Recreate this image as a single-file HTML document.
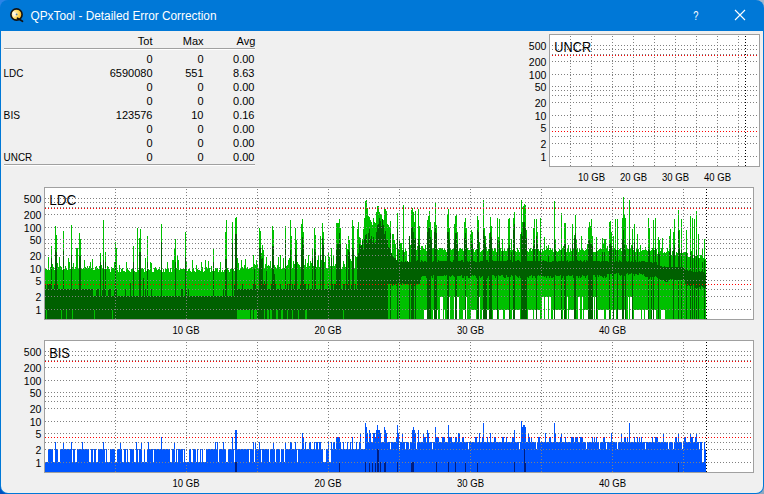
<!DOCTYPE html>
<html lang="en"><head><meta charset="utf-8"><title>QPxTool - Detailed Error Correction</title>
<style>html,body{margin:0;padding:0;background:#0078d7;}body{width:764px;height:494px;overflow:hidden;font-family:"Liberation Sans",Arial,sans-serif;}svg{display:block;}text{font-family:"Liberation Sans",Arial,sans-serif;}</style>
</head><body>
<svg width="764" height="494" viewBox="0 0 764 494">
<rect x="0" y="0" width="12" height="12" fill="#2a84e8"/>
<rect x="752" y="0" width="12" height="12" fill="#a0b8d0"/>
<rect x="0" y="482" width="12" height="12" fill="#0050c0"/>
<rect x="752" y="482" width="12" height="12" fill="#90a8c0"/>
<rect x="0" y="0" width="764" height="494" rx="8" ry="8" fill="#0078d7"/>
<path d="M1 31H763V486a7 7 0 0 1 -7 7H8a7 7 0 0 1 -7 -7z" fill="#f0f0f0"/>
<defs><radialGradient id="cd" cx="0.28" cy="0.42" r="0.85"><stop offset="0" stop-color="#fffbe8"/><stop offset="0.5" stop-color="#ffd95a"/><stop offset="1" stop-color="#f39a00"/></radialGradient></defs>
<g><circle cx="16.5" cy="14.5" r="5.6" fill="url(#cd)" stroke="#111" stroke-width="1.6"/><path d="M13 11.5 L17 14.5 L13.5 17.5" fill="#fff" fill-opacity="0.55"/><circle cx="16.6" cy="14.4" r="0.9" fill="#4a7aa8"/><path d="M17.5 18.2 L22.5 21.3" stroke="#111" stroke-width="1.7" stroke-linecap="round"/></g>
<text x="30.5" y="19.7" font-size="12" text-anchor="start" fill="#fff" textLength="186" lengthAdjust="spacingAndGlyphs">QPxTool - Detailed Error Correction</text>
<text x="693.2" y="19.8" font-size="12.5" text-anchor="start" fill="#fff" textLength="5.2" lengthAdjust="spacingAndGlyphs">?</text>
<path d="M735 10L745 20M745 10L735 20" stroke="#fff" stroke-width="1.1" fill="none"/>
<g shape-rendering="crispEdges"><rect x="4" y="48" width="251" height="1" fill="#a0a0a0"/><rect x="4" y="49" width="251" height="1" fill="#fff"/><rect x="4" y="164" width="251" height="1" fill="#a0a0a0"/><rect x="4" y="165" width="251" height="1" fill="#fff"/></g>
<g font-size="11">
<text x="152.5" y="45" font-size="11" text-anchor="end" fill="#000">Tot</text>
<text x="203.5" y="45" font-size="11" text-anchor="end" fill="#000">Max</text>
<text x="255.3" y="45" font-size="11" text-anchor="end" fill="#000">Avg</text>
<text x="152.5" y="63" font-size="11" text-anchor="end" fill="#000">0</text>
<text x="203.5" y="63" font-size="11" text-anchor="end" fill="#000">0</text>
<text x="254.5" y="63" font-size="11" text-anchor="end" fill="#000">0.00</text>
<text x="3.6" y="77" font-size="11" text-anchor="start" fill="#000" textLength="19.8" lengthAdjust="spacingAndGlyphs">LDC</text>
<text x="152.5" y="77" font-size="11" text-anchor="end" fill="#000">6590080</text>
<text x="203.5" y="77" font-size="11" text-anchor="end" fill="#000">551</text>
<text x="254.5" y="77" font-size="11" text-anchor="end" fill="#000">8.63</text>
<text x="152.5" y="91" font-size="11" text-anchor="end" fill="#000">0</text>
<text x="203.5" y="91" font-size="11" text-anchor="end" fill="#000">0</text>
<text x="254.5" y="91" font-size="11" text-anchor="end" fill="#000">0.00</text>
<text x="152.5" y="105" font-size="11" text-anchor="end" fill="#000">0</text>
<text x="203.5" y="105" font-size="11" text-anchor="end" fill="#000">0</text>
<text x="254.5" y="105" font-size="11" text-anchor="end" fill="#000">0.00</text>
<text x="3.6" y="119" font-size="11" text-anchor="start" fill="#000" textLength="16.4" lengthAdjust="spacingAndGlyphs">BIS</text>
<text x="152.5" y="119" font-size="11" text-anchor="end" fill="#000">123576</text>
<text x="203.5" y="119" font-size="11" text-anchor="end" fill="#000">10</text>
<text x="254.5" y="119" font-size="11" text-anchor="end" fill="#000">0.16</text>
<text x="152.5" y="133" font-size="11" text-anchor="end" fill="#000">0</text>
<text x="203.5" y="133" font-size="11" text-anchor="end" fill="#000">0</text>
<text x="254.5" y="133" font-size="11" text-anchor="end" fill="#000">0.00</text>
<text x="152.5" y="147" font-size="11" text-anchor="end" fill="#000">0</text>
<text x="203.5" y="147" font-size="11" text-anchor="end" fill="#000">0</text>
<text x="254.5" y="147" font-size="11" text-anchor="end" fill="#000">0.00</text>
<text x="3.6" y="161" font-size="11" text-anchor="start" fill="#000" textLength="28.6" lengthAdjust="spacingAndGlyphs">UNCR</text>
<text x="152.5" y="161" font-size="11" text-anchor="end" fill="#000">0</text>
<text x="203.5" y="161" font-size="11" text-anchor="end" fill="#000">0</text>
<text x="254.5" y="161" font-size="11" text-anchor="end" fill="#000">0.00</text>
</g>
<g shape-rendering="crispEdges">
<rect x="549" y="34" width="211" height="133" fill="#a0a0a0"/>
<rect x="550" y="35" width="209" height="131" fill="#fff"/>

<path d="M552 45h1v1h-1zM555 45h1v1h-1zM558 45h1v1h-1zM561 45h1v1h-1zM564 45h1v1h-1zM567 45h1v1h-1zM570 45h1v1h-1zM573 45h1v1h-1zM576 45h1v1h-1zM579 45h1v1h-1zM582 45h1v1h-1zM585 45h1v1h-1zM588 45h1v1h-1zM591 45h1v1h-1zM594 45h1v1h-1zM597 45h1v1h-1zM600 45h1v1h-1zM603 45h1v1h-1zM606 45h1v1h-1zM609 45h1v1h-1zM612 45h1v1h-1zM615 45h1v1h-1zM618 45h1v1h-1zM621 45h1v1h-1zM624 45h1v1h-1zM627 45h1v1h-1zM630 45h1v1h-1zM633 45h1v1h-1zM636 45h1v1h-1zM639 45h1v1h-1zM642 45h1v1h-1zM645 45h1v1h-1zM648 45h1v1h-1zM651 45h1v1h-1zM654 45h1v1h-1zM657 45h1v1h-1zM660 45h1v1h-1zM663 45h1v1h-1zM666 45h1v1h-1zM669 45h1v1h-1zM672 45h1v1h-1zM675 45h1v1h-1zM678 45h1v1h-1zM681 45h1v1h-1zM684 45h1v1h-1zM687 45h1v1h-1zM690 45h1v1h-1zM693 45h1v1h-1zM696 45h1v1h-1zM699 45h1v1h-1zM702 45h1v1h-1zM705 45h1v1h-1zM708 45h1v1h-1zM711 45h1v1h-1zM714 45h1v1h-1zM717 45h1v1h-1zM720 45h1v1h-1zM723 45h1v1h-1zM726 45h1v1h-1zM729 45h1v1h-1zM732 45h1v1h-1zM735 45h1v1h-1zM738 45h1v1h-1zM741 45h1v1h-1zM744 45h1v1h-1zM747 45h1v1h-1zM750 45h1v1h-1zM753 45h1v1h-1zM756 45h1v1h-1zM552 49h1v1h-1zM555 49h1v1h-1zM558 49h1v1h-1zM561 49h1v1h-1zM564 49h1v1h-1zM567 49h1v1h-1zM570 49h1v1h-1zM573 49h1v1h-1zM576 49h1v1h-1zM579 49h1v1h-1zM582 49h1v1h-1zM585 49h1v1h-1zM588 49h1v1h-1zM591 49h1v1h-1zM594 49h1v1h-1zM597 49h1v1h-1zM600 49h1v1h-1zM603 49h1v1h-1zM606 49h1v1h-1zM609 49h1v1h-1zM612 49h1v1h-1zM615 49h1v1h-1zM618 49h1v1h-1zM621 49h1v1h-1zM624 49h1v1h-1zM627 49h1v1h-1zM630 49h1v1h-1zM633 49h1v1h-1zM636 49h1v1h-1zM639 49h1v1h-1zM642 49h1v1h-1zM645 49h1v1h-1zM648 49h1v1h-1zM651 49h1v1h-1zM654 49h1v1h-1zM657 49h1v1h-1zM660 49h1v1h-1zM663 49h1v1h-1zM666 49h1v1h-1zM669 49h1v1h-1zM672 49h1v1h-1zM675 49h1v1h-1zM678 49h1v1h-1zM681 49h1v1h-1zM684 49h1v1h-1zM687 49h1v1h-1zM690 49h1v1h-1zM693 49h1v1h-1zM696 49h1v1h-1zM699 49h1v1h-1zM702 49h1v1h-1zM705 49h1v1h-1zM708 49h1v1h-1zM711 49h1v1h-1zM714 49h1v1h-1zM717 49h1v1h-1zM720 49h1v1h-1zM723 49h1v1h-1zM726 49h1v1h-1zM729 49h1v1h-1zM732 49h1v1h-1zM735 49h1v1h-1zM738 49h1v1h-1zM741 49h1v1h-1zM744 49h1v1h-1zM747 49h1v1h-1zM750 49h1v1h-1zM753 49h1v1h-1zM756 49h1v1h-1zM552 54h1v1h-1zM555 54h1v1h-1zM558 54h1v1h-1zM561 54h1v1h-1zM564 54h1v1h-1zM567 54h1v1h-1zM570 54h1v1h-1zM573 54h1v1h-1zM576 54h1v1h-1zM579 54h1v1h-1zM582 54h1v1h-1zM585 54h1v1h-1zM588 54h1v1h-1zM591 54h1v1h-1zM594 54h1v1h-1zM597 54h1v1h-1zM600 54h1v1h-1zM603 54h1v1h-1zM606 54h1v1h-1zM609 54h1v1h-1zM612 54h1v1h-1zM615 54h1v1h-1zM618 54h1v1h-1zM621 54h1v1h-1zM624 54h1v1h-1zM627 54h1v1h-1zM630 54h1v1h-1zM633 54h1v1h-1zM636 54h1v1h-1zM639 54h1v1h-1zM642 54h1v1h-1zM645 54h1v1h-1zM648 54h1v1h-1zM651 54h1v1h-1zM654 54h1v1h-1zM657 54h1v1h-1zM660 54h1v1h-1zM663 54h1v1h-1zM666 54h1v1h-1zM669 54h1v1h-1zM672 54h1v1h-1zM675 54h1v1h-1zM678 54h1v1h-1zM681 54h1v1h-1zM684 54h1v1h-1zM687 54h1v1h-1zM690 54h1v1h-1zM693 54h1v1h-1zM696 54h1v1h-1zM699 54h1v1h-1zM702 54h1v1h-1zM705 54h1v1h-1zM708 54h1v1h-1zM711 54h1v1h-1zM714 54h1v1h-1zM717 54h1v1h-1zM720 54h1v1h-1zM723 54h1v1h-1zM726 54h1v1h-1zM729 54h1v1h-1zM732 54h1v1h-1zM735 54h1v1h-1zM738 54h1v1h-1zM741 54h1v1h-1zM744 54h1v1h-1zM747 54h1v1h-1zM750 54h1v1h-1zM753 54h1v1h-1zM756 54h1v1h-1zM552 61h1v1h-1zM555 61h1v1h-1zM558 61h1v1h-1zM561 61h1v1h-1zM564 61h1v1h-1zM567 61h1v1h-1zM570 61h1v1h-1zM573 61h1v1h-1zM576 61h1v1h-1zM579 61h1v1h-1zM582 61h1v1h-1zM585 61h1v1h-1zM588 61h1v1h-1zM591 61h1v1h-1zM594 61h1v1h-1zM597 61h1v1h-1zM600 61h1v1h-1zM603 61h1v1h-1zM606 61h1v1h-1zM609 61h1v1h-1zM612 61h1v1h-1zM615 61h1v1h-1zM618 61h1v1h-1zM621 61h1v1h-1zM624 61h1v1h-1zM627 61h1v1h-1zM630 61h1v1h-1zM633 61h1v1h-1zM636 61h1v1h-1zM639 61h1v1h-1zM642 61h1v1h-1zM645 61h1v1h-1zM648 61h1v1h-1zM651 61h1v1h-1zM654 61h1v1h-1zM657 61h1v1h-1zM660 61h1v1h-1zM663 61h1v1h-1zM666 61h1v1h-1zM669 61h1v1h-1zM672 61h1v1h-1zM675 61h1v1h-1zM678 61h1v1h-1zM681 61h1v1h-1zM684 61h1v1h-1zM687 61h1v1h-1zM690 61h1v1h-1zM693 61h1v1h-1zM696 61h1v1h-1zM699 61h1v1h-1zM702 61h1v1h-1zM705 61h1v1h-1zM708 61h1v1h-1zM711 61h1v1h-1zM714 61h1v1h-1zM717 61h1v1h-1zM720 61h1v1h-1zM723 61h1v1h-1zM726 61h1v1h-1zM729 61h1v1h-1zM732 61h1v1h-1zM735 61h1v1h-1zM738 61h1v1h-1zM741 61h1v1h-1zM744 61h1v1h-1zM747 61h1v1h-1zM750 61h1v1h-1zM753 61h1v1h-1zM756 61h1v1h-1zM552 74h1v1h-1zM555 74h1v1h-1zM558 74h1v1h-1zM561 74h1v1h-1zM564 74h1v1h-1zM567 74h1v1h-1zM570 74h1v1h-1zM573 74h1v1h-1zM576 74h1v1h-1zM579 74h1v1h-1zM582 74h1v1h-1zM585 74h1v1h-1zM588 74h1v1h-1zM591 74h1v1h-1zM594 74h1v1h-1zM597 74h1v1h-1zM600 74h1v1h-1zM603 74h1v1h-1zM606 74h1v1h-1zM609 74h1v1h-1zM612 74h1v1h-1zM615 74h1v1h-1zM618 74h1v1h-1zM621 74h1v1h-1zM624 74h1v1h-1zM627 74h1v1h-1zM630 74h1v1h-1zM633 74h1v1h-1zM636 74h1v1h-1zM639 74h1v1h-1zM642 74h1v1h-1zM645 74h1v1h-1zM648 74h1v1h-1zM651 74h1v1h-1zM654 74h1v1h-1zM657 74h1v1h-1zM660 74h1v1h-1zM663 74h1v1h-1zM666 74h1v1h-1zM669 74h1v1h-1zM672 74h1v1h-1zM675 74h1v1h-1zM678 74h1v1h-1zM681 74h1v1h-1zM684 74h1v1h-1zM687 74h1v1h-1zM690 74h1v1h-1zM693 74h1v1h-1zM696 74h1v1h-1zM699 74h1v1h-1zM702 74h1v1h-1zM705 74h1v1h-1zM708 74h1v1h-1zM711 74h1v1h-1zM714 74h1v1h-1zM717 74h1v1h-1zM720 74h1v1h-1zM723 74h1v1h-1zM726 74h1v1h-1zM729 74h1v1h-1zM732 74h1v1h-1zM735 74h1v1h-1zM738 74h1v1h-1zM741 74h1v1h-1zM744 74h1v1h-1zM747 74h1v1h-1zM750 74h1v1h-1zM753 74h1v1h-1zM756 74h1v1h-1zM552 86h1v1h-1zM555 86h1v1h-1zM558 86h1v1h-1zM561 86h1v1h-1zM564 86h1v1h-1zM567 86h1v1h-1zM570 86h1v1h-1zM573 86h1v1h-1zM576 86h1v1h-1zM579 86h1v1h-1zM582 86h1v1h-1zM585 86h1v1h-1zM588 86h1v1h-1zM591 86h1v1h-1zM594 86h1v1h-1zM597 86h1v1h-1zM600 86h1v1h-1zM603 86h1v1h-1zM606 86h1v1h-1zM609 86h1v1h-1zM612 86h1v1h-1zM615 86h1v1h-1zM618 86h1v1h-1zM621 86h1v1h-1zM624 86h1v1h-1zM627 86h1v1h-1zM630 86h1v1h-1zM633 86h1v1h-1zM636 86h1v1h-1zM639 86h1v1h-1zM642 86h1v1h-1zM645 86h1v1h-1zM648 86h1v1h-1zM651 86h1v1h-1zM654 86h1v1h-1zM657 86h1v1h-1zM660 86h1v1h-1zM663 86h1v1h-1zM666 86h1v1h-1zM669 86h1v1h-1zM672 86h1v1h-1zM675 86h1v1h-1zM678 86h1v1h-1zM681 86h1v1h-1zM684 86h1v1h-1zM687 86h1v1h-1zM690 86h1v1h-1zM693 86h1v1h-1zM696 86h1v1h-1zM699 86h1v1h-1zM702 86h1v1h-1zM705 86h1v1h-1zM708 86h1v1h-1zM711 86h1v1h-1zM714 86h1v1h-1zM717 86h1v1h-1zM720 86h1v1h-1zM723 86h1v1h-1zM726 86h1v1h-1zM729 86h1v1h-1zM732 86h1v1h-1zM735 86h1v1h-1zM738 86h1v1h-1zM741 86h1v1h-1zM744 86h1v1h-1zM747 86h1v1h-1zM750 86h1v1h-1zM753 86h1v1h-1zM756 86h1v1h-1zM552 90h1v1h-1zM555 90h1v1h-1zM558 90h1v1h-1zM561 90h1v1h-1zM564 90h1v1h-1zM567 90h1v1h-1zM570 90h1v1h-1zM573 90h1v1h-1zM576 90h1v1h-1zM579 90h1v1h-1zM582 90h1v1h-1zM585 90h1v1h-1zM588 90h1v1h-1zM591 90h1v1h-1zM594 90h1v1h-1zM597 90h1v1h-1zM600 90h1v1h-1zM603 90h1v1h-1zM606 90h1v1h-1zM609 90h1v1h-1zM612 90h1v1h-1zM615 90h1v1h-1zM618 90h1v1h-1zM621 90h1v1h-1zM624 90h1v1h-1zM627 90h1v1h-1zM630 90h1v1h-1zM633 90h1v1h-1zM636 90h1v1h-1zM639 90h1v1h-1zM642 90h1v1h-1zM645 90h1v1h-1zM648 90h1v1h-1zM651 90h1v1h-1zM654 90h1v1h-1zM657 90h1v1h-1zM660 90h1v1h-1zM663 90h1v1h-1zM666 90h1v1h-1zM669 90h1v1h-1zM672 90h1v1h-1zM675 90h1v1h-1zM678 90h1v1h-1zM681 90h1v1h-1zM684 90h1v1h-1zM687 90h1v1h-1zM690 90h1v1h-1zM693 90h1v1h-1zM696 90h1v1h-1zM699 90h1v1h-1zM702 90h1v1h-1zM705 90h1v1h-1zM708 90h1v1h-1zM711 90h1v1h-1zM714 90h1v1h-1zM717 90h1v1h-1zM720 90h1v1h-1zM723 90h1v1h-1zM726 90h1v1h-1zM729 90h1v1h-1zM732 90h1v1h-1zM735 90h1v1h-1zM738 90h1v1h-1zM741 90h1v1h-1zM744 90h1v1h-1zM747 90h1v1h-1zM750 90h1v1h-1zM753 90h1v1h-1zM756 90h1v1h-1zM552 95h1v1h-1zM555 95h1v1h-1zM558 95h1v1h-1zM561 95h1v1h-1zM564 95h1v1h-1zM567 95h1v1h-1zM570 95h1v1h-1zM573 95h1v1h-1zM576 95h1v1h-1zM579 95h1v1h-1zM582 95h1v1h-1zM585 95h1v1h-1zM588 95h1v1h-1zM591 95h1v1h-1zM594 95h1v1h-1zM597 95h1v1h-1zM600 95h1v1h-1zM603 95h1v1h-1zM606 95h1v1h-1zM609 95h1v1h-1zM612 95h1v1h-1zM615 95h1v1h-1zM618 95h1v1h-1zM621 95h1v1h-1zM624 95h1v1h-1zM627 95h1v1h-1zM630 95h1v1h-1zM633 95h1v1h-1zM636 95h1v1h-1zM639 95h1v1h-1zM642 95h1v1h-1zM645 95h1v1h-1zM648 95h1v1h-1zM651 95h1v1h-1zM654 95h1v1h-1zM657 95h1v1h-1zM660 95h1v1h-1zM663 95h1v1h-1zM666 95h1v1h-1zM669 95h1v1h-1zM672 95h1v1h-1zM675 95h1v1h-1zM678 95h1v1h-1zM681 95h1v1h-1zM684 95h1v1h-1zM687 95h1v1h-1zM690 95h1v1h-1zM693 95h1v1h-1zM696 95h1v1h-1zM699 95h1v1h-1zM702 95h1v1h-1zM705 95h1v1h-1zM708 95h1v1h-1zM711 95h1v1h-1zM714 95h1v1h-1zM717 95h1v1h-1zM720 95h1v1h-1zM723 95h1v1h-1zM726 95h1v1h-1zM729 95h1v1h-1zM732 95h1v1h-1zM735 95h1v1h-1zM738 95h1v1h-1zM741 95h1v1h-1zM744 95h1v1h-1zM747 95h1v1h-1zM750 95h1v1h-1zM753 95h1v1h-1zM756 95h1v1h-1zM552 102h1v1h-1zM555 102h1v1h-1zM558 102h1v1h-1zM561 102h1v1h-1zM564 102h1v1h-1zM567 102h1v1h-1zM570 102h1v1h-1zM573 102h1v1h-1zM576 102h1v1h-1zM579 102h1v1h-1zM582 102h1v1h-1zM585 102h1v1h-1zM588 102h1v1h-1zM591 102h1v1h-1zM594 102h1v1h-1zM597 102h1v1h-1zM600 102h1v1h-1zM603 102h1v1h-1zM606 102h1v1h-1zM609 102h1v1h-1zM612 102h1v1h-1zM615 102h1v1h-1zM618 102h1v1h-1zM621 102h1v1h-1zM624 102h1v1h-1zM627 102h1v1h-1zM630 102h1v1h-1zM633 102h1v1h-1zM636 102h1v1h-1zM639 102h1v1h-1zM642 102h1v1h-1zM645 102h1v1h-1zM648 102h1v1h-1zM651 102h1v1h-1zM654 102h1v1h-1zM657 102h1v1h-1zM660 102h1v1h-1zM663 102h1v1h-1zM666 102h1v1h-1zM669 102h1v1h-1zM672 102h1v1h-1zM675 102h1v1h-1zM678 102h1v1h-1zM681 102h1v1h-1zM684 102h1v1h-1zM687 102h1v1h-1zM690 102h1v1h-1zM693 102h1v1h-1zM696 102h1v1h-1zM699 102h1v1h-1zM702 102h1v1h-1zM705 102h1v1h-1zM708 102h1v1h-1zM711 102h1v1h-1zM714 102h1v1h-1zM717 102h1v1h-1zM720 102h1v1h-1zM723 102h1v1h-1zM726 102h1v1h-1zM729 102h1v1h-1zM732 102h1v1h-1zM735 102h1v1h-1zM738 102h1v1h-1zM741 102h1v1h-1zM744 102h1v1h-1zM747 102h1v1h-1zM750 102h1v1h-1zM753 102h1v1h-1zM756 102h1v1h-1zM552 115h1v1h-1zM555 115h1v1h-1zM558 115h1v1h-1zM561 115h1v1h-1zM564 115h1v1h-1zM567 115h1v1h-1zM570 115h1v1h-1zM573 115h1v1h-1zM576 115h1v1h-1zM579 115h1v1h-1zM582 115h1v1h-1zM585 115h1v1h-1zM588 115h1v1h-1zM591 115h1v1h-1zM594 115h1v1h-1zM597 115h1v1h-1zM600 115h1v1h-1zM603 115h1v1h-1zM606 115h1v1h-1zM609 115h1v1h-1zM612 115h1v1h-1zM615 115h1v1h-1zM618 115h1v1h-1zM621 115h1v1h-1zM624 115h1v1h-1zM627 115h1v1h-1zM630 115h1v1h-1zM633 115h1v1h-1zM636 115h1v1h-1zM639 115h1v1h-1zM642 115h1v1h-1zM645 115h1v1h-1zM648 115h1v1h-1zM651 115h1v1h-1zM654 115h1v1h-1zM657 115h1v1h-1zM660 115h1v1h-1zM663 115h1v1h-1zM666 115h1v1h-1zM669 115h1v1h-1zM672 115h1v1h-1zM675 115h1v1h-1zM678 115h1v1h-1zM681 115h1v1h-1zM684 115h1v1h-1zM687 115h1v1h-1zM690 115h1v1h-1zM693 115h1v1h-1zM696 115h1v1h-1zM699 115h1v1h-1zM702 115h1v1h-1zM705 115h1v1h-1zM708 115h1v1h-1zM711 115h1v1h-1zM714 115h1v1h-1zM717 115h1v1h-1zM720 115h1v1h-1zM723 115h1v1h-1zM726 115h1v1h-1zM729 115h1v1h-1zM732 115h1v1h-1zM735 115h1v1h-1zM738 115h1v1h-1zM741 115h1v1h-1zM744 115h1v1h-1zM747 115h1v1h-1zM750 115h1v1h-1zM753 115h1v1h-1zM756 115h1v1h-1zM552 127h1v1h-1zM555 127h1v1h-1zM558 127h1v1h-1zM561 127h1v1h-1zM564 127h1v1h-1zM567 127h1v1h-1zM570 127h1v1h-1zM573 127h1v1h-1zM576 127h1v1h-1zM579 127h1v1h-1zM582 127h1v1h-1zM585 127h1v1h-1zM588 127h1v1h-1zM591 127h1v1h-1zM594 127h1v1h-1zM597 127h1v1h-1zM600 127h1v1h-1zM603 127h1v1h-1zM606 127h1v1h-1zM609 127h1v1h-1zM612 127h1v1h-1zM615 127h1v1h-1zM618 127h1v1h-1zM621 127h1v1h-1zM624 127h1v1h-1zM627 127h1v1h-1zM630 127h1v1h-1zM633 127h1v1h-1zM636 127h1v1h-1zM639 127h1v1h-1zM642 127h1v1h-1zM645 127h1v1h-1zM648 127h1v1h-1zM651 127h1v1h-1zM654 127h1v1h-1zM657 127h1v1h-1zM660 127h1v1h-1zM663 127h1v1h-1zM666 127h1v1h-1zM669 127h1v1h-1zM672 127h1v1h-1zM675 127h1v1h-1zM678 127h1v1h-1zM681 127h1v1h-1zM684 127h1v1h-1zM687 127h1v1h-1zM690 127h1v1h-1zM693 127h1v1h-1zM696 127h1v1h-1zM699 127h1v1h-1zM702 127h1v1h-1zM705 127h1v1h-1zM708 127h1v1h-1zM711 127h1v1h-1zM714 127h1v1h-1zM717 127h1v1h-1zM720 127h1v1h-1zM723 127h1v1h-1zM726 127h1v1h-1zM729 127h1v1h-1zM732 127h1v1h-1zM735 127h1v1h-1zM738 127h1v1h-1zM741 127h1v1h-1zM744 127h1v1h-1zM747 127h1v1h-1zM750 127h1v1h-1zM753 127h1v1h-1zM756 127h1v1h-1zM552 136h1v1h-1zM555 136h1v1h-1zM558 136h1v1h-1zM561 136h1v1h-1zM564 136h1v1h-1zM567 136h1v1h-1zM570 136h1v1h-1zM573 136h1v1h-1zM576 136h1v1h-1zM579 136h1v1h-1zM582 136h1v1h-1zM585 136h1v1h-1zM588 136h1v1h-1zM591 136h1v1h-1zM594 136h1v1h-1zM597 136h1v1h-1zM600 136h1v1h-1zM603 136h1v1h-1zM606 136h1v1h-1zM609 136h1v1h-1zM612 136h1v1h-1zM615 136h1v1h-1zM618 136h1v1h-1zM621 136h1v1h-1zM624 136h1v1h-1zM627 136h1v1h-1zM630 136h1v1h-1zM633 136h1v1h-1zM636 136h1v1h-1zM639 136h1v1h-1zM642 136h1v1h-1zM645 136h1v1h-1zM648 136h1v1h-1zM651 136h1v1h-1zM654 136h1v1h-1zM657 136h1v1h-1zM660 136h1v1h-1zM663 136h1v1h-1zM666 136h1v1h-1zM669 136h1v1h-1zM672 136h1v1h-1zM675 136h1v1h-1zM678 136h1v1h-1zM681 136h1v1h-1zM684 136h1v1h-1zM687 136h1v1h-1zM690 136h1v1h-1zM693 136h1v1h-1zM696 136h1v1h-1zM699 136h1v1h-1zM702 136h1v1h-1zM705 136h1v1h-1zM708 136h1v1h-1zM711 136h1v1h-1zM714 136h1v1h-1zM717 136h1v1h-1zM720 136h1v1h-1zM723 136h1v1h-1zM726 136h1v1h-1zM729 136h1v1h-1zM732 136h1v1h-1zM735 136h1v1h-1zM738 136h1v1h-1zM741 136h1v1h-1zM744 136h1v1h-1zM747 136h1v1h-1zM750 136h1v1h-1zM753 136h1v1h-1zM756 136h1v1h-1zM552 143h1v1h-1zM555 143h1v1h-1zM558 143h1v1h-1zM561 143h1v1h-1zM564 143h1v1h-1zM567 143h1v1h-1zM570 143h1v1h-1zM573 143h1v1h-1zM576 143h1v1h-1zM579 143h1v1h-1zM582 143h1v1h-1zM585 143h1v1h-1zM588 143h1v1h-1zM591 143h1v1h-1zM594 143h1v1h-1zM597 143h1v1h-1zM600 143h1v1h-1zM603 143h1v1h-1zM606 143h1v1h-1zM609 143h1v1h-1zM612 143h1v1h-1zM615 143h1v1h-1zM618 143h1v1h-1zM621 143h1v1h-1zM624 143h1v1h-1zM627 143h1v1h-1zM630 143h1v1h-1zM633 143h1v1h-1zM636 143h1v1h-1zM639 143h1v1h-1zM642 143h1v1h-1zM645 143h1v1h-1zM648 143h1v1h-1zM651 143h1v1h-1zM654 143h1v1h-1zM657 143h1v1h-1zM660 143h1v1h-1zM663 143h1v1h-1zM666 143h1v1h-1zM669 143h1v1h-1zM672 143h1v1h-1zM675 143h1v1h-1zM678 143h1v1h-1zM681 143h1v1h-1zM684 143h1v1h-1zM687 143h1v1h-1zM690 143h1v1h-1zM693 143h1v1h-1zM696 143h1v1h-1zM699 143h1v1h-1zM702 143h1v1h-1zM705 143h1v1h-1zM708 143h1v1h-1zM711 143h1v1h-1zM714 143h1v1h-1zM717 143h1v1h-1zM720 143h1v1h-1zM723 143h1v1h-1zM726 143h1v1h-1zM729 143h1v1h-1zM732 143h1v1h-1zM735 143h1v1h-1zM738 143h1v1h-1zM741 143h1v1h-1zM744 143h1v1h-1zM747 143h1v1h-1zM750 143h1v1h-1zM753 143h1v1h-1zM756 143h1v1h-1zM552 156h1v1h-1zM555 156h1v1h-1zM558 156h1v1h-1zM561 156h1v1h-1zM564 156h1v1h-1zM567 156h1v1h-1zM570 156h1v1h-1zM573 156h1v1h-1zM576 156h1v1h-1zM579 156h1v1h-1zM582 156h1v1h-1zM585 156h1v1h-1zM588 156h1v1h-1zM591 156h1v1h-1zM594 156h1v1h-1zM597 156h1v1h-1zM600 156h1v1h-1zM603 156h1v1h-1zM606 156h1v1h-1zM609 156h1v1h-1zM612 156h1v1h-1zM615 156h1v1h-1zM618 156h1v1h-1zM621 156h1v1h-1zM624 156h1v1h-1zM627 156h1v1h-1zM630 156h1v1h-1zM633 156h1v1h-1zM636 156h1v1h-1zM639 156h1v1h-1zM642 156h1v1h-1zM645 156h1v1h-1zM648 156h1v1h-1zM651 156h1v1h-1zM654 156h1v1h-1zM657 156h1v1h-1zM660 156h1v1h-1zM663 156h1v1h-1zM666 156h1v1h-1zM669 156h1v1h-1zM672 156h1v1h-1zM675 156h1v1h-1zM678 156h1v1h-1zM681 156h1v1h-1zM684 156h1v1h-1zM687 156h1v1h-1zM690 156h1v1h-1zM693 156h1v1h-1zM696 156h1v1h-1zM699 156h1v1h-1zM702 156h1v1h-1zM705 156h1v1h-1zM708 156h1v1h-1zM711 156h1v1h-1zM714 156h1v1h-1zM717 156h1v1h-1zM720 156h1v1h-1zM723 156h1v1h-1zM726 156h1v1h-1zM729 156h1v1h-1zM732 156h1v1h-1zM735 156h1v1h-1zM738 156h1v1h-1zM741 156h1v1h-1zM744 156h1v1h-1zM747 156h1v1h-1zM750 156h1v1h-1zM753 156h1v1h-1zM756 156h1v1h-1zM570 36h1v1h-1zM570 39h1v1h-1zM570 42h1v1h-1zM570 45h1v1h-1zM570 48h1v1h-1zM570 51h1v1h-1zM570 54h1v1h-1zM570 57h1v1h-1zM570 60h1v1h-1zM570 63h1v1h-1zM570 66h1v1h-1zM570 69h1v1h-1zM570 72h1v1h-1zM570 75h1v1h-1zM570 78h1v1h-1zM570 81h1v1h-1zM570 84h1v1h-1zM570 87h1v1h-1zM570 90h1v1h-1zM570 93h1v1h-1zM570 96h1v1h-1zM570 99h1v1h-1zM570 102h1v1h-1zM570 105h1v1h-1zM570 108h1v1h-1zM570 111h1v1h-1zM570 114h1v1h-1zM570 117h1v1h-1zM570 120h1v1h-1zM570 123h1v1h-1zM570 126h1v1h-1zM570 129h1v1h-1zM570 132h1v1h-1zM570 135h1v1h-1zM570 138h1v1h-1zM570 141h1v1h-1zM570 144h1v1h-1zM570 147h1v1h-1zM570 150h1v1h-1zM570 153h1v1h-1zM570 156h1v1h-1zM570 159h1v1h-1zM570 162h1v1h-1zM570 165h1v1h-1zM591 36h1v1h-1zM591 39h1v1h-1zM591 42h1v1h-1zM591 45h1v1h-1zM591 48h1v1h-1zM591 51h1v1h-1zM591 54h1v1h-1zM591 57h1v1h-1zM591 60h1v1h-1zM591 63h1v1h-1zM591 66h1v1h-1zM591 69h1v1h-1zM591 72h1v1h-1zM591 75h1v1h-1zM591 78h1v1h-1zM591 81h1v1h-1zM591 84h1v1h-1zM591 87h1v1h-1zM591 90h1v1h-1zM591 93h1v1h-1zM591 96h1v1h-1zM591 99h1v1h-1zM591 102h1v1h-1zM591 105h1v1h-1zM591 108h1v1h-1zM591 111h1v1h-1zM591 114h1v1h-1zM591 117h1v1h-1zM591 120h1v1h-1zM591 123h1v1h-1zM591 126h1v1h-1zM591 129h1v1h-1zM591 132h1v1h-1zM591 135h1v1h-1zM591 138h1v1h-1zM591 141h1v1h-1zM591 144h1v1h-1zM591 147h1v1h-1zM591 150h1v1h-1zM591 153h1v1h-1zM591 156h1v1h-1zM591 159h1v1h-1zM591 162h1v1h-1zM591 165h1v1h-1zM612 36h1v1h-1zM612 39h1v1h-1zM612 42h1v1h-1zM612 45h1v1h-1zM612 48h1v1h-1zM612 51h1v1h-1zM612 54h1v1h-1zM612 57h1v1h-1zM612 60h1v1h-1zM612 63h1v1h-1zM612 66h1v1h-1zM612 69h1v1h-1zM612 72h1v1h-1zM612 75h1v1h-1zM612 78h1v1h-1zM612 81h1v1h-1zM612 84h1v1h-1zM612 87h1v1h-1zM612 90h1v1h-1zM612 93h1v1h-1zM612 96h1v1h-1zM612 99h1v1h-1zM612 102h1v1h-1zM612 105h1v1h-1zM612 108h1v1h-1zM612 111h1v1h-1zM612 114h1v1h-1zM612 117h1v1h-1zM612 120h1v1h-1zM612 123h1v1h-1zM612 126h1v1h-1zM612 129h1v1h-1zM612 132h1v1h-1zM612 135h1v1h-1zM612 138h1v1h-1zM612 141h1v1h-1zM612 144h1v1h-1zM612 147h1v1h-1zM612 150h1v1h-1zM612 153h1v1h-1zM612 156h1v1h-1zM612 159h1v1h-1zM612 162h1v1h-1zM612 165h1v1h-1zM633 36h1v1h-1zM633 39h1v1h-1zM633 42h1v1h-1zM633 45h1v1h-1zM633 48h1v1h-1zM633 51h1v1h-1zM633 54h1v1h-1zM633 57h1v1h-1zM633 60h1v1h-1zM633 63h1v1h-1zM633 66h1v1h-1zM633 69h1v1h-1zM633 72h1v1h-1zM633 75h1v1h-1zM633 78h1v1h-1zM633 81h1v1h-1zM633 84h1v1h-1zM633 87h1v1h-1zM633 90h1v1h-1zM633 93h1v1h-1zM633 96h1v1h-1zM633 99h1v1h-1zM633 102h1v1h-1zM633 105h1v1h-1zM633 108h1v1h-1zM633 111h1v1h-1zM633 114h1v1h-1zM633 117h1v1h-1zM633 120h1v1h-1zM633 123h1v1h-1zM633 126h1v1h-1zM633 129h1v1h-1zM633 132h1v1h-1zM633 135h1v1h-1zM633 138h1v1h-1zM633 141h1v1h-1zM633 144h1v1h-1zM633 147h1v1h-1zM633 150h1v1h-1zM633 153h1v1h-1zM633 156h1v1h-1zM633 159h1v1h-1zM633 162h1v1h-1zM633 165h1v1h-1zM654 36h1v1h-1zM654 39h1v1h-1zM654 42h1v1h-1zM654 45h1v1h-1zM654 48h1v1h-1zM654 51h1v1h-1zM654 54h1v1h-1zM654 57h1v1h-1zM654 60h1v1h-1zM654 63h1v1h-1zM654 66h1v1h-1zM654 69h1v1h-1zM654 72h1v1h-1zM654 75h1v1h-1zM654 78h1v1h-1zM654 81h1v1h-1zM654 84h1v1h-1zM654 87h1v1h-1zM654 90h1v1h-1zM654 93h1v1h-1zM654 96h1v1h-1zM654 99h1v1h-1zM654 102h1v1h-1zM654 105h1v1h-1zM654 108h1v1h-1zM654 111h1v1h-1zM654 114h1v1h-1zM654 117h1v1h-1zM654 120h1v1h-1zM654 123h1v1h-1zM654 126h1v1h-1zM654 129h1v1h-1zM654 132h1v1h-1zM654 135h1v1h-1zM654 138h1v1h-1zM654 141h1v1h-1zM654 144h1v1h-1zM654 147h1v1h-1zM654 150h1v1h-1zM654 153h1v1h-1zM654 156h1v1h-1zM654 159h1v1h-1zM654 162h1v1h-1zM654 165h1v1h-1zM675 36h1v1h-1zM675 39h1v1h-1zM675 42h1v1h-1zM675 45h1v1h-1zM675 48h1v1h-1zM675 51h1v1h-1zM675 54h1v1h-1zM675 57h1v1h-1zM675 60h1v1h-1zM675 63h1v1h-1zM675 66h1v1h-1zM675 69h1v1h-1zM675 72h1v1h-1zM675 75h1v1h-1zM675 78h1v1h-1zM675 81h1v1h-1zM675 84h1v1h-1zM675 87h1v1h-1zM675 90h1v1h-1zM675 93h1v1h-1zM675 96h1v1h-1zM675 99h1v1h-1zM675 102h1v1h-1zM675 105h1v1h-1zM675 108h1v1h-1zM675 111h1v1h-1zM675 114h1v1h-1zM675 117h1v1h-1zM675 120h1v1h-1zM675 123h1v1h-1zM675 126h1v1h-1zM675 129h1v1h-1zM675 132h1v1h-1zM675 135h1v1h-1zM675 138h1v1h-1zM675 141h1v1h-1zM675 144h1v1h-1zM675 147h1v1h-1zM675 150h1v1h-1zM675 153h1v1h-1zM675 156h1v1h-1zM675 159h1v1h-1zM675 162h1v1h-1zM675 165h1v1h-1zM696 36h1v1h-1zM696 39h1v1h-1zM696 42h1v1h-1zM696 45h1v1h-1zM696 48h1v1h-1zM696 51h1v1h-1zM696 54h1v1h-1zM696 57h1v1h-1zM696 60h1v1h-1zM696 63h1v1h-1zM696 66h1v1h-1zM696 69h1v1h-1zM696 72h1v1h-1zM696 75h1v1h-1zM696 78h1v1h-1zM696 81h1v1h-1zM696 84h1v1h-1zM696 87h1v1h-1zM696 90h1v1h-1zM696 93h1v1h-1zM696 96h1v1h-1zM696 99h1v1h-1zM696 102h1v1h-1zM696 105h1v1h-1zM696 108h1v1h-1zM696 111h1v1h-1zM696 114h1v1h-1zM696 117h1v1h-1zM696 120h1v1h-1zM696 123h1v1h-1zM696 126h1v1h-1zM696 129h1v1h-1zM696 132h1v1h-1zM696 135h1v1h-1zM696 138h1v1h-1zM696 141h1v1h-1zM696 144h1v1h-1zM696 147h1v1h-1zM696 150h1v1h-1zM696 153h1v1h-1zM696 156h1v1h-1zM696 159h1v1h-1zM696 162h1v1h-1zM696 165h1v1h-1zM717 36h1v1h-1zM717 39h1v1h-1zM717 42h1v1h-1zM717 45h1v1h-1zM717 48h1v1h-1zM717 51h1v1h-1zM717 54h1v1h-1zM717 57h1v1h-1zM717 60h1v1h-1zM717 63h1v1h-1zM717 66h1v1h-1zM717 69h1v1h-1zM717 72h1v1h-1zM717 75h1v1h-1zM717 78h1v1h-1zM717 81h1v1h-1zM717 84h1v1h-1zM717 87h1v1h-1zM717 90h1v1h-1zM717 93h1v1h-1zM717 96h1v1h-1zM717 99h1v1h-1zM717 102h1v1h-1zM717 105h1v1h-1zM717 108h1v1h-1zM717 111h1v1h-1zM717 114h1v1h-1zM717 117h1v1h-1zM717 120h1v1h-1zM717 123h1v1h-1zM717 126h1v1h-1zM717 129h1v1h-1zM717 132h1v1h-1zM717 135h1v1h-1zM717 138h1v1h-1zM717 141h1v1h-1zM717 144h1v1h-1zM717 147h1v1h-1zM717 150h1v1h-1zM717 153h1v1h-1zM717 156h1v1h-1zM717 159h1v1h-1zM717 162h1v1h-1zM717 165h1v1h-1zM738 36h1v1h-1zM738 39h1v1h-1zM738 42h1v1h-1zM738 45h1v1h-1zM738 48h1v1h-1zM738 51h1v1h-1zM738 54h1v1h-1zM738 57h1v1h-1zM738 60h1v1h-1zM738 63h1v1h-1zM738 66h1v1h-1zM738 69h1v1h-1zM738 72h1v1h-1zM738 75h1v1h-1zM738 78h1v1h-1zM738 81h1v1h-1zM738 84h1v1h-1zM738 87h1v1h-1zM738 90h1v1h-1zM738 93h1v1h-1zM738 96h1v1h-1zM738 99h1v1h-1zM738 102h1v1h-1zM738 105h1v1h-1zM738 108h1v1h-1zM738 111h1v1h-1zM738 114h1v1h-1zM738 117h1v1h-1zM738 120h1v1h-1zM738 123h1v1h-1zM738 126h1v1h-1zM738 129h1v1h-1zM738 132h1v1h-1zM738 135h1v1h-1zM738 138h1v1h-1zM738 141h1v1h-1zM738 144h1v1h-1zM738 147h1v1h-1zM738 150h1v1h-1zM738 153h1v1h-1zM738 156h1v1h-1zM738 159h1v1h-1zM738 162h1v1h-1zM738 165h1v1h-1z" fill="#808080"/>
<path d="M552 55h1v1h-1zM555 55h1v1h-1zM558 55h1v1h-1zM561 55h1v1h-1zM564 55h1v1h-1zM567 55h1v1h-1zM570 55h1v1h-1zM573 55h1v1h-1zM576 55h1v1h-1zM579 55h1v1h-1zM582 55h1v1h-1zM585 55h1v1h-1zM588 55h1v1h-1zM591 55h1v1h-1zM594 55h1v1h-1zM597 55h1v1h-1zM600 55h1v1h-1zM603 55h1v1h-1zM606 55h1v1h-1zM609 55h1v1h-1zM612 55h1v1h-1zM615 55h1v1h-1zM618 55h1v1h-1zM621 55h1v1h-1zM624 55h1v1h-1zM627 55h1v1h-1zM630 55h1v1h-1zM633 55h1v1h-1zM636 55h1v1h-1zM639 55h1v1h-1zM642 55h1v1h-1zM645 55h1v1h-1zM648 55h1v1h-1zM651 55h1v1h-1zM654 55h1v1h-1zM657 55h1v1h-1zM660 55h1v1h-1zM663 55h1v1h-1zM666 55h1v1h-1zM669 55h1v1h-1zM672 55h1v1h-1zM675 55h1v1h-1zM678 55h1v1h-1zM681 55h1v1h-1zM684 55h1v1h-1zM687 55h1v1h-1zM690 55h1v1h-1zM693 55h1v1h-1zM696 55h1v1h-1zM699 55h1v1h-1zM702 55h1v1h-1zM705 55h1v1h-1zM708 55h1v1h-1zM711 55h1v1h-1zM714 55h1v1h-1zM717 55h1v1h-1zM720 55h1v1h-1zM723 55h1v1h-1zM726 55h1v1h-1zM729 55h1v1h-1zM732 55h1v1h-1zM735 55h1v1h-1zM738 55h1v1h-1zM741 55h1v1h-1zM744 55h1v1h-1zM747 55h1v1h-1zM750 55h1v1h-1zM753 55h1v1h-1zM756 55h1v1h-1zM552 131h1v1h-1zM555 131h1v1h-1zM558 131h1v1h-1zM561 131h1v1h-1zM564 131h1v1h-1zM567 131h1v1h-1zM570 131h1v1h-1zM573 131h1v1h-1zM576 131h1v1h-1zM579 131h1v1h-1zM582 131h1v1h-1zM585 131h1v1h-1zM588 131h1v1h-1zM591 131h1v1h-1zM594 131h1v1h-1zM597 131h1v1h-1zM600 131h1v1h-1zM603 131h1v1h-1zM606 131h1v1h-1zM609 131h1v1h-1zM612 131h1v1h-1zM615 131h1v1h-1zM618 131h1v1h-1zM621 131h1v1h-1zM624 131h1v1h-1zM627 131h1v1h-1zM630 131h1v1h-1zM633 131h1v1h-1zM636 131h1v1h-1zM639 131h1v1h-1zM642 131h1v1h-1zM645 131h1v1h-1zM648 131h1v1h-1zM651 131h1v1h-1zM654 131h1v1h-1zM657 131h1v1h-1zM660 131h1v1h-1zM663 131h1v1h-1zM666 131h1v1h-1zM669 131h1v1h-1zM672 131h1v1h-1zM675 131h1v1h-1zM678 131h1v1h-1zM681 131h1v1h-1zM684 131h1v1h-1zM687 131h1v1h-1zM690 131h1v1h-1zM693 131h1v1h-1zM696 131h1v1h-1zM699 131h1v1h-1zM702 131h1v1h-1zM705 131h1v1h-1zM708 131h1v1h-1zM711 131h1v1h-1zM714 131h1v1h-1zM717 131h1v1h-1zM720 131h1v1h-1zM723 131h1v1h-1zM726 131h1v1h-1zM729 131h1v1h-1zM732 131h1v1h-1zM735 131h1v1h-1zM738 131h1v1h-1zM741 131h1v1h-1zM744 131h1v1h-1zM747 131h1v1h-1zM750 131h1v1h-1zM753 131h1v1h-1zM756 131h1v1h-1z" fill="#ff0000"/>
<path d="M745 36h1v1h-1zM745 39h1v1h-1zM745 42h1v1h-1zM745 45h1v1h-1zM745 48h1v1h-1zM745 51h1v1h-1zM745 54h1v1h-1zM745 57h1v1h-1zM745 60h1v1h-1zM745 63h1v1h-1zM745 66h1v1h-1zM745 69h1v1h-1zM745 72h1v1h-1zM745 75h1v1h-1zM745 78h1v1h-1zM745 81h1v1h-1zM745 84h1v1h-1zM745 87h1v1h-1zM745 90h1v1h-1zM745 93h1v1h-1zM745 96h1v1h-1zM745 99h1v1h-1zM745 102h1v1h-1zM745 105h1v1h-1zM745 108h1v1h-1zM745 111h1v1h-1zM745 114h1v1h-1zM745 117h1v1h-1zM745 120h1v1h-1zM745 123h1v1h-1zM745 126h1v1h-1zM745 129h1v1h-1zM745 132h1v1h-1zM745 135h1v1h-1zM745 138h1v1h-1zM745 141h1v1h-1zM745 144h1v1h-1zM745 147h1v1h-1zM745 150h1v1h-1zM745 153h1v1h-1zM745 156h1v1h-1zM745 159h1v1h-1zM745 162h1v1h-1zM745 165h1v1h-1z" fill="#000"/>
</g>
<text x="554.3" y="52" font-size="14" text-anchor="start" fill="#000" textLength="36.8" lengthAdjust="spacingAndGlyphs">UNCR</text>
<text x="546.4" y="50" font-size="11" text-anchor="end" fill="#000" textLength="17.55" lengthAdjust="spacingAndGlyphs">500</text>
<text x="546.4" y="66" font-size="11" text-anchor="end" fill="#000" textLength="17.55" lengthAdjust="spacingAndGlyphs">200</text>
<text x="546.4" y="79" font-size="11" text-anchor="end" fill="#000" textLength="17.55" lengthAdjust="spacingAndGlyphs">100</text>
<text x="546.4" y="91" font-size="11" text-anchor="end" fill="#000" textLength="11.7" lengthAdjust="spacingAndGlyphs">50</text>
<text x="546.4" y="107" font-size="11" text-anchor="end" fill="#000" textLength="11.7" lengthAdjust="spacingAndGlyphs">20</text>
<text x="546.4" y="120" font-size="11" text-anchor="end" fill="#000" textLength="11.7" lengthAdjust="spacingAndGlyphs">10</text>
<text x="546.4" y="132" font-size="11" text-anchor="end" fill="#000" textLength="5.85" lengthAdjust="spacingAndGlyphs">5</text>
<text x="546.4" y="148" font-size="11" text-anchor="end" fill="#000" textLength="5.85" lengthAdjust="spacingAndGlyphs">2</text>
<text x="546.4" y="161" font-size="11" text-anchor="end" fill="#000" textLength="5.85" lengthAdjust="spacingAndGlyphs">1</text>
<text x="591.5" y="181" font-size="11" text-anchor="middle" fill="#000" textLength="27" lengthAdjust="spacingAndGlyphs">10 GB</text>
<text x="633.5" y="181" font-size="11" text-anchor="middle" fill="#000" textLength="27" lengthAdjust="spacingAndGlyphs">20 GB</text>
<text x="675.5" y="181" font-size="11" text-anchor="middle" fill="#000" textLength="27" lengthAdjust="spacingAndGlyphs">30 GB</text>
<text x="717.5" y="181" font-size="11" text-anchor="middle" fill="#000" textLength="27" lengthAdjust="spacingAndGlyphs">40 GB</text>
<g shape-rendering="crispEdges">
<rect x="44" y="187" width="710" height="133" fill="#a0a0a0"/>
<rect x="45" y="188" width="708" height="131" fill="#fff"/>
<path d="M45 268h1v51h-1zM46 269h1v50h-1zM47 270h1v49h-1zM48 257h1v62h-1zM49 270h1v49h-1zM50 267h1v52h-1zM51 246h1v73h-1zM52 264h1v55h-1zM53 267h1v52h-1zM54 270h1v49h-1zM55 226h1v93h-1zM56 235h1v84h-1zM57 263h1v56h-1zM58 267h1v52h-1zM59 257h1v62h-1zM60 266h1v53h-1zM61 267h1v52h-1zM62 270h1v49h-1zM63 231h1v88h-1zM64 269h1v50h-1zM65 266h1v53h-1zM66 268h1v51h-1zM67 270h1v49h-1zM68 258h1v61h-1zM69 262h1v57h-1zM70 269h1v50h-1zM71 225h1v94h-1zM72 267h1v52h-1zM73 263h1v56h-1zM74 269h1v50h-1zM75 267h1v52h-1zM76 248h2v71h-2zM78 268h1v51h-1zM79 233h1v86h-1zM80 239h1v80h-1zM81 269h2v50h-2zM83 268h1v51h-1zM84 260h1v59h-1zM85 267h1v52h-1zM86 268h1v51h-1zM87 266h1v53h-1zM88 268h1v51h-1zM89 266h1v53h-1zM90 262h1v57h-1zM91 268h1v51h-1zM92 259h1v60h-1zM93 270h2v49h-2zM95 267h1v52h-1zM96 266h1v53h-1zM97 268h1v51h-1zM98 269h1v50h-1zM99 266h1v53h-1zM100 253h1v66h-1zM101 265h1v54h-1zM102 269h1v50h-1zM103 220h1v99h-1zM104 269h1v50h-1zM105 252h1v67h-1zM106 269h1v50h-1zM107 266h1v53h-1zM108 267h1v52h-1zM109 269h1v50h-1zM110 272h1v47h-1zM111 267h1v52h-1zM112 268h2v51h-2zM114 262h1v57h-1zM115 242h1v77h-1zM116 248h1v71h-1zM117 270h1v49h-1zM118 272h1v47h-1zM119 265h1v54h-1zM120 272h1v47h-1zM121 269h1v50h-1zM122 268h1v51h-1zM123 271h2v48h-2zM125 272h1v47h-1zM126 262h1v57h-1zM127 268h1v51h-1zM128 270h1v49h-1zM129 271h1v48h-1zM130 272h1v47h-1zM131 269h2v50h-2zM133 246h1v73h-1zM134 271h1v48h-1zM135 272h2v47h-2zM137 228h1v91h-1zM138 270h1v49h-1zM139 238h1v81h-1zM140 229h1v90h-1zM141 268h2v51h-2zM143 269h1v50h-1zM144 272h1v47h-1zM145 258h1v61h-1zM146 271h1v48h-1zM147 236h1v83h-1zM148 269h1v50h-1zM149 270h1v49h-1zM150 262h1v57h-1zM151 263h1v56h-1zM152 272h2v47h-2zM154 268h1v51h-1zM155 267h1v52h-1zM156 269h1v50h-1zM157 270h1v49h-1zM158 269h1v50h-1zM159 267h1v52h-1zM160 270h1v49h-1zM161 224h1v95h-1zM162 272h1v47h-1zM163 269h1v50h-1zM164 272h1v47h-1zM165 268h1v51h-1zM166 269h1v50h-1zM167 262h1v57h-1zM168 268h1v51h-1zM169 272h1v47h-1zM170 268h1v51h-1zM171 272h1v47h-1zM172 260h2v59h-2zM174 248h1v71h-1zM175 239h1v80h-1zM176 268h1v51h-1zM177 255h1v64h-1zM178 260h1v59h-1zM179 270h1v49h-1zM180 268h1v51h-1zM181 269h2v50h-2zM183 268h1v51h-1zM184 269h1v50h-1zM185 232h1v87h-1zM186 262h1v57h-1zM187 271h1v48h-1zM188 269h1v50h-1zM189 268h1v51h-1zM190 271h1v48h-1zM191 272h1v47h-1zM192 260h1v59h-1zM193 268h1v51h-1zM194 271h1v48h-1zM195 272h1v47h-1zM196 265h1v54h-1zM197 269h1v50h-1zM198 270h2v49h-2zM200 271h1v48h-1zM201 262h1v57h-1zM202 267h1v52h-1zM203 272h1v47h-1zM204 271h1v48h-1zM205 260h1v59h-1zM206 267h1v52h-1zM207 268h1v51h-1zM208 261h1v58h-1zM209 268h1v51h-1zM210 272h1v47h-1zM211 266h1v53h-1zM212 271h1v48h-1zM213 248h1v71h-1zM214 271h1v48h-1zM215 268h1v51h-1zM216 269h1v50h-1zM217 268h1v51h-1zM218 272h1v47h-1zM219 270h1v49h-1zM220 262h1v57h-1zM221 272h1v47h-1zM222 270h1v49h-1zM223 272h1v47h-1zM224 270h1v49h-1zM225 232h1v87h-1zM226 220h1v99h-1zM227 268h1v51h-1zM228 270h1v49h-1zM229 272h1v47h-1zM230 269h1v50h-1zM231 268h1v51h-1zM232 222h1v97h-1zM233 269h1v50h-1zM234 271h1v48h-1zM235 218h1v101h-1zM236 217h1v102h-1zM237 258h1v61h-1zM238 263h1v56h-1zM239 270h1v49h-1zM240 268h1v51h-1zM241 260h1v59h-1zM242 267h1v52h-1zM243 269h1v50h-1zM244 265h1v54h-1zM245 259h1v60h-1zM246 269h1v50h-1zM247 267h1v52h-1zM248 269h1v50h-1zM249 268h2v51h-2zM251 267h2v52h-2zM253 255h1v64h-1zM254 264h1v55h-1zM255 265h1v54h-1zM256 260h1v59h-1zM257 265h1v54h-1zM258 269h1v50h-1zM259 228h1v91h-1zM260 231h1v88h-1zM261 253h1v66h-1zM262 245h1v74h-1zM263 250h1v69h-1zM264 268h1v51h-1zM265 264h1v55h-1zM266 257h1v62h-1zM267 266h1v53h-1zM268 265h1v54h-1zM269 266h1v53h-1zM270 261h1v58h-1zM271 268h1v51h-1zM272 226h1v93h-1zM273 230h1v89h-1zM274 265h1v54h-1zM275 267h1v52h-1zM276 268h1v51h-1zM277 265h1v54h-1zM278 257h1v62h-1zM279 267h1v52h-1zM280 255h1v64h-1zM281 269h2v50h-2zM283 258h1v61h-1zM284 268h1v51h-1zM285 226h1v93h-1zM286 266h1v53h-1zM287 265h1v54h-1zM288 260h1v59h-1zM289 258h1v61h-1zM290 220h1v99h-1zM291 236h1v83h-1zM292 268h1v51h-1zM293 261h1v58h-1zM294 264h1v55h-1zM295 228h1v91h-1zM296 240h1v79h-1zM297 262h1v57h-1zM298 264h1v55h-1zM299 265h1v54h-1zM300 267h1v52h-1zM301 224h1v95h-1zM302 219h1v100h-1zM303 232h1v87h-1zM304 265h1v54h-1zM305 259h1v60h-1zM306 267h1v52h-1zM307 263h1v56h-1zM308 255h1v64h-1zM309 266h1v53h-1zM310 261h1v58h-1zM311 263h1v56h-1zM312 248h1v71h-1zM313 266h1v53h-1zM314 228h1v91h-1zM315 235h1v84h-1zM316 267h1v52h-1zM317 260h1v59h-1zM318 256h1v63h-1zM319 267h1v52h-1zM320 236h1v83h-1zM321 260h1v59h-1zM322 223h1v96h-1zM323 232h1v87h-1zM324 262h1v57h-1zM325 256h1v63h-1zM326 268h2v51h-2zM328 252h1v67h-1zM329 257h1v62h-1zM330 266h1v53h-1zM331 248h1v71h-1zM332 266h1v53h-1zM333 255h1v64h-1zM334 266h1v53h-1zM335 264h1v55h-1zM336 223h3v96h-3zM339 219h1v100h-1zM340 228h1v91h-1zM341 269h1v50h-1zM342 267h1v52h-1zM343 261h1v58h-1zM344 264h1v55h-1zM345 267h1v52h-1zM346 244h1v75h-1zM347 249h1v70h-1zM348 236h1v83h-1zM349 240h1v79h-1zM350 259h1v60h-1zM351 261h1v58h-1zM352 220h1v99h-1zM353 226h1v93h-1zM354 268h1v51h-1zM355 256h1v63h-1zM356 257h1v62h-1zM357 229h1v90h-1zM358 222h1v97h-1zM359 237h1v82h-1zM360 238h1v81h-1zM361 245h1v74h-1zM362 239h1v80h-1zM363 229h1v90h-1zM364 218h1v101h-1zM365 201h1v118h-1zM366 200h1v119h-1zM367 208h1v111h-1zM368 216h1v103h-1zM369 217h1v102h-1zM370 220h1v99h-1zM371 222h1v97h-1zM372 225h1v94h-1zM373 218h1v101h-1zM374 222h1v97h-1zM375 223h1v96h-1zM376 212h1v107h-1zM377 206h2v113h-2zM379 212h1v107h-1zM380 214h2v105h-2zM382 219h1v100h-1zM383 220h1v99h-1zM384 209h2v110h-2zM386 211h1v108h-1zM387 224h1v95h-1zM388 225h1v94h-1zM389 227h1v92h-1zM390 221h1v98h-1zM391 263h1v56h-1zM392 234h2v85h-2zM394 240h1v79h-1zM395 244h1v75h-1zM396 263h1v56h-1zM397 213h1v106h-1zM398 249h1v70h-1zM399 240h1v79h-1zM400 243h2v76h-2zM402 250h1v69h-1zM403 205h1v114h-1zM404 252h1v67h-1zM405 248h1v71h-1zM406 251h1v68h-1zM407 262h1v57h-1zM408 264h1v55h-1zM409 236h1v83h-1zM410 245h1v74h-1zM411 210h1v109h-1zM412 208h1v111h-1zM413 212h1v107h-1zM414 222h1v97h-1zM415 211h1v108h-1zM416 250h1v69h-1zM417 246h1v73h-1zM418 209h1v110h-1zM419 226h1v93h-1zM420 250h1v69h-1zM421 246h2v73h-2zM423 249h1v70h-1zM424 249h1v61h-1zM425 245h1v65h-1zM426 251h1v59h-1zM427 220h1v99h-1zM428 216h1v103h-1zM429 211h1v108h-1zM430 222h1v97h-1zM431 230h1v89h-1zM432 248h1v71h-1zM433 248h1v62h-1zM434 222h1v97h-1zM435 202h1v117h-1zM436 225h1v94h-1zM437 249h1v61h-1zM438 250h1v69h-1zM439 248h1v71h-1zM440 248h3v49h-3zM443 250h1v69h-1zM444 249h1v61h-1zM445 250h1v69h-1zM446 252h1v67h-1zM447 215h1v104h-1zM448 209h1v110h-1zM449 228h1v69h-1zM450 248h1v71h-1zM451 250h1v69h-1zM452 249h1v70h-1zM453 248h1v71h-1zM454 224h1v73h-1zM455 216h1v103h-1zM456 214h1v105h-1zM457 232h1v65h-1zM458 251h1v46h-1zM459 248h2v71h-2zM461 249h1v70h-1zM462 248h1v71h-1zM463 251h1v59h-1zM464 222h1v88h-1zM465 218h1v101h-1zM466 228h1v69h-1zM467 248h1v71h-1zM468 250h2v69h-2zM470 235h1v84h-1zM471 230h1v80h-1zM472 232h1v78h-1zM473 249h1v61h-1zM474 252h1v58h-1zM475 250h1v60h-1zM476 249h1v70h-1zM477 216h1v103h-1zM478 220h1v99h-1zM479 242h1v55h-1zM480 252h1v67h-1zM481 251h1v68h-1zM482 250h1v60h-1zM483 200h1v119h-1zM484 228h1v91h-1zM485 236h1v83h-1zM486 247h1v72h-1zM487 251h1v59h-1zM488 249h1v61h-1zM489 233h1v86h-1zM490 217h1v102h-1zM491 226h1v93h-1zM492 248h1v71h-1zM493 251h1v59h-1zM494 248h2v62h-2zM496 252h1v58h-1zM497 218h1v101h-1zM498 237h1v82h-1zM499 219h1v91h-1zM500 248h1v62h-1zM501 251h1v59h-1zM502 239h1v71h-1zM503 251h1v68h-1zM504 248h1v71h-1zM505 251h2v59h-2zM507 249h1v61h-1zM508 219h1v91h-1zM509 218h1v101h-1zM510 250h1v69h-1zM511 239h1v80h-1zM512 250h1v60h-1zM513 218h1v101h-1zM514 212h1v107h-1zM515 251h1v59h-1zM516 252h1v58h-1zM517 248h1v62h-1zM518 250h1v60h-1zM519 252h1v58h-1zM520 234h1v85h-1zM521 200h1v119h-1zM522 222h1v97h-1zM523 206h1v113h-1zM524 204h1v115h-1zM525 205h1v114h-1zM526 230h1v89h-1zM527 251h1v68h-1zM528 252h1v58h-1zM529 249h1v61h-1zM530 248h1v62h-1zM531 251h1v59h-1zM532 249h1v61h-1zM533 228h1v91h-1zM534 219h1v91h-1zM535 249h1v61h-1zM536 219h1v100h-1zM537 232h1v78h-1zM538 249h1v61h-1zM539 251h1v59h-1zM540 218h1v101h-1zM541 252h1v67h-1zM542 249h1v48h-1zM543 251h1v46h-1zM544 237h1v82h-1zM545 250h1v47h-1zM546 246h1v51h-1zM547 248h1v49h-1zM548 245h1v74h-1zM549 250h1v47h-1zM550 248h1v49h-1zM551 250h1v69h-1zM552 249h1v70h-1zM553 252h1v58h-1zM554 201h1v118h-1zM555 240h1v70h-1zM556 251h1v59h-1zM557 252h1v58h-1zM558 251h1v59h-1zM559 249h1v61h-1zM560 250h1v60h-1zM561 213h1v106h-1zM562 248h1v71h-1zM563 246h1v64h-1zM564 223h2v96h-2zM566 252h1v67h-1zM567 248h1v49h-1zM568 245h1v74h-1zM569 252h1v58h-1zM570 249h1v61h-1zM571 251h1v59h-1zM572 224h1v86h-1zM573 249h1v61h-1zM574 235h1v84h-1zM575 215h1v104h-1zM576 240h1v79h-1zM577 248h1v71h-1zM578 252h1v45h-1zM579 249h1v48h-1zM580 250h1v69h-1zM581 236h1v83h-1zM582 248h1v49h-1zM583 250h1v69h-1zM584 251h1v59h-1zM585 250h1v60h-1zM586 249h1v61h-1zM587 244h1v66h-1zM588 228h1v91h-1zM589 222h1v97h-1zM590 226h1v93h-1zM591 219h1v100h-1zM592 236h1v83h-1zM593 252h1v45h-1zM594 252h1v67h-1zM595 252h1v45h-1zM596 237h1v82h-1zM597 251h1v68h-1zM598 250h1v60h-1zM599 249h3v61h-3zM602 238h1v72h-1zM603 244h1v66h-1zM604 239h2v80h-2zM606 249h1v61h-1zM607 246h1v64h-1zM608 251h1v59h-1zM609 222h1v97h-1zM610 221h1v98h-1zM611 232h1v78h-1zM612 248h1v62h-1zM613 236h1v83h-1zM614 248h1v62h-1zM615 219h1v91h-1zM616 250h1v69h-1zM617 219h1v100h-1zM618 250h1v60h-1zM619 249h1v61h-1zM620 248h1v62h-1zM621 251h1v59h-1zM622 218h1v101h-1zM623 197h1v122h-1zM624 215h1v95h-1zM625 218h1v101h-1zM626 245h1v74h-1zM627 249h1v70h-1zM628 249h1v48h-1zM629 200h1v119h-1zM630 249h1v48h-1zM631 245h1v52h-1zM632 229h1v90h-1zM633 250h1v69h-1zM634 224h1v86h-1zM635 252h1v58h-1zM636 249h1v61h-1zM637 234h1v76h-1zM638 249h1v61h-1zM639 252h1v58h-1zM640 245h1v65h-1zM641 251h1v68h-1zM642 250h2v60h-2zM644 250h1v69h-1zM645 247h1v63h-1zM646 250h1v60h-1zM647 251h1v59h-1zM648 218h1v101h-1zM649 228h1v91h-1zM650 251h1v68h-1zM651 250h1v69h-1zM652 248h1v62h-1zM653 220h1v99h-1zM654 250h1v60h-1zM655 218h1v92h-1zM656 249h1v70h-1zM657 254h1v65h-1zM658 237h1v82h-1zM659 240h1v79h-1zM660 251h1v68h-1zM661 248h1v62h-1zM662 238h1v72h-1zM663 253h1v57h-1zM664 252h1v58h-1zM665 253h1v66h-1zM666 252h1v67h-1zM667 248h1v71h-1zM668 251h1v68h-1zM669 236h1v83h-1zM670 229h1v90h-1zM671 255h1v64h-1zM672 251h1v68h-1zM673 232h1v87h-1zM674 219h1v100h-1zM675 255h1v64h-1zM676 252h1v67h-1zM677 253h1v66h-1zM678 210h1v109h-1zM679 230h1v89h-1zM680 253h1v66h-1zM681 219h1v100h-1zM682 253h2v66h-2zM684 252h2v67h-2zM686 230h1v89h-1zM687 253h1v66h-1zM688 257h2v62h-2zM690 216h1v103h-1zM691 251h1v68h-1zM692 218h1v101h-1zM693 258h1v61h-1zM694 219h1v100h-1zM695 256h1v63h-1zM696 211h1v108h-1zM697 255h1v64h-1zM698 234h1v85h-1zM699 258h1v61h-1zM700 255h2v64h-2zM702 248h1v71h-1zM703 258h1v61h-1zM704 239h1v80h-1zM705 259h1v60h-1z" fill="#00c000"/><path d="M45 284h1v35h-1zM46 289h1v30h-1zM47 284h4v35h-4zM51 258h1v61h-1zM52 289h2v30h-2zM54 284h1v35h-1zM55 250h1v69h-1zM56 252h1v67h-1zM57 284h1v35h-1zM58 289h5v30h-5zM63 251h1v68h-1zM64 289h7v30h-7zM71 255h1v64h-1zM72 289h7v30h-7zM79 256h2v63h-2zM81 289h12v30h-12zM93 296h3v23h-3zM96 289h3v30h-3zM99 296h1v23h-1zM100 262h1v57h-1zM101 296h1v23h-1zM102 289h1v30h-1zM103 260h1v59h-1zM104 289h1v30h-1zM105 262h1v57h-1zM106 296h2v23h-2zM108 289h3v30h-3zM111 296h3v23h-3zM114 289h1v30h-1zM115 262h1v57h-1zM116 289h1v30h-1zM117 296h8v23h-8zM125 289h1v30h-1zM126 296h4v23h-4zM130 283h1v36h-1zM131 296h2v23h-2zM133 262h1v57h-1zM134 296h5v23h-5zM139 252h2v67h-2zM141 296h2v23h-2zM143 278h1v41h-1zM144 296h1v23h-1zM145 289h1v30h-1zM146 296h1v23h-1zM147 262h1v57h-1zM148 296h3v23h-3zM151 289h1v30h-1zM152 296h9v23h-9zM161 242h1v77h-1zM162 296h13v23h-13zM175 262h1v57h-1zM176 296h5v23h-5zM181 289h2v30h-2zM183 296h2v23h-2zM185 257h1v62h-1zM186 289h1v30h-1zM187 296h1v23h-1zM188 289h1v30h-1zM189 296h24v23h-24zM213 262h1v57h-1zM214 296h9v23h-9zM223 289h1v30h-1zM224 296h1v23h-1zM225 259h2v60h-2zM227 296h5v23h-5zM232 243h1v76h-1zM233 296h1v23h-1zM234 284h1v35h-1zM235 234h2v85h-2zM237 289h5v30h-5zM242 284h1v35h-1zM243 289h10v30h-10zM253 284h1v35h-1zM254 269h1v50h-1zM255 284h1v35h-1zM256 289h3v30h-3zM259 248h2v71h-2zM261 259h1v60h-1zM262 258h1v61h-1zM263 284h1v35h-1zM264 280h1v39h-1zM265 284h1v35h-1zM266 271h1v48h-1zM267 289h4v30h-4zM271 284h1v35h-1zM272 246h2v73h-2zM274 274h1v45h-1zM275 284h1v35h-1zM276 289h4v30h-4zM280 284h1v35h-1zM281 289h4v30h-4zM285 240h1v79h-1zM286 289h1v30h-1zM287 284h1v35h-1zM288 289h1v30h-1zM289 284h1v35h-1zM290 250h1v69h-1zM291 289h1v30h-1zM292 284h1v35h-1zM293 289h1v30h-1zM294 284h1v35h-1zM295 249h1v70h-1zM296 255h1v64h-1zM297 289h3v30h-3zM300 284h1v35h-1zM301 250h1v69h-1zM302 237h1v82h-1zM303 245h1v74h-1zM304 284h2v35h-2zM306 289h2v30h-2zM308 284h1v35h-1zM309 289h3v30h-3zM312 258h1v61h-1zM313 289h1v30h-1zM314 249h1v70h-1zM315 252h1v67h-1zM316 289h4v30h-4zM320 255h1v64h-1zM321 289h1v30h-1zM322 238h1v81h-1zM323 245h1v74h-1zM324 289h4v30h-4zM328 284h1v35h-1zM329 289h2v30h-2zM331 258h1v61h-1zM332 284h1v35h-1zM333 289h1v30h-1zM334 284h2v35h-2zM336 250h1v69h-1zM337 244h2v75h-2zM339 233h1v86h-1zM340 244h1v75h-1zM341 289h2v30h-2zM343 284h2v35h-2zM345 289h1v30h-1zM346 255h1v64h-1zM347 284h1v35h-1zM348 250h1v69h-1zM349 252h1v67h-1zM350 289h1v30h-1zM351 284h1v35h-1zM352 248h1v71h-1zM353 250h1v69h-1zM354 289h1v30h-1zM355 284h1v35h-1zM356 289h1v30h-1zM357 257h1v62h-1zM358 253h1v66h-1zM359 244h1v75h-1zM360 246h1v73h-1zM361 245h1v74h-1zM362 241h1v78h-1zM363 250h1v69h-1zM364 239h1v80h-1zM365 235h1v84h-1zM366 234h1v85h-1zM367 243h1v76h-1zM368 233h1v86h-1zM369 229h1v90h-1zM370 239h1v80h-1zM371 236h1v83h-1zM372 242h1v77h-1zM373 237h1v82h-1zM374 243h1v76h-1zM375 242h1v77h-1zM376 232h1v87h-1zM377 225h1v94h-1zM378 224h1v95h-1zM379 218h1v101h-1zM380 221h1v98h-1zM381 226h1v93h-1zM382 219h1v100h-1zM383 225h1v94h-1zM384 234h1v85h-1zM385 231h1v88h-1zM386 240h1v79h-1zM387 239h1v80h-1zM388 247h1v37h-1zM389 248h1v36h-1zM390 233h1v86h-1zM391 253h1v31h-1zM392 256h1v30h-1zM393 257h1v28h-1zM394 258h1v27h-1zM395 258h1v26h-1zM396 260h1v26h-1zM397 229h1v90h-1zM398 262h1v21h-1zM399 240h1v79h-1zM400 262h1v22h-1zM401 261h1v24h-1zM402 262h1v21h-1zM403 250h1v34h-1zM404 262h1v22h-1zM405 261h1v23h-1zM406 262h1v22h-1zM407 261h1v23h-1zM408 262h1v22h-1zM409 236h1v83h-1zM410 262h1v22h-1zM411 228h1v91h-1zM412 227h1v92h-1zM413 232h1v87h-1zM414 239h1v47h-1zM415 238h1v81h-1zM416 261h1v23h-1zM417 260h1v24h-1zM418 239h1v45h-1zM419 245h1v39h-1zM420 262h1v18h-1zM421 260h1v17h-1zM422 261h1v15h-1zM423 262h1v14h-1zM424 261h2v15h-2zM426 262h1v16h-1zM427 232h1v87h-1zM428 228h1v91h-1zM429 227h1v92h-1zM430 237h1v82h-1zM431 240h1v36h-1zM432 262h1v16h-1zM433 261h1v14h-1zM434 232h1v87h-1zM435 227h1v92h-1zM436 233h1v86h-1zM437 262h1v14h-1zM438 260h1v16h-1zM439 261h5v15h-5zM444 261h1v14h-1zM445 261h1v15h-1zM446 261h1v14h-1zM447 232h2v87h-2zM449 240h1v36h-1zM450 261h1v16h-1zM451 262h1v14h-1zM452 262h1v13h-1zM453 260h1v16h-1zM454 240h1v37h-1zM455 233h2v86h-2zM457 244h1v32h-1zM458 261h3v15h-3zM461 260h1v15h-1zM462 260h1v18h-1zM463 262h1v16h-1zM464 238h1v38h-1zM465 233h1v86h-1zM466 240h1v36h-1zM467 261h1v15h-1zM468 262h1v16h-1zM469 261h1v17h-1zM470 261h1v15h-1zM471 241h1v35h-1zM472 244h1v31h-1zM473 261h1v15h-1zM474 261h1v14h-1zM475 262h1v14h-1zM476 262h1v16h-1zM477 230h1v89h-1zM478 232h1v87h-1zM479 262h1v14h-1zM480 261h1v17h-1zM481 261h1v16h-1zM482 261h1v15h-1zM483 230h1v89h-1zM484 236h1v83h-1zM485 244h1v75h-1zM486 260h1v59h-1zM487 260h1v18h-1zM488 262h1v14h-1zM489 240h1v79h-1zM490 232h1v87h-1zM491 237h1v82h-1zM492 260h1v15h-1zM493 261h1v14h-1zM494 261h1v15h-1zM495 261h1v17h-1zM496 261h1v15h-1zM497 240h1v79h-1zM498 261h1v14h-1zM499 241h1v35h-1zM500 261h1v15h-1zM501 261h1v14h-1zM502 250h1v25h-1zM503 261h1v16h-1zM504 261h2v17h-2zM506 261h1v14h-1zM507 260h1v17h-1zM508 248h1v29h-1zM509 245h1v74h-1zM510 260h1v17h-1zM511 252h1v23h-1zM512 262h1v14h-1zM513 230h1v89h-1zM514 224h1v95h-1zM515 261h1v14h-1zM516 261h1v15h-1zM517 260h1v17h-1zM518 260h1v18h-1zM519 261h1v15h-1zM520 262h1v16h-1zM521 232h1v87h-1zM522 236h1v83h-1zM523 222h2v97h-2zM525 228h1v91h-1zM526 238h1v81h-1zM527 261h1v16h-1zM528 261h1v17h-1zM529 261h2v15h-2zM531 261h1v14h-1zM532 261h1v17h-1zM533 246h1v30h-1zM534 240h1v36h-1zM535 261h1v17h-1zM536 236h1v83h-1zM537 244h1v32h-1zM538 261h1v14h-1zM539 261h1v15h-1zM540 250h1v25h-1zM541 261h2v15h-2zM543 260h1v16h-1zM544 261h1v16h-1zM545 261h1v15h-1zM546 261h1v17h-1zM547 262h1v14h-1zM548 256h1v20h-1zM549 262h1v16h-1zM550 262h1v14h-1zM551 262h1v16h-1zM552 261h1v17h-1zM553 261h1v16h-1zM554 240h1v79h-1zM555 250h1v25h-1zM556 261h1v15h-1zM557 262h1v14h-1zM558 261h2v15h-2zM560 261h1v14h-1zM561 250h1v69h-1zM562 261h1v17h-1zM563 261h1v15h-1zM564 244h2v75h-2zM566 261h1v15h-1zM567 260h1v16h-1zM568 262h1v13h-1zM569 261h3v15h-3zM572 244h1v31h-1zM573 261h1v17h-1zM574 238h1v81h-1zM575 233h1v86h-1zM576 250h1v26h-1zM577 260h1v16h-1zM578 261h1v17h-1zM579 261h1v15h-1zM580 260h1v18h-1zM581 261h1v16h-1zM582 262h1v13h-1zM583 261h1v15h-1zM584 260h1v16h-1zM585 262h1v16h-1zM586 260h1v16h-1zM587 261h1v14h-1zM588 241h1v78h-1zM589 240h1v79h-1zM590 244h2v75h-2zM592 246h1v73h-1zM593 261h2v14h-2zM595 261h1v16h-1zM596 250h1v69h-1zM597 261h1v14h-1zM598 261h1v16h-1zM599 261h1v14h-1zM600 262h1v14h-1zM601 261h1v15h-1zM602 252h1v25h-1zM603 261h1v17h-1zM604 252h1v24h-1zM605 261h1v17h-1zM606 261h1v16h-1zM607 261h1v13h-1zM608 262h1v12h-1zM609 243h1v76h-1zM610 243h1v31h-1zM611 246h1v28h-1zM612 261h1v15h-1zM613 250h1v69h-1zM614 262h1v12h-1zM615 250h1v24h-1zM616 261h1v12h-1zM617 250h1v69h-1zM618 262h1v11h-1zM619 260h1v15h-1zM620 261h1v15h-1zM621 262h1v13h-1zM622 240h1v79h-1zM623 230h1v89h-1zM624 245h1v31h-1zM625 250h1v69h-1zM626 261h1v13h-1zM627 262h1v11h-1zM628 261h1v14h-1zM629 240h1v34h-1zM630 262h1v12h-1zM631 261h1v12h-1zM632 246h1v73h-1zM633 262h1v12h-1zM634 242h1v34h-1zM635 260h1v14h-1zM636 262h1v12h-1zM637 250h1v25h-1zM638 262h1v13h-1zM639 261h1v12h-1zM640 262h1v12h-1zM641 261h1v13h-1zM642 261h1v14h-1zM643 261h1v13h-1zM644 261h1v15h-1zM645 262h3v15h-3zM648 247h1v72h-1zM649 250h1v29h-1zM650 262h1v15h-1zM651 262h1v57h-1zM652 263h1v14h-1zM653 250h1v69h-1zM654 262h1v15h-1zM655 248h1v28h-1zM656 262h1v15h-1zM657 265h1v13h-1zM658 252h1v67h-1zM659 254h1v25h-1zM660 266h2v14h-2zM662 267h2v13h-2zM664 266h1v15h-1zM665 267h3v15h-3zM668 267h1v13h-1zM669 252h1v29h-1zM670 248h1v31h-1zM671 267h1v13h-1zM672 267h1v12h-1zM673 250h1v69h-1zM674 245h1v35h-1zM675 267h3v13h-3zM678 231h1v88h-1zM679 248h1v32h-1zM680 267h1v13h-1zM681 250h1v69h-1zM682 267h1v13h-1zM683 268h1v11h-1zM684 269h1v12h-1zM685 270h1v14h-1zM686 252h1v67h-1zM687 270h1v16h-1zM688 271h1v14h-1zM689 270h1v16h-1zM690 252h1v67h-1zM691 271h1v15h-1zM692 255h1v64h-1zM693 272h1v13h-1zM694 255h1v64h-1zM695 272h1v16h-1zM696 250h1v69h-1zM697 272h1v16h-1zM698 258h1v61h-1zM699 271h1v16h-1zM700 272h1v17h-1zM701 271h1v15h-1zM702 262h1v25h-1zM703 272h1v16h-1zM704 260h1v59h-1zM705 274h1v14h-1z" fill="#006000"/><path d="M46 310h1v9h-1zM61 310h1v9h-1zM66 310h1v9h-1zM72 310h1v9h-1zM94 310h1v9h-1zM112 310h1v9h-1zM237 310h13v9h-13zM251 310h2v9h-2zM254 310h3v9h-3zM264 310h1v9h-1zM267 310h2v9h-2zM270 310h2v9h-2zM276 310h2v9h-2zM281 310h2v9h-2zM287 310h1v9h-1zM292 310h1v9h-1zM298 310h1v9h-1zM305 310h2v9h-2zM343 310h1v9h-1z" fill="#00c000"/>
<path d="M45 198h1v1h-1zM48 198h1v1h-1zM51 198h1v1h-1zM54 198h1v1h-1zM57 198h1v1h-1zM60 198h1v1h-1zM63 198h1v1h-1zM66 198h1v1h-1zM69 198h1v1h-1zM72 198h1v1h-1zM75 198h1v1h-1zM78 198h1v1h-1zM81 198h1v1h-1zM84 198h1v1h-1zM87 198h1v1h-1zM90 198h1v1h-1zM93 198h1v1h-1zM96 198h1v1h-1zM99 198h1v1h-1zM102 198h1v1h-1zM105 198h1v1h-1zM108 198h1v1h-1zM111 198h1v1h-1zM114 198h1v1h-1zM117 198h1v1h-1zM120 198h1v1h-1zM123 198h1v1h-1zM126 198h1v1h-1zM129 198h1v1h-1zM132 198h1v1h-1zM135 198h1v1h-1zM138 198h1v1h-1zM141 198h1v1h-1zM144 198h1v1h-1zM147 198h1v1h-1zM150 198h1v1h-1zM153 198h1v1h-1zM156 198h1v1h-1zM159 198h1v1h-1zM162 198h1v1h-1zM165 198h1v1h-1zM168 198h1v1h-1zM171 198h1v1h-1zM174 198h1v1h-1zM177 198h1v1h-1zM180 198h1v1h-1zM183 198h1v1h-1zM186 198h1v1h-1zM189 198h1v1h-1zM192 198h1v1h-1zM195 198h1v1h-1zM198 198h1v1h-1zM201 198h1v1h-1zM204 198h1v1h-1zM207 198h1v1h-1zM210 198h1v1h-1zM213 198h1v1h-1zM216 198h1v1h-1zM219 198h1v1h-1zM222 198h1v1h-1zM225 198h1v1h-1zM228 198h1v1h-1zM231 198h1v1h-1zM234 198h1v1h-1zM237 198h1v1h-1zM240 198h1v1h-1zM243 198h1v1h-1zM246 198h1v1h-1zM249 198h1v1h-1zM252 198h1v1h-1zM255 198h1v1h-1zM258 198h1v1h-1zM261 198h1v1h-1zM264 198h1v1h-1zM267 198h1v1h-1zM270 198h1v1h-1zM273 198h1v1h-1zM276 198h1v1h-1zM279 198h1v1h-1zM282 198h1v1h-1zM285 198h1v1h-1zM288 198h1v1h-1zM291 198h1v1h-1zM294 198h1v1h-1zM297 198h1v1h-1zM300 198h1v1h-1zM303 198h1v1h-1zM306 198h1v1h-1zM309 198h1v1h-1zM312 198h1v1h-1zM315 198h1v1h-1zM318 198h1v1h-1zM321 198h1v1h-1zM324 198h1v1h-1zM327 198h1v1h-1zM330 198h1v1h-1zM333 198h1v1h-1zM336 198h1v1h-1zM339 198h1v1h-1zM342 198h1v1h-1zM345 198h1v1h-1zM348 198h1v1h-1zM351 198h1v1h-1zM354 198h1v1h-1zM357 198h1v1h-1zM360 198h1v1h-1zM363 198h1v1h-1zM366 198h1v1h-1zM369 198h1v1h-1zM372 198h1v1h-1zM375 198h1v1h-1zM378 198h1v1h-1zM381 198h1v1h-1zM384 198h1v1h-1zM387 198h1v1h-1zM390 198h1v1h-1zM393 198h1v1h-1zM396 198h1v1h-1zM399 198h1v1h-1zM402 198h1v1h-1zM405 198h1v1h-1zM408 198h1v1h-1zM411 198h1v1h-1zM414 198h1v1h-1zM417 198h1v1h-1zM420 198h1v1h-1zM423 198h1v1h-1zM426 198h1v1h-1zM429 198h1v1h-1zM432 198h1v1h-1zM435 198h1v1h-1zM438 198h1v1h-1zM441 198h1v1h-1zM444 198h1v1h-1zM447 198h1v1h-1zM450 198h1v1h-1zM453 198h1v1h-1zM456 198h1v1h-1zM459 198h1v1h-1zM462 198h1v1h-1zM465 198h1v1h-1zM468 198h1v1h-1zM471 198h1v1h-1zM474 198h1v1h-1zM477 198h1v1h-1zM480 198h1v1h-1zM483 198h1v1h-1zM486 198h1v1h-1zM489 198h1v1h-1zM492 198h1v1h-1zM495 198h1v1h-1zM498 198h1v1h-1zM501 198h1v1h-1zM504 198h1v1h-1zM507 198h1v1h-1zM510 198h1v1h-1zM513 198h1v1h-1zM516 198h1v1h-1zM519 198h1v1h-1zM522 198h1v1h-1zM525 198h1v1h-1zM528 198h1v1h-1zM531 198h1v1h-1zM534 198h1v1h-1zM537 198h1v1h-1zM540 198h1v1h-1zM543 198h1v1h-1zM546 198h1v1h-1zM549 198h1v1h-1zM552 198h1v1h-1zM555 198h1v1h-1zM558 198h1v1h-1zM561 198h1v1h-1zM564 198h1v1h-1zM567 198h1v1h-1zM570 198h1v1h-1zM573 198h1v1h-1zM576 198h1v1h-1zM579 198h1v1h-1zM582 198h1v1h-1zM585 198h1v1h-1zM588 198h1v1h-1zM591 198h1v1h-1zM594 198h1v1h-1zM597 198h1v1h-1zM600 198h1v1h-1zM603 198h1v1h-1zM606 198h1v1h-1zM609 198h1v1h-1zM612 198h1v1h-1zM615 198h1v1h-1zM618 198h1v1h-1zM621 198h1v1h-1zM624 198h1v1h-1zM627 198h1v1h-1zM630 198h1v1h-1zM633 198h1v1h-1zM636 198h1v1h-1zM639 198h1v1h-1zM642 198h1v1h-1zM645 198h1v1h-1zM648 198h1v1h-1zM651 198h1v1h-1zM654 198h1v1h-1zM657 198h1v1h-1zM660 198h1v1h-1zM663 198h1v1h-1zM666 198h1v1h-1zM669 198h1v1h-1zM672 198h1v1h-1zM675 198h1v1h-1zM678 198h1v1h-1zM681 198h1v1h-1zM684 198h1v1h-1zM687 198h1v1h-1zM690 198h1v1h-1zM693 198h1v1h-1zM696 198h1v1h-1zM699 198h1v1h-1zM702 198h1v1h-1zM705 198h1v1h-1zM708 198h1v1h-1zM711 198h1v1h-1zM714 198h1v1h-1zM717 198h1v1h-1zM720 198h1v1h-1zM723 198h1v1h-1zM726 198h1v1h-1zM729 198h1v1h-1zM732 198h1v1h-1zM735 198h1v1h-1zM738 198h1v1h-1zM741 198h1v1h-1zM744 198h1v1h-1zM747 198h1v1h-1zM750 198h1v1h-1zM45 202h1v1h-1zM48 202h1v1h-1zM51 202h1v1h-1zM54 202h1v1h-1zM57 202h1v1h-1zM60 202h1v1h-1zM63 202h1v1h-1zM66 202h1v1h-1zM69 202h1v1h-1zM72 202h1v1h-1zM75 202h1v1h-1zM78 202h1v1h-1zM81 202h1v1h-1zM84 202h1v1h-1zM87 202h1v1h-1zM90 202h1v1h-1zM93 202h1v1h-1zM96 202h1v1h-1zM99 202h1v1h-1zM102 202h1v1h-1zM105 202h1v1h-1zM108 202h1v1h-1zM111 202h1v1h-1zM114 202h1v1h-1zM117 202h1v1h-1zM120 202h1v1h-1zM123 202h1v1h-1zM126 202h1v1h-1zM129 202h1v1h-1zM132 202h1v1h-1zM135 202h1v1h-1zM138 202h1v1h-1zM141 202h1v1h-1zM144 202h1v1h-1zM147 202h1v1h-1zM150 202h1v1h-1zM153 202h1v1h-1zM156 202h1v1h-1zM159 202h1v1h-1zM162 202h1v1h-1zM165 202h1v1h-1zM168 202h1v1h-1zM171 202h1v1h-1zM174 202h1v1h-1zM177 202h1v1h-1zM180 202h1v1h-1zM183 202h1v1h-1zM186 202h1v1h-1zM189 202h1v1h-1zM192 202h1v1h-1zM195 202h1v1h-1zM198 202h1v1h-1zM201 202h1v1h-1zM204 202h1v1h-1zM207 202h1v1h-1zM210 202h1v1h-1zM213 202h1v1h-1zM216 202h1v1h-1zM219 202h1v1h-1zM222 202h1v1h-1zM225 202h1v1h-1zM228 202h1v1h-1zM231 202h1v1h-1zM234 202h1v1h-1zM237 202h1v1h-1zM240 202h1v1h-1zM243 202h1v1h-1zM246 202h1v1h-1zM249 202h1v1h-1zM252 202h1v1h-1zM255 202h1v1h-1zM258 202h1v1h-1zM261 202h1v1h-1zM264 202h1v1h-1zM267 202h1v1h-1zM270 202h1v1h-1zM273 202h1v1h-1zM276 202h1v1h-1zM279 202h1v1h-1zM282 202h1v1h-1zM285 202h1v1h-1zM288 202h1v1h-1zM291 202h1v1h-1zM294 202h1v1h-1zM297 202h1v1h-1zM300 202h1v1h-1zM303 202h1v1h-1zM306 202h1v1h-1zM309 202h1v1h-1zM312 202h1v1h-1zM315 202h1v1h-1zM318 202h1v1h-1zM321 202h1v1h-1zM324 202h1v1h-1zM327 202h1v1h-1zM330 202h1v1h-1zM333 202h1v1h-1zM336 202h1v1h-1zM339 202h1v1h-1zM342 202h1v1h-1zM345 202h1v1h-1zM348 202h1v1h-1zM351 202h1v1h-1zM354 202h1v1h-1zM357 202h1v1h-1zM360 202h1v1h-1zM363 202h1v1h-1zM366 202h1v1h-1zM369 202h1v1h-1zM372 202h1v1h-1zM375 202h1v1h-1zM378 202h1v1h-1zM381 202h1v1h-1zM384 202h1v1h-1zM387 202h1v1h-1zM390 202h1v1h-1zM393 202h1v1h-1zM396 202h1v1h-1zM399 202h1v1h-1zM402 202h1v1h-1zM405 202h1v1h-1zM408 202h1v1h-1zM411 202h1v1h-1zM414 202h1v1h-1zM417 202h1v1h-1zM420 202h1v1h-1zM423 202h1v1h-1zM426 202h1v1h-1zM429 202h1v1h-1zM432 202h1v1h-1zM435 202h1v1h-1zM438 202h1v1h-1zM441 202h1v1h-1zM444 202h1v1h-1zM447 202h1v1h-1zM450 202h1v1h-1zM453 202h1v1h-1zM456 202h1v1h-1zM459 202h1v1h-1zM462 202h1v1h-1zM465 202h1v1h-1zM468 202h1v1h-1zM471 202h1v1h-1zM474 202h1v1h-1zM477 202h1v1h-1zM480 202h1v1h-1zM483 202h1v1h-1zM486 202h1v1h-1zM489 202h1v1h-1zM492 202h1v1h-1zM495 202h1v1h-1zM498 202h1v1h-1zM501 202h1v1h-1zM504 202h1v1h-1zM507 202h1v1h-1zM510 202h1v1h-1zM513 202h1v1h-1zM516 202h1v1h-1zM519 202h1v1h-1zM522 202h1v1h-1zM525 202h1v1h-1zM528 202h1v1h-1zM531 202h1v1h-1zM534 202h1v1h-1zM537 202h1v1h-1zM540 202h1v1h-1zM543 202h1v1h-1zM546 202h1v1h-1zM549 202h1v1h-1zM552 202h1v1h-1zM555 202h1v1h-1zM558 202h1v1h-1zM561 202h1v1h-1zM564 202h1v1h-1zM567 202h1v1h-1zM570 202h1v1h-1zM573 202h1v1h-1zM576 202h1v1h-1zM579 202h1v1h-1zM582 202h1v1h-1zM585 202h1v1h-1zM588 202h1v1h-1zM591 202h1v1h-1zM594 202h1v1h-1zM597 202h1v1h-1zM600 202h1v1h-1zM603 202h1v1h-1zM606 202h1v1h-1zM609 202h1v1h-1zM612 202h1v1h-1zM615 202h1v1h-1zM618 202h1v1h-1zM621 202h1v1h-1zM624 202h1v1h-1zM627 202h1v1h-1zM630 202h1v1h-1zM633 202h1v1h-1zM636 202h1v1h-1zM639 202h1v1h-1zM642 202h1v1h-1zM645 202h1v1h-1zM648 202h1v1h-1zM651 202h1v1h-1zM654 202h1v1h-1zM657 202h1v1h-1zM660 202h1v1h-1zM663 202h1v1h-1zM666 202h1v1h-1zM669 202h1v1h-1zM672 202h1v1h-1zM675 202h1v1h-1zM678 202h1v1h-1zM681 202h1v1h-1zM684 202h1v1h-1zM687 202h1v1h-1zM690 202h1v1h-1zM693 202h1v1h-1zM696 202h1v1h-1zM699 202h1v1h-1zM702 202h1v1h-1zM705 202h1v1h-1zM708 202h1v1h-1zM711 202h1v1h-1zM714 202h1v1h-1zM717 202h1v1h-1zM720 202h1v1h-1zM723 202h1v1h-1zM726 202h1v1h-1zM729 202h1v1h-1zM732 202h1v1h-1zM735 202h1v1h-1zM738 202h1v1h-1zM741 202h1v1h-1zM744 202h1v1h-1zM747 202h1v1h-1zM750 202h1v1h-1zM45 207h1v1h-1zM48 207h1v1h-1zM51 207h1v1h-1zM54 207h1v1h-1zM57 207h1v1h-1zM60 207h1v1h-1zM63 207h1v1h-1zM66 207h1v1h-1zM69 207h1v1h-1zM72 207h1v1h-1zM75 207h1v1h-1zM78 207h1v1h-1zM81 207h1v1h-1zM84 207h1v1h-1zM87 207h1v1h-1zM90 207h1v1h-1zM93 207h1v1h-1zM96 207h1v1h-1zM99 207h1v1h-1zM102 207h1v1h-1zM105 207h1v1h-1zM108 207h1v1h-1zM111 207h1v1h-1zM114 207h1v1h-1zM117 207h1v1h-1zM120 207h1v1h-1zM123 207h1v1h-1zM126 207h1v1h-1zM129 207h1v1h-1zM132 207h1v1h-1zM135 207h1v1h-1zM138 207h1v1h-1zM141 207h1v1h-1zM144 207h1v1h-1zM147 207h1v1h-1zM150 207h1v1h-1zM153 207h1v1h-1zM156 207h1v1h-1zM159 207h1v1h-1zM162 207h1v1h-1zM165 207h1v1h-1zM168 207h1v1h-1zM171 207h1v1h-1zM174 207h1v1h-1zM177 207h1v1h-1zM180 207h1v1h-1zM183 207h1v1h-1zM186 207h1v1h-1zM189 207h1v1h-1zM192 207h1v1h-1zM195 207h1v1h-1zM198 207h1v1h-1zM201 207h1v1h-1zM204 207h1v1h-1zM207 207h1v1h-1zM210 207h1v1h-1zM213 207h1v1h-1zM216 207h1v1h-1zM219 207h1v1h-1zM222 207h1v1h-1zM225 207h1v1h-1zM228 207h1v1h-1zM231 207h1v1h-1zM234 207h1v1h-1zM237 207h1v1h-1zM240 207h1v1h-1zM243 207h1v1h-1zM246 207h1v1h-1zM249 207h1v1h-1zM252 207h1v1h-1zM255 207h1v1h-1zM258 207h1v1h-1zM261 207h1v1h-1zM264 207h1v1h-1zM267 207h1v1h-1zM270 207h1v1h-1zM273 207h1v1h-1zM276 207h1v1h-1zM279 207h1v1h-1zM282 207h1v1h-1zM285 207h1v1h-1zM288 207h1v1h-1zM291 207h1v1h-1zM294 207h1v1h-1zM297 207h1v1h-1zM300 207h1v1h-1zM303 207h1v1h-1zM306 207h1v1h-1zM309 207h1v1h-1zM312 207h1v1h-1zM315 207h1v1h-1zM318 207h1v1h-1zM321 207h1v1h-1zM324 207h1v1h-1zM327 207h1v1h-1zM330 207h1v1h-1zM333 207h1v1h-1zM336 207h1v1h-1zM339 207h1v1h-1zM342 207h1v1h-1zM345 207h1v1h-1zM348 207h1v1h-1zM351 207h1v1h-1zM354 207h1v1h-1zM357 207h1v1h-1zM360 207h1v1h-1zM363 207h1v1h-1zM366 207h1v1h-1zM369 207h1v1h-1zM372 207h1v1h-1zM375 207h1v1h-1zM378 207h1v1h-1zM381 207h1v1h-1zM384 207h1v1h-1zM387 207h1v1h-1zM390 207h1v1h-1zM393 207h1v1h-1zM396 207h1v1h-1zM399 207h1v1h-1zM402 207h1v1h-1zM405 207h1v1h-1zM408 207h1v1h-1zM411 207h1v1h-1zM414 207h1v1h-1zM417 207h1v1h-1zM420 207h1v1h-1zM423 207h1v1h-1zM426 207h1v1h-1zM429 207h1v1h-1zM432 207h1v1h-1zM435 207h1v1h-1zM438 207h1v1h-1zM441 207h1v1h-1zM444 207h1v1h-1zM447 207h1v1h-1zM450 207h1v1h-1zM453 207h1v1h-1zM456 207h1v1h-1zM459 207h1v1h-1zM462 207h1v1h-1zM465 207h1v1h-1zM468 207h1v1h-1zM471 207h1v1h-1zM474 207h1v1h-1zM477 207h1v1h-1zM480 207h1v1h-1zM483 207h1v1h-1zM486 207h1v1h-1zM489 207h1v1h-1zM492 207h1v1h-1zM495 207h1v1h-1zM498 207h1v1h-1zM501 207h1v1h-1zM504 207h1v1h-1zM507 207h1v1h-1zM510 207h1v1h-1zM513 207h1v1h-1zM516 207h1v1h-1zM519 207h1v1h-1zM522 207h1v1h-1zM525 207h1v1h-1zM528 207h1v1h-1zM531 207h1v1h-1zM534 207h1v1h-1zM537 207h1v1h-1zM540 207h1v1h-1zM543 207h1v1h-1zM546 207h1v1h-1zM549 207h1v1h-1zM552 207h1v1h-1zM555 207h1v1h-1zM558 207h1v1h-1zM561 207h1v1h-1zM564 207h1v1h-1zM567 207h1v1h-1zM570 207h1v1h-1zM573 207h1v1h-1zM576 207h1v1h-1zM579 207h1v1h-1zM582 207h1v1h-1zM585 207h1v1h-1zM588 207h1v1h-1zM591 207h1v1h-1zM594 207h1v1h-1zM597 207h1v1h-1zM600 207h1v1h-1zM603 207h1v1h-1zM606 207h1v1h-1zM609 207h1v1h-1zM612 207h1v1h-1zM615 207h1v1h-1zM618 207h1v1h-1zM621 207h1v1h-1zM624 207h1v1h-1zM627 207h1v1h-1zM630 207h1v1h-1zM633 207h1v1h-1zM636 207h1v1h-1zM639 207h1v1h-1zM642 207h1v1h-1zM645 207h1v1h-1zM648 207h1v1h-1zM651 207h1v1h-1zM654 207h1v1h-1zM657 207h1v1h-1zM660 207h1v1h-1zM663 207h1v1h-1zM666 207h1v1h-1zM669 207h1v1h-1zM672 207h1v1h-1zM675 207h1v1h-1zM678 207h1v1h-1zM681 207h1v1h-1zM684 207h1v1h-1zM687 207h1v1h-1zM690 207h1v1h-1zM693 207h1v1h-1zM696 207h1v1h-1zM699 207h1v1h-1zM702 207h1v1h-1zM705 207h1v1h-1zM708 207h1v1h-1zM711 207h1v1h-1zM714 207h1v1h-1zM717 207h1v1h-1zM720 207h1v1h-1zM723 207h1v1h-1zM726 207h1v1h-1zM729 207h1v1h-1zM732 207h1v1h-1zM735 207h1v1h-1zM738 207h1v1h-1zM741 207h1v1h-1zM744 207h1v1h-1zM747 207h1v1h-1zM750 207h1v1h-1zM45 214h1v1h-1zM48 214h1v1h-1zM51 214h1v1h-1zM54 214h1v1h-1zM57 214h1v1h-1zM60 214h1v1h-1zM63 214h1v1h-1zM66 214h1v1h-1zM69 214h1v1h-1zM72 214h1v1h-1zM75 214h1v1h-1zM78 214h1v1h-1zM81 214h1v1h-1zM84 214h1v1h-1zM87 214h1v1h-1zM90 214h1v1h-1zM93 214h1v1h-1zM96 214h1v1h-1zM99 214h1v1h-1zM102 214h1v1h-1zM105 214h1v1h-1zM108 214h1v1h-1zM111 214h1v1h-1zM114 214h1v1h-1zM117 214h1v1h-1zM120 214h1v1h-1zM123 214h1v1h-1zM126 214h1v1h-1zM129 214h1v1h-1zM132 214h1v1h-1zM135 214h1v1h-1zM138 214h1v1h-1zM141 214h1v1h-1zM144 214h1v1h-1zM147 214h1v1h-1zM150 214h1v1h-1zM153 214h1v1h-1zM156 214h1v1h-1zM159 214h1v1h-1zM162 214h1v1h-1zM165 214h1v1h-1zM168 214h1v1h-1zM171 214h1v1h-1zM174 214h1v1h-1zM177 214h1v1h-1zM180 214h1v1h-1zM183 214h1v1h-1zM186 214h1v1h-1zM189 214h1v1h-1zM192 214h1v1h-1zM195 214h1v1h-1zM198 214h1v1h-1zM201 214h1v1h-1zM204 214h1v1h-1zM207 214h1v1h-1zM210 214h1v1h-1zM213 214h1v1h-1zM216 214h1v1h-1zM219 214h1v1h-1zM222 214h1v1h-1zM225 214h1v1h-1zM228 214h1v1h-1zM231 214h1v1h-1zM234 214h1v1h-1zM237 214h1v1h-1zM240 214h1v1h-1zM243 214h1v1h-1zM246 214h1v1h-1zM249 214h1v1h-1zM252 214h1v1h-1zM255 214h1v1h-1zM258 214h1v1h-1zM261 214h1v1h-1zM264 214h1v1h-1zM267 214h1v1h-1zM270 214h1v1h-1zM273 214h1v1h-1zM276 214h1v1h-1zM279 214h1v1h-1zM282 214h1v1h-1zM285 214h1v1h-1zM288 214h1v1h-1zM291 214h1v1h-1zM294 214h1v1h-1zM297 214h1v1h-1zM300 214h1v1h-1zM303 214h1v1h-1zM306 214h1v1h-1zM309 214h1v1h-1zM312 214h1v1h-1zM315 214h1v1h-1zM318 214h1v1h-1zM321 214h1v1h-1zM324 214h1v1h-1zM327 214h1v1h-1zM330 214h1v1h-1zM333 214h1v1h-1zM336 214h1v1h-1zM339 214h1v1h-1zM342 214h1v1h-1zM345 214h1v1h-1zM348 214h1v1h-1zM351 214h1v1h-1zM354 214h1v1h-1zM357 214h1v1h-1zM360 214h1v1h-1zM363 214h1v1h-1zM366 214h1v1h-1zM369 214h1v1h-1zM372 214h1v1h-1zM375 214h1v1h-1zM378 214h1v1h-1zM381 214h1v1h-1zM384 214h1v1h-1zM387 214h1v1h-1zM390 214h1v1h-1zM393 214h1v1h-1zM396 214h1v1h-1zM399 214h1v1h-1zM402 214h1v1h-1zM405 214h1v1h-1zM408 214h1v1h-1zM411 214h1v1h-1zM414 214h1v1h-1zM417 214h1v1h-1zM420 214h1v1h-1zM423 214h1v1h-1zM426 214h1v1h-1zM429 214h1v1h-1zM432 214h1v1h-1zM435 214h1v1h-1zM438 214h1v1h-1zM441 214h1v1h-1zM444 214h1v1h-1zM447 214h1v1h-1zM450 214h1v1h-1zM453 214h1v1h-1zM456 214h1v1h-1zM459 214h1v1h-1zM462 214h1v1h-1zM465 214h1v1h-1zM468 214h1v1h-1zM471 214h1v1h-1zM474 214h1v1h-1zM477 214h1v1h-1zM480 214h1v1h-1zM483 214h1v1h-1zM486 214h1v1h-1zM489 214h1v1h-1zM492 214h1v1h-1zM495 214h1v1h-1zM498 214h1v1h-1zM501 214h1v1h-1zM504 214h1v1h-1zM507 214h1v1h-1zM510 214h1v1h-1zM513 214h1v1h-1zM516 214h1v1h-1zM519 214h1v1h-1zM522 214h1v1h-1zM525 214h1v1h-1zM528 214h1v1h-1zM531 214h1v1h-1zM534 214h1v1h-1zM537 214h1v1h-1zM540 214h1v1h-1zM543 214h1v1h-1zM546 214h1v1h-1zM549 214h1v1h-1zM552 214h1v1h-1zM555 214h1v1h-1zM558 214h1v1h-1zM561 214h1v1h-1zM564 214h1v1h-1zM567 214h1v1h-1zM570 214h1v1h-1zM573 214h1v1h-1zM576 214h1v1h-1zM579 214h1v1h-1zM582 214h1v1h-1zM585 214h1v1h-1zM588 214h1v1h-1zM591 214h1v1h-1zM594 214h1v1h-1zM597 214h1v1h-1zM600 214h1v1h-1zM603 214h1v1h-1zM606 214h1v1h-1zM609 214h1v1h-1zM612 214h1v1h-1zM615 214h1v1h-1zM618 214h1v1h-1zM621 214h1v1h-1zM624 214h1v1h-1zM627 214h1v1h-1zM630 214h1v1h-1zM633 214h1v1h-1zM636 214h1v1h-1zM639 214h1v1h-1zM642 214h1v1h-1zM645 214h1v1h-1zM648 214h1v1h-1zM651 214h1v1h-1zM654 214h1v1h-1zM657 214h1v1h-1zM660 214h1v1h-1zM663 214h1v1h-1zM666 214h1v1h-1zM669 214h1v1h-1zM672 214h1v1h-1zM675 214h1v1h-1zM678 214h1v1h-1zM681 214h1v1h-1zM684 214h1v1h-1zM687 214h1v1h-1zM690 214h1v1h-1zM693 214h1v1h-1zM696 214h1v1h-1zM699 214h1v1h-1zM702 214h1v1h-1zM705 214h1v1h-1zM708 214h1v1h-1zM711 214h1v1h-1zM714 214h1v1h-1zM717 214h1v1h-1zM720 214h1v1h-1zM723 214h1v1h-1zM726 214h1v1h-1zM729 214h1v1h-1zM732 214h1v1h-1zM735 214h1v1h-1zM738 214h1v1h-1zM741 214h1v1h-1zM744 214h1v1h-1zM747 214h1v1h-1zM750 214h1v1h-1zM45 227h1v1h-1zM48 227h1v1h-1zM51 227h1v1h-1zM54 227h1v1h-1zM57 227h1v1h-1zM60 227h1v1h-1zM63 227h1v1h-1zM66 227h1v1h-1zM69 227h1v1h-1zM72 227h1v1h-1zM75 227h1v1h-1zM78 227h1v1h-1zM81 227h1v1h-1zM84 227h1v1h-1zM87 227h1v1h-1zM90 227h1v1h-1zM93 227h1v1h-1zM96 227h1v1h-1zM99 227h1v1h-1zM102 227h1v1h-1zM105 227h1v1h-1zM108 227h1v1h-1zM111 227h1v1h-1zM114 227h1v1h-1zM117 227h1v1h-1zM120 227h1v1h-1zM123 227h1v1h-1zM126 227h1v1h-1zM129 227h1v1h-1zM132 227h1v1h-1zM135 227h1v1h-1zM138 227h1v1h-1zM141 227h1v1h-1zM144 227h1v1h-1zM147 227h1v1h-1zM150 227h1v1h-1zM153 227h1v1h-1zM156 227h1v1h-1zM159 227h1v1h-1zM162 227h1v1h-1zM165 227h1v1h-1zM168 227h1v1h-1zM171 227h1v1h-1zM174 227h1v1h-1zM177 227h1v1h-1zM180 227h1v1h-1zM183 227h1v1h-1zM186 227h1v1h-1zM189 227h1v1h-1zM192 227h1v1h-1zM195 227h1v1h-1zM198 227h1v1h-1zM201 227h1v1h-1zM204 227h1v1h-1zM207 227h1v1h-1zM210 227h1v1h-1zM213 227h1v1h-1zM216 227h1v1h-1zM219 227h1v1h-1zM222 227h1v1h-1zM225 227h1v1h-1zM228 227h1v1h-1zM231 227h1v1h-1zM234 227h1v1h-1zM237 227h1v1h-1zM240 227h1v1h-1zM243 227h1v1h-1zM246 227h1v1h-1zM249 227h1v1h-1zM252 227h1v1h-1zM255 227h1v1h-1zM258 227h1v1h-1zM261 227h1v1h-1zM264 227h1v1h-1zM267 227h1v1h-1zM270 227h1v1h-1zM273 227h1v1h-1zM276 227h1v1h-1zM279 227h1v1h-1zM282 227h1v1h-1zM285 227h1v1h-1zM288 227h1v1h-1zM291 227h1v1h-1zM294 227h1v1h-1zM297 227h1v1h-1zM300 227h1v1h-1zM303 227h1v1h-1zM306 227h1v1h-1zM309 227h1v1h-1zM312 227h1v1h-1zM315 227h1v1h-1zM318 227h1v1h-1zM321 227h1v1h-1zM324 227h1v1h-1zM327 227h1v1h-1zM330 227h1v1h-1zM333 227h1v1h-1zM336 227h1v1h-1zM339 227h1v1h-1zM342 227h1v1h-1zM345 227h1v1h-1zM348 227h1v1h-1zM351 227h1v1h-1zM354 227h1v1h-1zM357 227h1v1h-1zM360 227h1v1h-1zM363 227h1v1h-1zM366 227h1v1h-1zM369 227h1v1h-1zM372 227h1v1h-1zM375 227h1v1h-1zM378 227h1v1h-1zM381 227h1v1h-1zM384 227h1v1h-1zM387 227h1v1h-1zM390 227h1v1h-1zM393 227h1v1h-1zM396 227h1v1h-1zM399 227h1v1h-1zM402 227h1v1h-1zM405 227h1v1h-1zM408 227h1v1h-1zM411 227h1v1h-1zM414 227h1v1h-1zM417 227h1v1h-1zM420 227h1v1h-1zM423 227h1v1h-1zM426 227h1v1h-1zM429 227h1v1h-1zM432 227h1v1h-1zM435 227h1v1h-1zM438 227h1v1h-1zM441 227h1v1h-1zM444 227h1v1h-1zM447 227h1v1h-1zM450 227h1v1h-1zM453 227h1v1h-1zM456 227h1v1h-1zM459 227h1v1h-1zM462 227h1v1h-1zM465 227h1v1h-1zM468 227h1v1h-1zM471 227h1v1h-1zM474 227h1v1h-1zM477 227h1v1h-1zM480 227h1v1h-1zM483 227h1v1h-1zM486 227h1v1h-1zM489 227h1v1h-1zM492 227h1v1h-1zM495 227h1v1h-1zM498 227h1v1h-1zM501 227h1v1h-1zM504 227h1v1h-1zM507 227h1v1h-1zM510 227h1v1h-1zM513 227h1v1h-1zM516 227h1v1h-1zM519 227h1v1h-1zM522 227h1v1h-1zM525 227h1v1h-1zM528 227h1v1h-1zM531 227h1v1h-1zM534 227h1v1h-1zM537 227h1v1h-1zM540 227h1v1h-1zM543 227h1v1h-1zM546 227h1v1h-1zM549 227h1v1h-1zM552 227h1v1h-1zM555 227h1v1h-1zM558 227h1v1h-1zM561 227h1v1h-1zM564 227h1v1h-1zM567 227h1v1h-1zM570 227h1v1h-1zM573 227h1v1h-1zM576 227h1v1h-1zM579 227h1v1h-1zM582 227h1v1h-1zM585 227h1v1h-1zM588 227h1v1h-1zM591 227h1v1h-1zM594 227h1v1h-1zM597 227h1v1h-1zM600 227h1v1h-1zM603 227h1v1h-1zM606 227h1v1h-1zM609 227h1v1h-1zM612 227h1v1h-1zM615 227h1v1h-1zM618 227h1v1h-1zM621 227h1v1h-1zM624 227h1v1h-1zM627 227h1v1h-1zM630 227h1v1h-1zM633 227h1v1h-1zM636 227h1v1h-1zM639 227h1v1h-1zM642 227h1v1h-1zM645 227h1v1h-1zM648 227h1v1h-1zM651 227h1v1h-1zM654 227h1v1h-1zM657 227h1v1h-1zM660 227h1v1h-1zM663 227h1v1h-1zM666 227h1v1h-1zM669 227h1v1h-1zM672 227h1v1h-1zM675 227h1v1h-1zM678 227h1v1h-1zM681 227h1v1h-1zM684 227h1v1h-1zM687 227h1v1h-1zM690 227h1v1h-1zM693 227h1v1h-1zM696 227h1v1h-1zM699 227h1v1h-1zM702 227h1v1h-1zM705 227h1v1h-1zM708 227h1v1h-1zM711 227h1v1h-1zM714 227h1v1h-1zM717 227h1v1h-1zM720 227h1v1h-1zM723 227h1v1h-1zM726 227h1v1h-1zM729 227h1v1h-1zM732 227h1v1h-1zM735 227h1v1h-1zM738 227h1v1h-1zM741 227h1v1h-1zM744 227h1v1h-1zM747 227h1v1h-1zM750 227h1v1h-1zM45 239h1v1h-1zM48 239h1v1h-1zM51 239h1v1h-1zM54 239h1v1h-1zM57 239h1v1h-1zM60 239h1v1h-1zM63 239h1v1h-1zM66 239h1v1h-1zM69 239h1v1h-1zM72 239h1v1h-1zM75 239h1v1h-1zM78 239h1v1h-1zM81 239h1v1h-1zM84 239h1v1h-1zM87 239h1v1h-1zM90 239h1v1h-1zM93 239h1v1h-1zM96 239h1v1h-1zM99 239h1v1h-1zM102 239h1v1h-1zM105 239h1v1h-1zM108 239h1v1h-1zM111 239h1v1h-1zM114 239h1v1h-1zM117 239h1v1h-1zM120 239h1v1h-1zM123 239h1v1h-1zM126 239h1v1h-1zM129 239h1v1h-1zM132 239h1v1h-1zM135 239h1v1h-1zM138 239h1v1h-1zM141 239h1v1h-1zM144 239h1v1h-1zM147 239h1v1h-1zM150 239h1v1h-1zM153 239h1v1h-1zM156 239h1v1h-1zM159 239h1v1h-1zM162 239h1v1h-1zM165 239h1v1h-1zM168 239h1v1h-1zM171 239h1v1h-1zM174 239h1v1h-1zM177 239h1v1h-1zM180 239h1v1h-1zM183 239h1v1h-1zM186 239h1v1h-1zM189 239h1v1h-1zM192 239h1v1h-1zM195 239h1v1h-1zM198 239h1v1h-1zM201 239h1v1h-1zM204 239h1v1h-1zM207 239h1v1h-1zM210 239h1v1h-1zM213 239h1v1h-1zM216 239h1v1h-1zM219 239h1v1h-1zM222 239h1v1h-1zM225 239h1v1h-1zM228 239h1v1h-1zM231 239h1v1h-1zM234 239h1v1h-1zM237 239h1v1h-1zM240 239h1v1h-1zM243 239h1v1h-1zM246 239h1v1h-1zM249 239h1v1h-1zM252 239h1v1h-1zM255 239h1v1h-1zM258 239h1v1h-1zM261 239h1v1h-1zM264 239h1v1h-1zM267 239h1v1h-1zM270 239h1v1h-1zM273 239h1v1h-1zM276 239h1v1h-1zM279 239h1v1h-1zM282 239h1v1h-1zM285 239h1v1h-1zM288 239h1v1h-1zM291 239h1v1h-1zM294 239h1v1h-1zM297 239h1v1h-1zM300 239h1v1h-1zM303 239h1v1h-1zM306 239h1v1h-1zM309 239h1v1h-1zM312 239h1v1h-1zM315 239h1v1h-1zM318 239h1v1h-1zM321 239h1v1h-1zM324 239h1v1h-1zM327 239h1v1h-1zM330 239h1v1h-1zM333 239h1v1h-1zM336 239h1v1h-1zM339 239h1v1h-1zM342 239h1v1h-1zM345 239h1v1h-1zM348 239h1v1h-1zM351 239h1v1h-1zM354 239h1v1h-1zM357 239h1v1h-1zM360 239h1v1h-1zM363 239h1v1h-1zM366 239h1v1h-1zM369 239h1v1h-1zM372 239h1v1h-1zM375 239h1v1h-1zM378 239h1v1h-1zM381 239h1v1h-1zM384 239h1v1h-1zM387 239h1v1h-1zM390 239h1v1h-1zM393 239h1v1h-1zM396 239h1v1h-1zM399 239h1v1h-1zM402 239h1v1h-1zM405 239h1v1h-1zM408 239h1v1h-1zM411 239h1v1h-1zM414 239h1v1h-1zM417 239h1v1h-1zM420 239h1v1h-1zM423 239h1v1h-1zM426 239h1v1h-1zM429 239h1v1h-1zM432 239h1v1h-1zM435 239h1v1h-1zM438 239h1v1h-1zM441 239h1v1h-1zM444 239h1v1h-1zM447 239h1v1h-1zM450 239h1v1h-1zM453 239h1v1h-1zM456 239h1v1h-1zM459 239h1v1h-1zM462 239h1v1h-1zM465 239h1v1h-1zM468 239h1v1h-1zM471 239h1v1h-1zM474 239h1v1h-1zM477 239h1v1h-1zM480 239h1v1h-1zM483 239h1v1h-1zM486 239h1v1h-1zM489 239h1v1h-1zM492 239h1v1h-1zM495 239h1v1h-1zM498 239h1v1h-1zM501 239h1v1h-1zM504 239h1v1h-1zM507 239h1v1h-1zM510 239h1v1h-1zM513 239h1v1h-1zM516 239h1v1h-1zM519 239h1v1h-1zM522 239h1v1h-1zM525 239h1v1h-1zM528 239h1v1h-1zM531 239h1v1h-1zM534 239h1v1h-1zM537 239h1v1h-1zM540 239h1v1h-1zM543 239h1v1h-1zM546 239h1v1h-1zM549 239h1v1h-1zM552 239h1v1h-1zM555 239h1v1h-1zM558 239h1v1h-1zM561 239h1v1h-1zM564 239h1v1h-1zM567 239h1v1h-1zM570 239h1v1h-1zM573 239h1v1h-1zM576 239h1v1h-1zM579 239h1v1h-1zM582 239h1v1h-1zM585 239h1v1h-1zM588 239h1v1h-1zM591 239h1v1h-1zM594 239h1v1h-1zM597 239h1v1h-1zM600 239h1v1h-1zM603 239h1v1h-1zM606 239h1v1h-1zM609 239h1v1h-1zM612 239h1v1h-1zM615 239h1v1h-1zM618 239h1v1h-1zM621 239h1v1h-1zM624 239h1v1h-1zM627 239h1v1h-1zM630 239h1v1h-1zM633 239h1v1h-1zM636 239h1v1h-1zM639 239h1v1h-1zM642 239h1v1h-1zM645 239h1v1h-1zM648 239h1v1h-1zM651 239h1v1h-1zM654 239h1v1h-1zM657 239h1v1h-1zM660 239h1v1h-1zM663 239h1v1h-1zM666 239h1v1h-1zM669 239h1v1h-1zM672 239h1v1h-1zM675 239h1v1h-1zM678 239h1v1h-1zM681 239h1v1h-1zM684 239h1v1h-1zM687 239h1v1h-1zM690 239h1v1h-1zM693 239h1v1h-1zM696 239h1v1h-1zM699 239h1v1h-1zM702 239h1v1h-1zM705 239h1v1h-1zM708 239h1v1h-1zM711 239h1v1h-1zM714 239h1v1h-1zM717 239h1v1h-1zM720 239h1v1h-1zM723 239h1v1h-1zM726 239h1v1h-1zM729 239h1v1h-1zM732 239h1v1h-1zM735 239h1v1h-1zM738 239h1v1h-1zM741 239h1v1h-1zM744 239h1v1h-1zM747 239h1v1h-1zM750 239h1v1h-1zM45 243h1v1h-1zM48 243h1v1h-1zM51 243h1v1h-1zM54 243h1v1h-1zM57 243h1v1h-1zM60 243h1v1h-1zM63 243h1v1h-1zM66 243h1v1h-1zM69 243h1v1h-1zM72 243h1v1h-1zM75 243h1v1h-1zM78 243h1v1h-1zM81 243h1v1h-1zM84 243h1v1h-1zM87 243h1v1h-1zM90 243h1v1h-1zM93 243h1v1h-1zM96 243h1v1h-1zM99 243h1v1h-1zM102 243h1v1h-1zM105 243h1v1h-1zM108 243h1v1h-1zM111 243h1v1h-1zM114 243h1v1h-1zM117 243h1v1h-1zM120 243h1v1h-1zM123 243h1v1h-1zM126 243h1v1h-1zM129 243h1v1h-1zM132 243h1v1h-1zM135 243h1v1h-1zM138 243h1v1h-1zM141 243h1v1h-1zM144 243h1v1h-1zM147 243h1v1h-1zM150 243h1v1h-1zM153 243h1v1h-1zM156 243h1v1h-1zM159 243h1v1h-1zM162 243h1v1h-1zM165 243h1v1h-1zM168 243h1v1h-1zM171 243h1v1h-1zM174 243h1v1h-1zM177 243h1v1h-1zM180 243h1v1h-1zM183 243h1v1h-1zM186 243h1v1h-1zM189 243h1v1h-1zM192 243h1v1h-1zM195 243h1v1h-1zM198 243h1v1h-1zM201 243h1v1h-1zM204 243h1v1h-1zM207 243h1v1h-1zM210 243h1v1h-1zM213 243h1v1h-1zM216 243h1v1h-1zM219 243h1v1h-1zM222 243h1v1h-1zM225 243h1v1h-1zM228 243h1v1h-1zM231 243h1v1h-1zM234 243h1v1h-1zM237 243h1v1h-1zM240 243h1v1h-1zM243 243h1v1h-1zM246 243h1v1h-1zM249 243h1v1h-1zM252 243h1v1h-1zM255 243h1v1h-1zM258 243h1v1h-1zM261 243h1v1h-1zM264 243h1v1h-1zM267 243h1v1h-1zM270 243h1v1h-1zM273 243h1v1h-1zM276 243h1v1h-1zM279 243h1v1h-1zM282 243h1v1h-1zM285 243h1v1h-1zM288 243h1v1h-1zM291 243h1v1h-1zM294 243h1v1h-1zM297 243h1v1h-1zM300 243h1v1h-1zM303 243h1v1h-1zM306 243h1v1h-1zM309 243h1v1h-1zM312 243h1v1h-1zM315 243h1v1h-1zM318 243h1v1h-1zM321 243h1v1h-1zM324 243h1v1h-1zM327 243h1v1h-1zM330 243h1v1h-1zM333 243h1v1h-1zM336 243h1v1h-1zM339 243h1v1h-1zM342 243h1v1h-1zM345 243h1v1h-1zM348 243h1v1h-1zM351 243h1v1h-1zM354 243h1v1h-1zM357 243h1v1h-1zM360 243h1v1h-1zM363 243h1v1h-1zM366 243h1v1h-1zM369 243h1v1h-1zM372 243h1v1h-1zM375 243h1v1h-1zM378 243h1v1h-1zM381 243h1v1h-1zM384 243h1v1h-1zM387 243h1v1h-1zM390 243h1v1h-1zM393 243h1v1h-1zM396 243h1v1h-1zM399 243h1v1h-1zM402 243h1v1h-1zM405 243h1v1h-1zM408 243h1v1h-1zM411 243h1v1h-1zM414 243h1v1h-1zM417 243h1v1h-1zM420 243h1v1h-1zM423 243h1v1h-1zM426 243h1v1h-1zM429 243h1v1h-1zM432 243h1v1h-1zM435 243h1v1h-1zM438 243h1v1h-1zM441 243h1v1h-1zM444 243h1v1h-1zM447 243h1v1h-1zM450 243h1v1h-1zM453 243h1v1h-1zM456 243h1v1h-1zM459 243h1v1h-1zM462 243h1v1h-1zM465 243h1v1h-1zM468 243h1v1h-1zM471 243h1v1h-1zM474 243h1v1h-1zM477 243h1v1h-1zM480 243h1v1h-1zM483 243h1v1h-1zM486 243h1v1h-1zM489 243h1v1h-1zM492 243h1v1h-1zM495 243h1v1h-1zM498 243h1v1h-1zM501 243h1v1h-1zM504 243h1v1h-1zM507 243h1v1h-1zM510 243h1v1h-1zM513 243h1v1h-1zM516 243h1v1h-1zM519 243h1v1h-1zM522 243h1v1h-1zM525 243h1v1h-1zM528 243h1v1h-1zM531 243h1v1h-1zM534 243h1v1h-1zM537 243h1v1h-1zM540 243h1v1h-1zM543 243h1v1h-1zM546 243h1v1h-1zM549 243h1v1h-1zM552 243h1v1h-1zM555 243h1v1h-1zM558 243h1v1h-1zM561 243h1v1h-1zM564 243h1v1h-1zM567 243h1v1h-1zM570 243h1v1h-1zM573 243h1v1h-1zM576 243h1v1h-1zM579 243h1v1h-1zM582 243h1v1h-1zM585 243h1v1h-1zM588 243h1v1h-1zM591 243h1v1h-1zM594 243h1v1h-1zM597 243h1v1h-1zM600 243h1v1h-1zM603 243h1v1h-1zM606 243h1v1h-1zM609 243h1v1h-1zM612 243h1v1h-1zM615 243h1v1h-1zM618 243h1v1h-1zM621 243h1v1h-1zM624 243h1v1h-1zM627 243h1v1h-1zM630 243h1v1h-1zM633 243h1v1h-1zM636 243h1v1h-1zM639 243h1v1h-1zM642 243h1v1h-1zM645 243h1v1h-1zM648 243h1v1h-1zM651 243h1v1h-1zM654 243h1v1h-1zM657 243h1v1h-1zM660 243h1v1h-1zM663 243h1v1h-1zM666 243h1v1h-1zM669 243h1v1h-1zM672 243h1v1h-1zM675 243h1v1h-1zM678 243h1v1h-1zM681 243h1v1h-1zM684 243h1v1h-1zM687 243h1v1h-1zM690 243h1v1h-1zM693 243h1v1h-1zM696 243h1v1h-1zM699 243h1v1h-1zM702 243h1v1h-1zM705 243h1v1h-1zM708 243h1v1h-1zM711 243h1v1h-1zM714 243h1v1h-1zM717 243h1v1h-1zM720 243h1v1h-1zM723 243h1v1h-1zM726 243h1v1h-1zM729 243h1v1h-1zM732 243h1v1h-1zM735 243h1v1h-1zM738 243h1v1h-1zM741 243h1v1h-1zM744 243h1v1h-1zM747 243h1v1h-1zM750 243h1v1h-1zM45 248h1v1h-1zM48 248h1v1h-1zM51 248h1v1h-1zM54 248h1v1h-1zM57 248h1v1h-1zM60 248h1v1h-1zM63 248h1v1h-1zM66 248h1v1h-1zM69 248h1v1h-1zM72 248h1v1h-1zM75 248h1v1h-1zM78 248h1v1h-1zM81 248h1v1h-1zM84 248h1v1h-1zM87 248h1v1h-1zM90 248h1v1h-1zM93 248h1v1h-1zM96 248h1v1h-1zM99 248h1v1h-1zM102 248h1v1h-1zM105 248h1v1h-1zM108 248h1v1h-1zM111 248h1v1h-1zM114 248h1v1h-1zM117 248h1v1h-1zM120 248h1v1h-1zM123 248h1v1h-1zM126 248h1v1h-1zM129 248h1v1h-1zM132 248h1v1h-1zM135 248h1v1h-1zM138 248h1v1h-1zM141 248h1v1h-1zM144 248h1v1h-1zM147 248h1v1h-1zM150 248h1v1h-1zM153 248h1v1h-1zM156 248h1v1h-1zM159 248h1v1h-1zM162 248h1v1h-1zM165 248h1v1h-1zM168 248h1v1h-1zM171 248h1v1h-1zM174 248h1v1h-1zM177 248h1v1h-1zM180 248h1v1h-1zM183 248h1v1h-1zM186 248h1v1h-1zM189 248h1v1h-1zM192 248h1v1h-1zM195 248h1v1h-1zM198 248h1v1h-1zM201 248h1v1h-1zM204 248h1v1h-1zM207 248h1v1h-1zM210 248h1v1h-1zM213 248h1v1h-1zM216 248h1v1h-1zM219 248h1v1h-1zM222 248h1v1h-1zM225 248h1v1h-1zM228 248h1v1h-1zM231 248h1v1h-1zM234 248h1v1h-1zM237 248h1v1h-1zM240 248h1v1h-1zM243 248h1v1h-1zM246 248h1v1h-1zM249 248h1v1h-1zM252 248h1v1h-1zM255 248h1v1h-1zM258 248h1v1h-1zM261 248h1v1h-1zM264 248h1v1h-1zM267 248h1v1h-1zM270 248h1v1h-1zM273 248h1v1h-1zM276 248h1v1h-1zM279 248h1v1h-1zM282 248h1v1h-1zM285 248h1v1h-1zM288 248h1v1h-1zM291 248h1v1h-1zM294 248h1v1h-1zM297 248h1v1h-1zM300 248h1v1h-1zM303 248h1v1h-1zM306 248h1v1h-1zM309 248h1v1h-1zM312 248h1v1h-1zM315 248h1v1h-1zM318 248h1v1h-1zM321 248h1v1h-1zM324 248h1v1h-1zM327 248h1v1h-1zM330 248h1v1h-1zM333 248h1v1h-1zM336 248h1v1h-1zM339 248h1v1h-1zM342 248h1v1h-1zM345 248h1v1h-1zM348 248h1v1h-1zM351 248h1v1h-1zM354 248h1v1h-1zM357 248h1v1h-1zM360 248h1v1h-1zM363 248h1v1h-1zM366 248h1v1h-1zM369 248h1v1h-1zM372 248h1v1h-1zM375 248h1v1h-1zM378 248h1v1h-1zM381 248h1v1h-1zM384 248h1v1h-1zM387 248h1v1h-1zM390 248h1v1h-1zM393 248h1v1h-1zM396 248h1v1h-1zM399 248h1v1h-1zM402 248h1v1h-1zM405 248h1v1h-1zM408 248h1v1h-1zM411 248h1v1h-1zM414 248h1v1h-1zM417 248h1v1h-1zM420 248h1v1h-1zM423 248h1v1h-1zM426 248h1v1h-1zM429 248h1v1h-1zM432 248h1v1h-1zM435 248h1v1h-1zM438 248h1v1h-1zM441 248h1v1h-1zM444 248h1v1h-1zM447 248h1v1h-1zM450 248h1v1h-1zM453 248h1v1h-1zM456 248h1v1h-1zM459 248h1v1h-1zM462 248h1v1h-1zM465 248h1v1h-1zM468 248h1v1h-1zM471 248h1v1h-1zM474 248h1v1h-1zM477 248h1v1h-1zM480 248h1v1h-1zM483 248h1v1h-1zM486 248h1v1h-1zM489 248h1v1h-1zM492 248h1v1h-1zM495 248h1v1h-1zM498 248h1v1h-1zM501 248h1v1h-1zM504 248h1v1h-1zM507 248h1v1h-1zM510 248h1v1h-1zM513 248h1v1h-1zM516 248h1v1h-1zM519 248h1v1h-1zM522 248h1v1h-1zM525 248h1v1h-1zM528 248h1v1h-1zM531 248h1v1h-1zM534 248h1v1h-1zM537 248h1v1h-1zM540 248h1v1h-1zM543 248h1v1h-1zM546 248h1v1h-1zM549 248h1v1h-1zM552 248h1v1h-1zM555 248h1v1h-1zM558 248h1v1h-1zM561 248h1v1h-1zM564 248h1v1h-1zM567 248h1v1h-1zM570 248h1v1h-1zM573 248h1v1h-1zM576 248h1v1h-1zM579 248h1v1h-1zM582 248h1v1h-1zM585 248h1v1h-1zM588 248h1v1h-1zM591 248h1v1h-1zM594 248h1v1h-1zM597 248h1v1h-1zM600 248h1v1h-1zM603 248h1v1h-1zM606 248h1v1h-1zM609 248h1v1h-1zM612 248h1v1h-1zM615 248h1v1h-1zM618 248h1v1h-1zM621 248h1v1h-1zM624 248h1v1h-1zM627 248h1v1h-1zM630 248h1v1h-1zM633 248h1v1h-1zM636 248h1v1h-1zM639 248h1v1h-1zM642 248h1v1h-1zM645 248h1v1h-1zM648 248h1v1h-1zM651 248h1v1h-1zM654 248h1v1h-1zM657 248h1v1h-1zM660 248h1v1h-1zM663 248h1v1h-1zM666 248h1v1h-1zM669 248h1v1h-1zM672 248h1v1h-1zM675 248h1v1h-1zM678 248h1v1h-1zM681 248h1v1h-1zM684 248h1v1h-1zM687 248h1v1h-1zM690 248h1v1h-1zM693 248h1v1h-1zM696 248h1v1h-1zM699 248h1v1h-1zM702 248h1v1h-1zM705 248h1v1h-1zM708 248h1v1h-1zM711 248h1v1h-1zM714 248h1v1h-1zM717 248h1v1h-1zM720 248h1v1h-1zM723 248h1v1h-1zM726 248h1v1h-1zM729 248h1v1h-1zM732 248h1v1h-1zM735 248h1v1h-1zM738 248h1v1h-1zM741 248h1v1h-1zM744 248h1v1h-1zM747 248h1v1h-1zM750 248h1v1h-1zM45 255h1v1h-1zM48 255h1v1h-1zM51 255h1v1h-1zM54 255h1v1h-1zM57 255h1v1h-1zM60 255h1v1h-1zM63 255h1v1h-1zM66 255h1v1h-1zM69 255h1v1h-1zM72 255h1v1h-1zM75 255h1v1h-1zM78 255h1v1h-1zM81 255h1v1h-1zM84 255h1v1h-1zM87 255h1v1h-1zM90 255h1v1h-1zM93 255h1v1h-1zM96 255h1v1h-1zM99 255h1v1h-1zM102 255h1v1h-1zM105 255h1v1h-1zM108 255h1v1h-1zM111 255h1v1h-1zM114 255h1v1h-1zM117 255h1v1h-1zM120 255h1v1h-1zM123 255h1v1h-1zM126 255h1v1h-1zM129 255h1v1h-1zM132 255h1v1h-1zM135 255h1v1h-1zM138 255h1v1h-1zM141 255h1v1h-1zM144 255h1v1h-1zM147 255h1v1h-1zM150 255h1v1h-1zM153 255h1v1h-1zM156 255h1v1h-1zM159 255h1v1h-1zM162 255h1v1h-1zM165 255h1v1h-1zM168 255h1v1h-1zM171 255h1v1h-1zM174 255h1v1h-1zM177 255h1v1h-1zM180 255h1v1h-1zM183 255h1v1h-1zM186 255h1v1h-1zM189 255h1v1h-1zM192 255h1v1h-1zM195 255h1v1h-1zM198 255h1v1h-1zM201 255h1v1h-1zM204 255h1v1h-1zM207 255h1v1h-1zM210 255h1v1h-1zM213 255h1v1h-1zM216 255h1v1h-1zM219 255h1v1h-1zM222 255h1v1h-1zM225 255h1v1h-1zM228 255h1v1h-1zM231 255h1v1h-1zM234 255h1v1h-1zM237 255h1v1h-1zM240 255h1v1h-1zM243 255h1v1h-1zM246 255h1v1h-1zM249 255h1v1h-1zM252 255h1v1h-1zM255 255h1v1h-1zM258 255h1v1h-1zM261 255h1v1h-1zM264 255h1v1h-1zM267 255h1v1h-1zM270 255h1v1h-1zM273 255h1v1h-1zM276 255h1v1h-1zM279 255h1v1h-1zM282 255h1v1h-1zM285 255h1v1h-1zM288 255h1v1h-1zM291 255h1v1h-1zM294 255h1v1h-1zM297 255h1v1h-1zM300 255h1v1h-1zM303 255h1v1h-1zM306 255h1v1h-1zM309 255h1v1h-1zM312 255h1v1h-1zM315 255h1v1h-1zM318 255h1v1h-1zM321 255h1v1h-1zM324 255h1v1h-1zM327 255h1v1h-1zM330 255h1v1h-1zM333 255h1v1h-1zM336 255h1v1h-1zM339 255h1v1h-1zM342 255h1v1h-1zM345 255h1v1h-1zM348 255h1v1h-1zM351 255h1v1h-1zM354 255h1v1h-1zM357 255h1v1h-1zM360 255h1v1h-1zM363 255h1v1h-1zM366 255h1v1h-1zM369 255h1v1h-1zM372 255h1v1h-1zM375 255h1v1h-1zM378 255h1v1h-1zM381 255h1v1h-1zM384 255h1v1h-1zM387 255h1v1h-1zM390 255h1v1h-1zM393 255h1v1h-1zM396 255h1v1h-1zM399 255h1v1h-1zM402 255h1v1h-1zM405 255h1v1h-1zM408 255h1v1h-1zM411 255h1v1h-1zM414 255h1v1h-1zM417 255h1v1h-1zM420 255h1v1h-1zM423 255h1v1h-1zM426 255h1v1h-1zM429 255h1v1h-1zM432 255h1v1h-1zM435 255h1v1h-1zM438 255h1v1h-1zM441 255h1v1h-1zM444 255h1v1h-1zM447 255h1v1h-1zM450 255h1v1h-1zM453 255h1v1h-1zM456 255h1v1h-1zM459 255h1v1h-1zM462 255h1v1h-1zM465 255h1v1h-1zM468 255h1v1h-1zM471 255h1v1h-1zM474 255h1v1h-1zM477 255h1v1h-1zM480 255h1v1h-1zM483 255h1v1h-1zM486 255h1v1h-1zM489 255h1v1h-1zM492 255h1v1h-1zM495 255h1v1h-1zM498 255h1v1h-1zM501 255h1v1h-1zM504 255h1v1h-1zM507 255h1v1h-1zM510 255h1v1h-1zM513 255h1v1h-1zM516 255h1v1h-1zM519 255h1v1h-1zM522 255h1v1h-1zM525 255h1v1h-1zM528 255h1v1h-1zM531 255h1v1h-1zM534 255h1v1h-1zM537 255h1v1h-1zM540 255h1v1h-1zM543 255h1v1h-1zM546 255h1v1h-1zM549 255h1v1h-1zM552 255h1v1h-1zM555 255h1v1h-1zM558 255h1v1h-1zM561 255h1v1h-1zM564 255h1v1h-1zM567 255h1v1h-1zM570 255h1v1h-1zM573 255h1v1h-1zM576 255h1v1h-1zM579 255h1v1h-1zM582 255h1v1h-1zM585 255h1v1h-1zM588 255h1v1h-1zM591 255h1v1h-1zM594 255h1v1h-1zM597 255h1v1h-1zM600 255h1v1h-1zM603 255h1v1h-1zM606 255h1v1h-1zM609 255h1v1h-1zM612 255h1v1h-1zM615 255h1v1h-1zM618 255h1v1h-1zM621 255h1v1h-1zM624 255h1v1h-1zM627 255h1v1h-1zM630 255h1v1h-1zM633 255h1v1h-1zM636 255h1v1h-1zM639 255h1v1h-1zM642 255h1v1h-1zM645 255h1v1h-1zM648 255h1v1h-1zM651 255h1v1h-1zM654 255h1v1h-1zM657 255h1v1h-1zM660 255h1v1h-1zM663 255h1v1h-1zM666 255h1v1h-1zM669 255h1v1h-1zM672 255h1v1h-1zM675 255h1v1h-1zM678 255h1v1h-1zM681 255h1v1h-1zM684 255h1v1h-1zM687 255h1v1h-1zM690 255h1v1h-1zM693 255h1v1h-1zM696 255h1v1h-1zM699 255h1v1h-1zM702 255h1v1h-1zM705 255h1v1h-1zM708 255h1v1h-1zM711 255h1v1h-1zM714 255h1v1h-1zM717 255h1v1h-1zM720 255h1v1h-1zM723 255h1v1h-1zM726 255h1v1h-1zM729 255h1v1h-1zM732 255h1v1h-1zM735 255h1v1h-1zM738 255h1v1h-1zM741 255h1v1h-1zM744 255h1v1h-1zM747 255h1v1h-1zM750 255h1v1h-1zM45 268h1v1h-1zM48 268h1v1h-1zM51 268h1v1h-1zM54 268h1v1h-1zM57 268h1v1h-1zM60 268h1v1h-1zM63 268h1v1h-1zM66 268h1v1h-1zM69 268h1v1h-1zM72 268h1v1h-1zM75 268h1v1h-1zM78 268h1v1h-1zM81 268h1v1h-1zM84 268h1v1h-1zM87 268h1v1h-1zM90 268h1v1h-1zM93 268h1v1h-1zM96 268h1v1h-1zM99 268h1v1h-1zM102 268h1v1h-1zM105 268h1v1h-1zM108 268h1v1h-1zM111 268h1v1h-1zM114 268h1v1h-1zM117 268h1v1h-1zM120 268h1v1h-1zM123 268h1v1h-1zM126 268h1v1h-1zM129 268h1v1h-1zM132 268h1v1h-1zM135 268h1v1h-1zM138 268h1v1h-1zM141 268h1v1h-1zM144 268h1v1h-1zM147 268h1v1h-1zM150 268h1v1h-1zM153 268h1v1h-1zM156 268h1v1h-1zM159 268h1v1h-1zM162 268h1v1h-1zM165 268h1v1h-1zM168 268h1v1h-1zM171 268h1v1h-1zM174 268h1v1h-1zM177 268h1v1h-1zM180 268h1v1h-1zM183 268h1v1h-1zM186 268h1v1h-1zM189 268h1v1h-1zM192 268h1v1h-1zM195 268h1v1h-1zM198 268h1v1h-1zM201 268h1v1h-1zM204 268h1v1h-1zM207 268h1v1h-1zM210 268h1v1h-1zM213 268h1v1h-1zM216 268h1v1h-1zM219 268h1v1h-1zM222 268h1v1h-1zM225 268h1v1h-1zM228 268h1v1h-1zM231 268h1v1h-1zM234 268h1v1h-1zM237 268h1v1h-1zM240 268h1v1h-1zM243 268h1v1h-1zM246 268h1v1h-1zM249 268h1v1h-1zM252 268h1v1h-1zM255 268h1v1h-1zM258 268h1v1h-1zM261 268h1v1h-1zM264 268h1v1h-1zM267 268h1v1h-1zM270 268h1v1h-1zM273 268h1v1h-1zM276 268h1v1h-1zM279 268h1v1h-1zM282 268h1v1h-1zM285 268h1v1h-1zM288 268h1v1h-1zM291 268h1v1h-1zM294 268h1v1h-1zM297 268h1v1h-1zM300 268h1v1h-1zM303 268h1v1h-1zM306 268h1v1h-1zM309 268h1v1h-1zM312 268h1v1h-1zM315 268h1v1h-1zM318 268h1v1h-1zM321 268h1v1h-1zM324 268h1v1h-1zM327 268h1v1h-1zM330 268h1v1h-1zM333 268h1v1h-1zM336 268h1v1h-1zM339 268h1v1h-1zM342 268h1v1h-1zM345 268h1v1h-1zM348 268h1v1h-1zM351 268h1v1h-1zM354 268h1v1h-1zM357 268h1v1h-1zM360 268h1v1h-1zM363 268h1v1h-1zM366 268h1v1h-1zM369 268h1v1h-1zM372 268h1v1h-1zM375 268h1v1h-1zM378 268h1v1h-1zM381 268h1v1h-1zM384 268h1v1h-1zM387 268h1v1h-1zM390 268h1v1h-1zM393 268h1v1h-1zM396 268h1v1h-1zM399 268h1v1h-1zM402 268h1v1h-1zM405 268h1v1h-1zM408 268h1v1h-1zM411 268h1v1h-1zM414 268h1v1h-1zM417 268h1v1h-1zM420 268h1v1h-1zM423 268h1v1h-1zM426 268h1v1h-1zM429 268h1v1h-1zM432 268h1v1h-1zM435 268h1v1h-1zM438 268h1v1h-1zM441 268h1v1h-1zM444 268h1v1h-1zM447 268h1v1h-1zM450 268h1v1h-1zM453 268h1v1h-1zM456 268h1v1h-1zM459 268h1v1h-1zM462 268h1v1h-1zM465 268h1v1h-1zM468 268h1v1h-1zM471 268h1v1h-1zM474 268h1v1h-1zM477 268h1v1h-1zM480 268h1v1h-1zM483 268h1v1h-1zM486 268h1v1h-1zM489 268h1v1h-1zM492 268h1v1h-1zM495 268h1v1h-1zM498 268h1v1h-1zM501 268h1v1h-1zM504 268h1v1h-1zM507 268h1v1h-1zM510 268h1v1h-1zM513 268h1v1h-1zM516 268h1v1h-1zM519 268h1v1h-1zM522 268h1v1h-1zM525 268h1v1h-1zM528 268h1v1h-1zM531 268h1v1h-1zM534 268h1v1h-1zM537 268h1v1h-1zM540 268h1v1h-1zM543 268h1v1h-1zM546 268h1v1h-1zM549 268h1v1h-1zM552 268h1v1h-1zM555 268h1v1h-1zM558 268h1v1h-1zM561 268h1v1h-1zM564 268h1v1h-1zM567 268h1v1h-1zM570 268h1v1h-1zM573 268h1v1h-1zM576 268h1v1h-1zM579 268h1v1h-1zM582 268h1v1h-1zM585 268h1v1h-1zM588 268h1v1h-1zM591 268h1v1h-1zM594 268h1v1h-1zM597 268h1v1h-1zM600 268h1v1h-1zM603 268h1v1h-1zM606 268h1v1h-1zM609 268h1v1h-1zM612 268h1v1h-1zM615 268h1v1h-1zM618 268h1v1h-1zM621 268h1v1h-1zM624 268h1v1h-1zM627 268h1v1h-1zM630 268h1v1h-1zM633 268h1v1h-1zM636 268h1v1h-1zM639 268h1v1h-1zM642 268h1v1h-1zM645 268h1v1h-1zM648 268h1v1h-1zM651 268h1v1h-1zM654 268h1v1h-1zM657 268h1v1h-1zM660 268h1v1h-1zM663 268h1v1h-1zM666 268h1v1h-1zM669 268h1v1h-1zM672 268h1v1h-1zM675 268h1v1h-1zM678 268h1v1h-1zM681 268h1v1h-1zM684 268h1v1h-1zM687 268h1v1h-1zM690 268h1v1h-1zM693 268h1v1h-1zM696 268h1v1h-1zM699 268h1v1h-1zM702 268h1v1h-1zM705 268h1v1h-1zM708 268h1v1h-1zM711 268h1v1h-1zM714 268h1v1h-1zM717 268h1v1h-1zM720 268h1v1h-1zM723 268h1v1h-1zM726 268h1v1h-1zM729 268h1v1h-1zM732 268h1v1h-1zM735 268h1v1h-1zM738 268h1v1h-1zM741 268h1v1h-1zM744 268h1v1h-1zM747 268h1v1h-1zM750 268h1v1h-1zM45 280h1v1h-1zM48 280h1v1h-1zM51 280h1v1h-1zM54 280h1v1h-1zM57 280h1v1h-1zM60 280h1v1h-1zM63 280h1v1h-1zM66 280h1v1h-1zM69 280h1v1h-1zM72 280h1v1h-1zM75 280h1v1h-1zM78 280h1v1h-1zM81 280h1v1h-1zM84 280h1v1h-1zM87 280h1v1h-1zM90 280h1v1h-1zM93 280h1v1h-1zM96 280h1v1h-1zM99 280h1v1h-1zM102 280h1v1h-1zM105 280h1v1h-1zM108 280h1v1h-1zM111 280h1v1h-1zM114 280h1v1h-1zM117 280h1v1h-1zM120 280h1v1h-1zM123 280h1v1h-1zM126 280h1v1h-1zM129 280h1v1h-1zM132 280h1v1h-1zM135 280h1v1h-1zM138 280h1v1h-1zM141 280h1v1h-1zM144 280h1v1h-1zM147 280h1v1h-1zM150 280h1v1h-1zM153 280h1v1h-1zM156 280h1v1h-1zM159 280h1v1h-1zM162 280h1v1h-1zM165 280h1v1h-1zM168 280h1v1h-1zM171 280h1v1h-1zM174 280h1v1h-1zM177 280h1v1h-1zM180 280h1v1h-1zM183 280h1v1h-1zM186 280h1v1h-1zM189 280h1v1h-1zM192 280h1v1h-1zM195 280h1v1h-1zM198 280h1v1h-1zM201 280h1v1h-1zM204 280h1v1h-1zM207 280h1v1h-1zM210 280h1v1h-1zM213 280h1v1h-1zM216 280h1v1h-1zM219 280h1v1h-1zM222 280h1v1h-1zM225 280h1v1h-1zM228 280h1v1h-1zM231 280h1v1h-1zM234 280h1v1h-1zM237 280h1v1h-1zM240 280h1v1h-1zM243 280h1v1h-1zM246 280h1v1h-1zM249 280h1v1h-1zM252 280h1v1h-1zM255 280h1v1h-1zM258 280h1v1h-1zM261 280h1v1h-1zM264 280h1v1h-1zM267 280h1v1h-1zM270 280h1v1h-1zM273 280h1v1h-1zM276 280h1v1h-1zM279 280h1v1h-1zM282 280h1v1h-1zM285 280h1v1h-1zM288 280h1v1h-1zM291 280h1v1h-1zM294 280h1v1h-1zM297 280h1v1h-1zM300 280h1v1h-1zM303 280h1v1h-1zM306 280h1v1h-1zM309 280h1v1h-1zM312 280h1v1h-1zM315 280h1v1h-1zM318 280h1v1h-1zM321 280h1v1h-1zM324 280h1v1h-1zM327 280h1v1h-1zM330 280h1v1h-1zM333 280h1v1h-1zM336 280h1v1h-1zM339 280h1v1h-1zM342 280h1v1h-1zM345 280h1v1h-1zM348 280h1v1h-1zM351 280h1v1h-1zM354 280h1v1h-1zM357 280h1v1h-1zM360 280h1v1h-1zM363 280h1v1h-1zM366 280h1v1h-1zM369 280h1v1h-1zM372 280h1v1h-1zM375 280h1v1h-1zM378 280h1v1h-1zM381 280h1v1h-1zM384 280h1v1h-1zM387 280h1v1h-1zM390 280h1v1h-1zM393 280h1v1h-1zM396 280h1v1h-1zM399 280h1v1h-1zM402 280h1v1h-1zM405 280h1v1h-1zM408 280h1v1h-1zM411 280h1v1h-1zM414 280h1v1h-1zM417 280h1v1h-1zM420 280h1v1h-1zM423 280h1v1h-1zM426 280h1v1h-1zM429 280h1v1h-1zM432 280h1v1h-1zM435 280h1v1h-1zM438 280h1v1h-1zM441 280h1v1h-1zM444 280h1v1h-1zM447 280h1v1h-1zM450 280h1v1h-1zM453 280h1v1h-1zM456 280h1v1h-1zM459 280h1v1h-1zM462 280h1v1h-1zM465 280h1v1h-1zM468 280h1v1h-1zM471 280h1v1h-1zM474 280h1v1h-1zM477 280h1v1h-1zM480 280h1v1h-1zM483 280h1v1h-1zM486 280h1v1h-1zM489 280h1v1h-1zM492 280h1v1h-1zM495 280h1v1h-1zM498 280h1v1h-1zM501 280h1v1h-1zM504 280h1v1h-1zM507 280h1v1h-1zM510 280h1v1h-1zM513 280h1v1h-1zM516 280h1v1h-1zM519 280h1v1h-1zM522 280h1v1h-1zM525 280h1v1h-1zM528 280h1v1h-1zM531 280h1v1h-1zM534 280h1v1h-1zM537 280h1v1h-1zM540 280h1v1h-1zM543 280h1v1h-1zM546 280h1v1h-1zM549 280h1v1h-1zM552 280h1v1h-1zM555 280h1v1h-1zM558 280h1v1h-1zM561 280h1v1h-1zM564 280h1v1h-1zM567 280h1v1h-1zM570 280h1v1h-1zM573 280h1v1h-1zM576 280h1v1h-1zM579 280h1v1h-1zM582 280h1v1h-1zM585 280h1v1h-1zM588 280h1v1h-1zM591 280h1v1h-1zM594 280h1v1h-1zM597 280h1v1h-1zM600 280h1v1h-1zM603 280h1v1h-1zM606 280h1v1h-1zM609 280h1v1h-1zM612 280h1v1h-1zM615 280h1v1h-1zM618 280h1v1h-1zM621 280h1v1h-1zM624 280h1v1h-1zM627 280h1v1h-1zM630 280h1v1h-1zM633 280h1v1h-1zM636 280h1v1h-1zM639 280h1v1h-1zM642 280h1v1h-1zM645 280h1v1h-1zM648 280h1v1h-1zM651 280h1v1h-1zM654 280h1v1h-1zM657 280h1v1h-1zM660 280h1v1h-1zM663 280h1v1h-1zM666 280h1v1h-1zM669 280h1v1h-1zM672 280h1v1h-1zM675 280h1v1h-1zM678 280h1v1h-1zM681 280h1v1h-1zM684 280h1v1h-1zM687 280h1v1h-1zM690 280h1v1h-1zM693 280h1v1h-1zM696 280h1v1h-1zM699 280h1v1h-1zM702 280h1v1h-1zM705 280h1v1h-1zM708 280h1v1h-1zM711 280h1v1h-1zM714 280h1v1h-1zM717 280h1v1h-1zM720 280h1v1h-1zM723 280h1v1h-1zM726 280h1v1h-1zM729 280h1v1h-1zM732 280h1v1h-1zM735 280h1v1h-1zM738 280h1v1h-1zM741 280h1v1h-1zM744 280h1v1h-1zM747 280h1v1h-1zM750 280h1v1h-1zM45 289h1v1h-1zM48 289h1v1h-1zM51 289h1v1h-1zM54 289h1v1h-1zM57 289h1v1h-1zM60 289h1v1h-1zM63 289h1v1h-1zM66 289h1v1h-1zM69 289h1v1h-1zM72 289h1v1h-1zM75 289h1v1h-1zM78 289h1v1h-1zM81 289h1v1h-1zM84 289h1v1h-1zM87 289h1v1h-1zM90 289h1v1h-1zM93 289h1v1h-1zM96 289h1v1h-1zM99 289h1v1h-1zM102 289h1v1h-1zM105 289h1v1h-1zM108 289h1v1h-1zM111 289h1v1h-1zM114 289h1v1h-1zM117 289h1v1h-1zM120 289h1v1h-1zM123 289h1v1h-1zM126 289h1v1h-1zM129 289h1v1h-1zM132 289h1v1h-1zM135 289h1v1h-1zM138 289h1v1h-1zM141 289h1v1h-1zM144 289h1v1h-1zM147 289h1v1h-1zM150 289h1v1h-1zM153 289h1v1h-1zM156 289h1v1h-1zM159 289h1v1h-1zM162 289h1v1h-1zM165 289h1v1h-1zM168 289h1v1h-1zM171 289h1v1h-1zM174 289h1v1h-1zM177 289h1v1h-1zM180 289h1v1h-1zM183 289h1v1h-1zM186 289h1v1h-1zM189 289h1v1h-1zM192 289h1v1h-1zM195 289h1v1h-1zM198 289h1v1h-1zM201 289h1v1h-1zM204 289h1v1h-1zM207 289h1v1h-1zM210 289h1v1h-1zM213 289h1v1h-1zM216 289h1v1h-1zM219 289h1v1h-1zM222 289h1v1h-1zM225 289h1v1h-1zM228 289h1v1h-1zM231 289h1v1h-1zM234 289h1v1h-1zM237 289h1v1h-1zM240 289h1v1h-1zM243 289h1v1h-1zM246 289h1v1h-1zM249 289h1v1h-1zM252 289h1v1h-1zM255 289h1v1h-1zM258 289h1v1h-1zM261 289h1v1h-1zM264 289h1v1h-1zM267 289h1v1h-1zM270 289h1v1h-1zM273 289h1v1h-1zM276 289h1v1h-1zM279 289h1v1h-1zM282 289h1v1h-1zM285 289h1v1h-1zM288 289h1v1h-1zM291 289h1v1h-1zM294 289h1v1h-1zM297 289h1v1h-1zM300 289h1v1h-1zM303 289h1v1h-1zM306 289h1v1h-1zM309 289h1v1h-1zM312 289h1v1h-1zM315 289h1v1h-1zM318 289h1v1h-1zM321 289h1v1h-1zM324 289h1v1h-1zM327 289h1v1h-1zM330 289h1v1h-1zM333 289h1v1h-1zM336 289h1v1h-1zM339 289h1v1h-1zM342 289h1v1h-1zM345 289h1v1h-1zM348 289h1v1h-1zM351 289h1v1h-1zM354 289h1v1h-1zM357 289h1v1h-1zM360 289h1v1h-1zM363 289h1v1h-1zM366 289h1v1h-1zM369 289h1v1h-1zM372 289h1v1h-1zM375 289h1v1h-1zM378 289h1v1h-1zM381 289h1v1h-1zM384 289h1v1h-1zM387 289h1v1h-1zM390 289h1v1h-1zM393 289h1v1h-1zM396 289h1v1h-1zM399 289h1v1h-1zM402 289h1v1h-1zM405 289h1v1h-1zM408 289h1v1h-1zM411 289h1v1h-1zM414 289h1v1h-1zM417 289h1v1h-1zM420 289h1v1h-1zM423 289h1v1h-1zM426 289h1v1h-1zM429 289h1v1h-1zM432 289h1v1h-1zM435 289h1v1h-1zM438 289h1v1h-1zM441 289h1v1h-1zM444 289h1v1h-1zM447 289h1v1h-1zM450 289h1v1h-1zM453 289h1v1h-1zM456 289h1v1h-1zM459 289h1v1h-1zM462 289h1v1h-1zM465 289h1v1h-1zM468 289h1v1h-1zM471 289h1v1h-1zM474 289h1v1h-1zM477 289h1v1h-1zM480 289h1v1h-1zM483 289h1v1h-1zM486 289h1v1h-1zM489 289h1v1h-1zM492 289h1v1h-1zM495 289h1v1h-1zM498 289h1v1h-1zM501 289h1v1h-1zM504 289h1v1h-1zM507 289h1v1h-1zM510 289h1v1h-1zM513 289h1v1h-1zM516 289h1v1h-1zM519 289h1v1h-1zM522 289h1v1h-1zM525 289h1v1h-1zM528 289h1v1h-1zM531 289h1v1h-1zM534 289h1v1h-1zM537 289h1v1h-1zM540 289h1v1h-1zM543 289h1v1h-1zM546 289h1v1h-1zM549 289h1v1h-1zM552 289h1v1h-1zM555 289h1v1h-1zM558 289h1v1h-1zM561 289h1v1h-1zM564 289h1v1h-1zM567 289h1v1h-1zM570 289h1v1h-1zM573 289h1v1h-1zM576 289h1v1h-1zM579 289h1v1h-1zM582 289h1v1h-1zM585 289h1v1h-1zM588 289h1v1h-1zM591 289h1v1h-1zM594 289h1v1h-1zM597 289h1v1h-1zM600 289h1v1h-1zM603 289h1v1h-1zM606 289h1v1h-1zM609 289h1v1h-1zM612 289h1v1h-1zM615 289h1v1h-1zM618 289h1v1h-1zM621 289h1v1h-1zM624 289h1v1h-1zM627 289h1v1h-1zM630 289h1v1h-1zM633 289h1v1h-1zM636 289h1v1h-1zM639 289h1v1h-1zM642 289h1v1h-1zM645 289h1v1h-1zM648 289h1v1h-1zM651 289h1v1h-1zM654 289h1v1h-1zM657 289h1v1h-1zM660 289h1v1h-1zM663 289h1v1h-1zM666 289h1v1h-1zM669 289h1v1h-1zM672 289h1v1h-1zM675 289h1v1h-1zM678 289h1v1h-1zM681 289h1v1h-1zM684 289h1v1h-1zM687 289h1v1h-1zM690 289h1v1h-1zM693 289h1v1h-1zM696 289h1v1h-1zM699 289h1v1h-1zM702 289h1v1h-1zM705 289h1v1h-1zM708 289h1v1h-1zM711 289h1v1h-1zM714 289h1v1h-1zM717 289h1v1h-1zM720 289h1v1h-1zM723 289h1v1h-1zM726 289h1v1h-1zM729 289h1v1h-1zM732 289h1v1h-1zM735 289h1v1h-1zM738 289h1v1h-1zM741 289h1v1h-1zM744 289h1v1h-1zM747 289h1v1h-1zM750 289h1v1h-1zM45 296h1v1h-1zM48 296h1v1h-1zM51 296h1v1h-1zM54 296h1v1h-1zM57 296h1v1h-1zM60 296h1v1h-1zM63 296h1v1h-1zM66 296h1v1h-1zM69 296h1v1h-1zM72 296h1v1h-1zM75 296h1v1h-1zM78 296h1v1h-1zM81 296h1v1h-1zM84 296h1v1h-1zM87 296h1v1h-1zM90 296h1v1h-1zM93 296h1v1h-1zM96 296h1v1h-1zM99 296h1v1h-1zM102 296h1v1h-1zM105 296h1v1h-1zM108 296h1v1h-1zM111 296h1v1h-1zM114 296h1v1h-1zM117 296h1v1h-1zM120 296h1v1h-1zM123 296h1v1h-1zM126 296h1v1h-1zM129 296h1v1h-1zM132 296h1v1h-1zM135 296h1v1h-1zM138 296h1v1h-1zM141 296h1v1h-1zM144 296h1v1h-1zM147 296h1v1h-1zM150 296h1v1h-1zM153 296h1v1h-1zM156 296h1v1h-1zM159 296h1v1h-1zM162 296h1v1h-1zM165 296h1v1h-1zM168 296h1v1h-1zM171 296h1v1h-1zM174 296h1v1h-1zM177 296h1v1h-1zM180 296h1v1h-1zM183 296h1v1h-1zM186 296h1v1h-1zM189 296h1v1h-1zM192 296h1v1h-1zM195 296h1v1h-1zM198 296h1v1h-1zM201 296h1v1h-1zM204 296h1v1h-1zM207 296h1v1h-1zM210 296h1v1h-1zM213 296h1v1h-1zM216 296h1v1h-1zM219 296h1v1h-1zM222 296h1v1h-1zM225 296h1v1h-1zM228 296h1v1h-1zM231 296h1v1h-1zM234 296h1v1h-1zM237 296h1v1h-1zM240 296h1v1h-1zM243 296h1v1h-1zM246 296h1v1h-1zM249 296h1v1h-1zM252 296h1v1h-1zM255 296h1v1h-1zM258 296h1v1h-1zM261 296h1v1h-1zM264 296h1v1h-1zM267 296h1v1h-1zM270 296h1v1h-1zM273 296h1v1h-1zM276 296h1v1h-1zM279 296h1v1h-1zM282 296h1v1h-1zM285 296h1v1h-1zM288 296h1v1h-1zM291 296h1v1h-1zM294 296h1v1h-1zM297 296h1v1h-1zM300 296h1v1h-1zM303 296h1v1h-1zM306 296h1v1h-1zM309 296h1v1h-1zM312 296h1v1h-1zM315 296h1v1h-1zM318 296h1v1h-1zM321 296h1v1h-1zM324 296h1v1h-1zM327 296h1v1h-1zM330 296h1v1h-1zM333 296h1v1h-1zM336 296h1v1h-1zM339 296h1v1h-1zM342 296h1v1h-1zM345 296h1v1h-1zM348 296h1v1h-1zM351 296h1v1h-1zM354 296h1v1h-1zM357 296h1v1h-1zM360 296h1v1h-1zM363 296h1v1h-1zM366 296h1v1h-1zM369 296h1v1h-1zM372 296h1v1h-1zM375 296h1v1h-1zM378 296h1v1h-1zM381 296h1v1h-1zM384 296h1v1h-1zM387 296h1v1h-1zM390 296h1v1h-1zM393 296h1v1h-1zM396 296h1v1h-1zM399 296h1v1h-1zM402 296h1v1h-1zM405 296h1v1h-1zM408 296h1v1h-1zM411 296h1v1h-1zM414 296h1v1h-1zM417 296h1v1h-1zM420 296h1v1h-1zM423 296h1v1h-1zM426 296h1v1h-1zM429 296h1v1h-1zM432 296h1v1h-1zM435 296h1v1h-1zM438 296h1v1h-1zM441 296h1v1h-1zM444 296h1v1h-1zM447 296h1v1h-1zM450 296h1v1h-1zM453 296h1v1h-1zM456 296h1v1h-1zM459 296h1v1h-1zM462 296h1v1h-1zM465 296h1v1h-1zM468 296h1v1h-1zM471 296h1v1h-1zM474 296h1v1h-1zM477 296h1v1h-1zM480 296h1v1h-1zM483 296h1v1h-1zM486 296h1v1h-1zM489 296h1v1h-1zM492 296h1v1h-1zM495 296h1v1h-1zM498 296h1v1h-1zM501 296h1v1h-1zM504 296h1v1h-1zM507 296h1v1h-1zM510 296h1v1h-1zM513 296h1v1h-1zM516 296h1v1h-1zM519 296h1v1h-1zM522 296h1v1h-1zM525 296h1v1h-1zM528 296h1v1h-1zM531 296h1v1h-1zM534 296h1v1h-1zM537 296h1v1h-1zM540 296h1v1h-1zM543 296h1v1h-1zM546 296h1v1h-1zM549 296h1v1h-1zM552 296h1v1h-1zM555 296h1v1h-1zM558 296h1v1h-1zM561 296h1v1h-1zM564 296h1v1h-1zM567 296h1v1h-1zM570 296h1v1h-1zM573 296h1v1h-1zM576 296h1v1h-1zM579 296h1v1h-1zM582 296h1v1h-1zM585 296h1v1h-1zM588 296h1v1h-1zM591 296h1v1h-1zM594 296h1v1h-1zM597 296h1v1h-1zM600 296h1v1h-1zM603 296h1v1h-1zM606 296h1v1h-1zM609 296h1v1h-1zM612 296h1v1h-1zM615 296h1v1h-1zM618 296h1v1h-1zM621 296h1v1h-1zM624 296h1v1h-1zM627 296h1v1h-1zM630 296h1v1h-1zM633 296h1v1h-1zM636 296h1v1h-1zM639 296h1v1h-1zM642 296h1v1h-1zM645 296h1v1h-1zM648 296h1v1h-1zM651 296h1v1h-1zM654 296h1v1h-1zM657 296h1v1h-1zM660 296h1v1h-1zM663 296h1v1h-1zM666 296h1v1h-1zM669 296h1v1h-1zM672 296h1v1h-1zM675 296h1v1h-1zM678 296h1v1h-1zM681 296h1v1h-1zM684 296h1v1h-1zM687 296h1v1h-1zM690 296h1v1h-1zM693 296h1v1h-1zM696 296h1v1h-1zM699 296h1v1h-1zM702 296h1v1h-1zM705 296h1v1h-1zM708 296h1v1h-1zM711 296h1v1h-1zM714 296h1v1h-1zM717 296h1v1h-1zM720 296h1v1h-1zM723 296h1v1h-1zM726 296h1v1h-1zM729 296h1v1h-1zM732 296h1v1h-1zM735 296h1v1h-1zM738 296h1v1h-1zM741 296h1v1h-1zM744 296h1v1h-1zM747 296h1v1h-1zM750 296h1v1h-1zM45 309h1v1h-1zM48 309h1v1h-1zM51 309h1v1h-1zM54 309h1v1h-1zM57 309h1v1h-1zM60 309h1v1h-1zM63 309h1v1h-1zM66 309h1v1h-1zM69 309h1v1h-1zM72 309h1v1h-1zM75 309h1v1h-1zM78 309h1v1h-1zM81 309h1v1h-1zM84 309h1v1h-1zM87 309h1v1h-1zM90 309h1v1h-1zM93 309h1v1h-1zM96 309h1v1h-1zM99 309h1v1h-1zM102 309h1v1h-1zM105 309h1v1h-1zM108 309h1v1h-1zM111 309h1v1h-1zM114 309h1v1h-1zM117 309h1v1h-1zM120 309h1v1h-1zM123 309h1v1h-1zM126 309h1v1h-1zM129 309h1v1h-1zM132 309h1v1h-1zM135 309h1v1h-1zM138 309h1v1h-1zM141 309h1v1h-1zM144 309h1v1h-1zM147 309h1v1h-1zM150 309h1v1h-1zM153 309h1v1h-1zM156 309h1v1h-1zM159 309h1v1h-1zM162 309h1v1h-1zM165 309h1v1h-1zM168 309h1v1h-1zM171 309h1v1h-1zM174 309h1v1h-1zM177 309h1v1h-1zM180 309h1v1h-1zM183 309h1v1h-1zM186 309h1v1h-1zM189 309h1v1h-1zM192 309h1v1h-1zM195 309h1v1h-1zM198 309h1v1h-1zM201 309h1v1h-1zM204 309h1v1h-1zM207 309h1v1h-1zM210 309h1v1h-1zM213 309h1v1h-1zM216 309h1v1h-1zM219 309h1v1h-1zM222 309h1v1h-1zM225 309h1v1h-1zM228 309h1v1h-1zM231 309h1v1h-1zM234 309h1v1h-1zM237 309h1v1h-1zM240 309h1v1h-1zM243 309h1v1h-1zM246 309h1v1h-1zM249 309h1v1h-1zM252 309h1v1h-1zM255 309h1v1h-1zM258 309h1v1h-1zM261 309h1v1h-1zM264 309h1v1h-1zM267 309h1v1h-1zM270 309h1v1h-1zM273 309h1v1h-1zM276 309h1v1h-1zM279 309h1v1h-1zM282 309h1v1h-1zM285 309h1v1h-1zM288 309h1v1h-1zM291 309h1v1h-1zM294 309h1v1h-1zM297 309h1v1h-1zM300 309h1v1h-1zM303 309h1v1h-1zM306 309h1v1h-1zM309 309h1v1h-1zM312 309h1v1h-1zM315 309h1v1h-1zM318 309h1v1h-1zM321 309h1v1h-1zM324 309h1v1h-1zM327 309h1v1h-1zM330 309h1v1h-1zM333 309h1v1h-1zM336 309h1v1h-1zM339 309h1v1h-1zM342 309h1v1h-1zM345 309h1v1h-1zM348 309h1v1h-1zM351 309h1v1h-1zM354 309h1v1h-1zM357 309h1v1h-1zM360 309h1v1h-1zM363 309h1v1h-1zM366 309h1v1h-1zM369 309h1v1h-1zM372 309h1v1h-1zM375 309h1v1h-1zM378 309h1v1h-1zM381 309h1v1h-1zM384 309h1v1h-1zM387 309h1v1h-1zM390 309h1v1h-1zM393 309h1v1h-1zM396 309h1v1h-1zM399 309h1v1h-1zM402 309h1v1h-1zM405 309h1v1h-1zM408 309h1v1h-1zM411 309h1v1h-1zM414 309h1v1h-1zM417 309h1v1h-1zM420 309h1v1h-1zM423 309h1v1h-1zM426 309h1v1h-1zM429 309h1v1h-1zM432 309h1v1h-1zM435 309h1v1h-1zM438 309h1v1h-1zM441 309h1v1h-1zM444 309h1v1h-1zM447 309h1v1h-1zM450 309h1v1h-1zM453 309h1v1h-1zM456 309h1v1h-1zM459 309h1v1h-1zM462 309h1v1h-1zM465 309h1v1h-1zM468 309h1v1h-1zM471 309h1v1h-1zM474 309h1v1h-1zM477 309h1v1h-1zM480 309h1v1h-1zM483 309h1v1h-1zM486 309h1v1h-1zM489 309h1v1h-1zM492 309h1v1h-1zM495 309h1v1h-1zM498 309h1v1h-1zM501 309h1v1h-1zM504 309h1v1h-1zM507 309h1v1h-1zM510 309h1v1h-1zM513 309h1v1h-1zM516 309h1v1h-1zM519 309h1v1h-1zM522 309h1v1h-1zM525 309h1v1h-1zM528 309h1v1h-1zM531 309h1v1h-1zM534 309h1v1h-1zM537 309h1v1h-1zM540 309h1v1h-1zM543 309h1v1h-1zM546 309h1v1h-1zM549 309h1v1h-1zM552 309h1v1h-1zM555 309h1v1h-1zM558 309h1v1h-1zM561 309h1v1h-1zM564 309h1v1h-1zM567 309h1v1h-1zM570 309h1v1h-1zM573 309h1v1h-1zM576 309h1v1h-1zM579 309h1v1h-1zM582 309h1v1h-1zM585 309h1v1h-1zM588 309h1v1h-1zM591 309h1v1h-1zM594 309h1v1h-1zM597 309h1v1h-1zM600 309h1v1h-1zM603 309h1v1h-1zM606 309h1v1h-1zM609 309h1v1h-1zM612 309h1v1h-1zM615 309h1v1h-1zM618 309h1v1h-1zM621 309h1v1h-1zM624 309h1v1h-1zM627 309h1v1h-1zM630 309h1v1h-1zM633 309h1v1h-1zM636 309h1v1h-1zM639 309h1v1h-1zM642 309h1v1h-1zM645 309h1v1h-1zM648 309h1v1h-1zM651 309h1v1h-1zM654 309h1v1h-1zM657 309h1v1h-1zM660 309h1v1h-1zM663 309h1v1h-1zM666 309h1v1h-1zM669 309h1v1h-1zM672 309h1v1h-1zM675 309h1v1h-1zM678 309h1v1h-1zM681 309h1v1h-1zM684 309h1v1h-1zM687 309h1v1h-1zM690 309h1v1h-1zM693 309h1v1h-1zM696 309h1v1h-1zM699 309h1v1h-1zM702 309h1v1h-1zM705 309h1v1h-1zM708 309h1v1h-1zM711 309h1v1h-1zM714 309h1v1h-1zM717 309h1v1h-1zM720 309h1v1h-1zM723 309h1v1h-1zM726 309h1v1h-1zM729 309h1v1h-1zM732 309h1v1h-1zM735 309h1v1h-1zM738 309h1v1h-1zM741 309h1v1h-1zM744 309h1v1h-1zM747 309h1v1h-1zM750 309h1v1h-1zM115 189h1v1h-1zM115 192h1v1h-1zM115 195h1v1h-1zM115 198h1v1h-1zM115 201h1v1h-1zM115 204h1v1h-1zM115 207h1v1h-1zM115 210h1v1h-1zM115 213h1v1h-1zM115 216h1v1h-1zM115 219h1v1h-1zM115 222h1v1h-1zM115 225h1v1h-1zM115 228h1v1h-1zM115 231h1v1h-1zM115 234h1v1h-1zM115 237h1v1h-1zM115 240h1v1h-1zM115 243h1v1h-1zM115 246h1v1h-1zM115 249h1v1h-1zM115 252h1v1h-1zM115 255h1v1h-1zM115 258h1v1h-1zM115 261h1v1h-1zM115 264h1v1h-1zM115 267h1v1h-1zM115 270h1v1h-1zM115 273h1v1h-1zM115 276h1v1h-1zM115 279h1v1h-1zM115 282h1v1h-1zM115 285h1v1h-1zM115 288h1v1h-1zM115 291h1v1h-1zM115 294h1v1h-1zM115 297h1v1h-1zM115 300h1v1h-1zM115 303h1v1h-1zM115 306h1v1h-1zM115 309h1v1h-1zM115 312h1v1h-1zM115 315h1v1h-1zM115 318h1v1h-1zM186 189h1v1h-1zM186 192h1v1h-1zM186 195h1v1h-1zM186 198h1v1h-1zM186 201h1v1h-1zM186 204h1v1h-1zM186 207h1v1h-1zM186 210h1v1h-1zM186 213h1v1h-1zM186 216h1v1h-1zM186 219h1v1h-1zM186 222h1v1h-1zM186 225h1v1h-1zM186 228h1v1h-1zM186 231h1v1h-1zM186 234h1v1h-1zM186 237h1v1h-1zM186 240h1v1h-1zM186 243h1v1h-1zM186 246h1v1h-1zM186 249h1v1h-1zM186 252h1v1h-1zM186 255h1v1h-1zM186 258h1v1h-1zM186 261h1v1h-1zM186 264h1v1h-1zM186 267h1v1h-1zM186 270h1v1h-1zM186 273h1v1h-1zM186 276h1v1h-1zM186 279h1v1h-1zM186 282h1v1h-1zM186 285h1v1h-1zM186 288h1v1h-1zM186 291h1v1h-1zM186 294h1v1h-1zM186 297h1v1h-1zM186 300h1v1h-1zM186 303h1v1h-1zM186 306h1v1h-1zM186 309h1v1h-1zM186 312h1v1h-1zM186 315h1v1h-1zM186 318h1v1h-1zM257 189h1v1h-1zM257 192h1v1h-1zM257 195h1v1h-1zM257 198h1v1h-1zM257 201h1v1h-1zM257 204h1v1h-1zM257 207h1v1h-1zM257 210h1v1h-1zM257 213h1v1h-1zM257 216h1v1h-1zM257 219h1v1h-1zM257 222h1v1h-1zM257 225h1v1h-1zM257 228h1v1h-1zM257 231h1v1h-1zM257 234h1v1h-1zM257 237h1v1h-1zM257 240h1v1h-1zM257 243h1v1h-1zM257 246h1v1h-1zM257 249h1v1h-1zM257 252h1v1h-1zM257 255h1v1h-1zM257 258h1v1h-1zM257 261h1v1h-1zM257 264h1v1h-1zM257 267h1v1h-1zM257 270h1v1h-1zM257 273h1v1h-1zM257 276h1v1h-1zM257 279h1v1h-1zM257 282h1v1h-1zM257 285h1v1h-1zM257 288h1v1h-1zM257 291h1v1h-1zM257 294h1v1h-1zM257 297h1v1h-1zM257 300h1v1h-1zM257 303h1v1h-1zM257 306h1v1h-1zM257 309h1v1h-1zM257 312h1v1h-1zM257 315h1v1h-1zM257 318h1v1h-1zM328 189h1v1h-1zM328 192h1v1h-1zM328 195h1v1h-1zM328 198h1v1h-1zM328 201h1v1h-1zM328 204h1v1h-1zM328 207h1v1h-1zM328 210h1v1h-1zM328 213h1v1h-1zM328 216h1v1h-1zM328 219h1v1h-1zM328 222h1v1h-1zM328 225h1v1h-1zM328 228h1v1h-1zM328 231h1v1h-1zM328 234h1v1h-1zM328 237h1v1h-1zM328 240h1v1h-1zM328 243h1v1h-1zM328 246h1v1h-1zM328 249h1v1h-1zM328 252h1v1h-1zM328 255h1v1h-1zM328 258h1v1h-1zM328 261h1v1h-1zM328 264h1v1h-1zM328 267h1v1h-1zM328 270h1v1h-1zM328 273h1v1h-1zM328 276h1v1h-1zM328 279h1v1h-1zM328 282h1v1h-1zM328 285h1v1h-1zM328 288h1v1h-1zM328 291h1v1h-1zM328 294h1v1h-1zM328 297h1v1h-1zM328 300h1v1h-1zM328 303h1v1h-1zM328 306h1v1h-1zM328 309h1v1h-1zM328 312h1v1h-1zM328 315h1v1h-1zM328 318h1v1h-1zM399 189h1v1h-1zM399 192h1v1h-1zM399 195h1v1h-1zM399 198h1v1h-1zM399 201h1v1h-1zM399 204h1v1h-1zM399 207h1v1h-1zM399 210h1v1h-1zM399 213h1v1h-1zM399 216h1v1h-1zM399 219h1v1h-1zM399 222h1v1h-1zM399 225h1v1h-1zM399 228h1v1h-1zM399 231h1v1h-1zM399 234h1v1h-1zM399 237h1v1h-1zM399 240h1v1h-1zM399 243h1v1h-1zM399 246h1v1h-1zM399 249h1v1h-1zM399 252h1v1h-1zM399 255h1v1h-1zM399 258h1v1h-1zM399 261h1v1h-1zM399 264h1v1h-1zM399 267h1v1h-1zM399 270h1v1h-1zM399 273h1v1h-1zM399 276h1v1h-1zM399 279h1v1h-1zM399 282h1v1h-1zM399 285h1v1h-1zM399 288h1v1h-1zM399 291h1v1h-1zM399 294h1v1h-1zM399 297h1v1h-1zM399 300h1v1h-1zM399 303h1v1h-1zM399 306h1v1h-1zM399 309h1v1h-1zM399 312h1v1h-1zM399 315h1v1h-1zM399 318h1v1h-1zM470 189h1v1h-1zM470 192h1v1h-1zM470 195h1v1h-1zM470 198h1v1h-1zM470 201h1v1h-1zM470 204h1v1h-1zM470 207h1v1h-1zM470 210h1v1h-1zM470 213h1v1h-1zM470 216h1v1h-1zM470 219h1v1h-1zM470 222h1v1h-1zM470 225h1v1h-1zM470 228h1v1h-1zM470 231h1v1h-1zM470 234h1v1h-1zM470 237h1v1h-1zM470 240h1v1h-1zM470 243h1v1h-1zM470 246h1v1h-1zM470 249h1v1h-1zM470 252h1v1h-1zM470 255h1v1h-1zM470 258h1v1h-1zM470 261h1v1h-1zM470 264h1v1h-1zM470 267h1v1h-1zM470 270h1v1h-1zM470 273h1v1h-1zM470 276h1v1h-1zM470 279h1v1h-1zM470 282h1v1h-1zM470 285h1v1h-1zM470 288h1v1h-1zM470 291h1v1h-1zM470 294h1v1h-1zM470 297h1v1h-1zM470 300h1v1h-1zM470 303h1v1h-1zM470 306h1v1h-1zM470 309h1v1h-1zM470 312h1v1h-1zM470 315h1v1h-1zM470 318h1v1h-1zM541 189h1v1h-1zM541 192h1v1h-1zM541 195h1v1h-1zM541 198h1v1h-1zM541 201h1v1h-1zM541 204h1v1h-1zM541 207h1v1h-1zM541 210h1v1h-1zM541 213h1v1h-1zM541 216h1v1h-1zM541 219h1v1h-1zM541 222h1v1h-1zM541 225h1v1h-1zM541 228h1v1h-1zM541 231h1v1h-1zM541 234h1v1h-1zM541 237h1v1h-1zM541 240h1v1h-1zM541 243h1v1h-1zM541 246h1v1h-1zM541 249h1v1h-1zM541 252h1v1h-1zM541 255h1v1h-1zM541 258h1v1h-1zM541 261h1v1h-1zM541 264h1v1h-1zM541 267h1v1h-1zM541 270h1v1h-1zM541 273h1v1h-1zM541 276h1v1h-1zM541 279h1v1h-1zM541 282h1v1h-1zM541 285h1v1h-1zM541 288h1v1h-1zM541 291h1v1h-1zM541 294h1v1h-1zM541 297h1v1h-1zM541 300h1v1h-1zM541 303h1v1h-1zM541 306h1v1h-1zM541 309h1v1h-1zM541 312h1v1h-1zM541 315h1v1h-1zM541 318h1v1h-1zM612 189h1v1h-1zM612 192h1v1h-1zM612 195h1v1h-1zM612 198h1v1h-1zM612 201h1v1h-1zM612 204h1v1h-1zM612 207h1v1h-1zM612 210h1v1h-1zM612 213h1v1h-1zM612 216h1v1h-1zM612 219h1v1h-1zM612 222h1v1h-1zM612 225h1v1h-1zM612 228h1v1h-1zM612 231h1v1h-1zM612 234h1v1h-1zM612 237h1v1h-1zM612 240h1v1h-1zM612 243h1v1h-1zM612 246h1v1h-1zM612 249h1v1h-1zM612 252h1v1h-1zM612 255h1v1h-1zM612 258h1v1h-1zM612 261h1v1h-1zM612 264h1v1h-1zM612 267h1v1h-1zM612 270h1v1h-1zM612 273h1v1h-1zM612 276h1v1h-1zM612 279h1v1h-1zM612 282h1v1h-1zM612 285h1v1h-1zM612 288h1v1h-1zM612 291h1v1h-1zM612 294h1v1h-1zM612 297h1v1h-1zM612 300h1v1h-1zM612 303h1v1h-1zM612 306h1v1h-1zM612 309h1v1h-1zM612 312h1v1h-1zM612 315h1v1h-1zM612 318h1v1h-1zM683 189h1v1h-1zM683 192h1v1h-1zM683 195h1v1h-1zM683 198h1v1h-1zM683 201h1v1h-1zM683 204h1v1h-1zM683 207h1v1h-1zM683 210h1v1h-1zM683 213h1v1h-1zM683 216h1v1h-1zM683 219h1v1h-1zM683 222h1v1h-1zM683 225h1v1h-1zM683 228h1v1h-1zM683 231h1v1h-1zM683 234h1v1h-1zM683 237h1v1h-1zM683 240h1v1h-1zM683 243h1v1h-1zM683 246h1v1h-1zM683 249h1v1h-1zM683 252h1v1h-1zM683 255h1v1h-1zM683 258h1v1h-1zM683 261h1v1h-1zM683 264h1v1h-1zM683 267h1v1h-1zM683 270h1v1h-1zM683 273h1v1h-1zM683 276h1v1h-1zM683 279h1v1h-1zM683 282h1v1h-1zM683 285h1v1h-1zM683 288h1v1h-1zM683 291h1v1h-1zM683 294h1v1h-1zM683 297h1v1h-1zM683 300h1v1h-1zM683 303h1v1h-1zM683 306h1v1h-1zM683 309h1v1h-1zM683 312h1v1h-1zM683 315h1v1h-1zM683 318h1v1h-1z" fill="#808080"/>
<path d="M45 208h1v1h-1zM48 208h1v1h-1zM51 208h1v1h-1zM54 208h1v1h-1zM57 208h1v1h-1zM60 208h1v1h-1zM63 208h1v1h-1zM66 208h1v1h-1zM69 208h1v1h-1zM72 208h1v1h-1zM75 208h1v1h-1zM78 208h1v1h-1zM81 208h1v1h-1zM84 208h1v1h-1zM87 208h1v1h-1zM90 208h1v1h-1zM93 208h1v1h-1zM96 208h1v1h-1zM99 208h1v1h-1zM102 208h1v1h-1zM105 208h1v1h-1zM108 208h1v1h-1zM111 208h1v1h-1zM114 208h1v1h-1zM117 208h1v1h-1zM120 208h1v1h-1zM123 208h1v1h-1zM126 208h1v1h-1zM129 208h1v1h-1zM132 208h1v1h-1zM135 208h1v1h-1zM138 208h1v1h-1zM141 208h1v1h-1zM144 208h1v1h-1zM147 208h1v1h-1zM150 208h1v1h-1zM153 208h1v1h-1zM156 208h1v1h-1zM159 208h1v1h-1zM162 208h1v1h-1zM165 208h1v1h-1zM168 208h1v1h-1zM171 208h1v1h-1zM174 208h1v1h-1zM177 208h1v1h-1zM180 208h1v1h-1zM183 208h1v1h-1zM186 208h1v1h-1zM189 208h1v1h-1zM192 208h1v1h-1zM195 208h1v1h-1zM198 208h1v1h-1zM201 208h1v1h-1zM204 208h1v1h-1zM207 208h1v1h-1zM210 208h1v1h-1zM213 208h1v1h-1zM216 208h1v1h-1zM219 208h1v1h-1zM222 208h1v1h-1zM225 208h1v1h-1zM228 208h1v1h-1zM231 208h1v1h-1zM234 208h1v1h-1zM237 208h1v1h-1zM240 208h1v1h-1zM243 208h1v1h-1zM246 208h1v1h-1zM249 208h1v1h-1zM252 208h1v1h-1zM255 208h1v1h-1zM258 208h1v1h-1zM261 208h1v1h-1zM264 208h1v1h-1zM267 208h1v1h-1zM270 208h1v1h-1zM273 208h1v1h-1zM276 208h1v1h-1zM279 208h1v1h-1zM282 208h1v1h-1zM285 208h1v1h-1zM288 208h1v1h-1zM291 208h1v1h-1zM294 208h1v1h-1zM297 208h1v1h-1zM300 208h1v1h-1zM303 208h1v1h-1zM306 208h1v1h-1zM309 208h1v1h-1zM312 208h1v1h-1zM315 208h1v1h-1zM318 208h1v1h-1zM321 208h1v1h-1zM324 208h1v1h-1zM327 208h1v1h-1zM330 208h1v1h-1zM333 208h1v1h-1zM336 208h1v1h-1zM339 208h1v1h-1zM342 208h1v1h-1zM345 208h1v1h-1zM348 208h1v1h-1zM351 208h1v1h-1zM354 208h1v1h-1zM357 208h1v1h-1zM360 208h1v1h-1zM363 208h1v1h-1zM366 208h1v1h-1zM369 208h1v1h-1zM372 208h1v1h-1zM375 208h1v1h-1zM378 208h1v1h-1zM381 208h1v1h-1zM384 208h1v1h-1zM387 208h1v1h-1zM390 208h1v1h-1zM393 208h1v1h-1zM396 208h1v1h-1zM399 208h1v1h-1zM402 208h1v1h-1zM405 208h1v1h-1zM408 208h1v1h-1zM411 208h1v1h-1zM414 208h1v1h-1zM417 208h1v1h-1zM420 208h1v1h-1zM423 208h1v1h-1zM426 208h1v1h-1zM429 208h1v1h-1zM432 208h1v1h-1zM435 208h1v1h-1zM438 208h1v1h-1zM441 208h1v1h-1zM444 208h1v1h-1zM447 208h1v1h-1zM450 208h1v1h-1zM453 208h1v1h-1zM456 208h1v1h-1zM459 208h1v1h-1zM462 208h1v1h-1zM465 208h1v1h-1zM468 208h1v1h-1zM471 208h1v1h-1zM474 208h1v1h-1zM477 208h1v1h-1zM480 208h1v1h-1zM483 208h1v1h-1zM486 208h1v1h-1zM489 208h1v1h-1zM492 208h1v1h-1zM495 208h1v1h-1zM498 208h1v1h-1zM501 208h1v1h-1zM504 208h1v1h-1zM507 208h1v1h-1zM510 208h1v1h-1zM513 208h1v1h-1zM516 208h1v1h-1zM519 208h1v1h-1zM522 208h1v1h-1zM525 208h1v1h-1zM528 208h1v1h-1zM531 208h1v1h-1zM534 208h1v1h-1zM537 208h1v1h-1zM540 208h1v1h-1zM543 208h1v1h-1zM546 208h1v1h-1zM549 208h1v1h-1zM552 208h1v1h-1zM555 208h1v1h-1zM558 208h1v1h-1zM561 208h1v1h-1zM564 208h1v1h-1zM567 208h1v1h-1zM570 208h1v1h-1zM573 208h1v1h-1zM576 208h1v1h-1zM579 208h1v1h-1zM582 208h1v1h-1zM585 208h1v1h-1zM588 208h1v1h-1zM591 208h1v1h-1zM594 208h1v1h-1zM597 208h1v1h-1zM600 208h1v1h-1zM603 208h1v1h-1zM606 208h1v1h-1zM609 208h1v1h-1zM612 208h1v1h-1zM615 208h1v1h-1zM618 208h1v1h-1zM621 208h1v1h-1zM624 208h1v1h-1zM627 208h1v1h-1zM630 208h1v1h-1zM633 208h1v1h-1zM636 208h1v1h-1zM639 208h1v1h-1zM642 208h1v1h-1zM645 208h1v1h-1zM648 208h1v1h-1zM651 208h1v1h-1zM654 208h1v1h-1zM657 208h1v1h-1zM660 208h1v1h-1zM663 208h1v1h-1zM666 208h1v1h-1zM669 208h1v1h-1zM672 208h1v1h-1zM675 208h1v1h-1zM678 208h1v1h-1zM681 208h1v1h-1zM684 208h1v1h-1zM687 208h1v1h-1zM690 208h1v1h-1zM693 208h1v1h-1zM696 208h1v1h-1zM699 208h1v1h-1zM702 208h1v1h-1zM705 208h1v1h-1zM708 208h1v1h-1zM711 208h1v1h-1zM714 208h1v1h-1zM717 208h1v1h-1zM720 208h1v1h-1zM723 208h1v1h-1zM726 208h1v1h-1zM729 208h1v1h-1zM732 208h1v1h-1zM735 208h1v1h-1zM738 208h1v1h-1zM741 208h1v1h-1zM744 208h1v1h-1zM747 208h1v1h-1zM750 208h1v1h-1zM45 284h1v1h-1zM48 284h1v1h-1zM51 284h1v1h-1zM54 284h1v1h-1zM57 284h1v1h-1zM60 284h1v1h-1zM63 284h1v1h-1zM66 284h1v1h-1zM69 284h1v1h-1zM72 284h1v1h-1zM75 284h1v1h-1zM78 284h1v1h-1zM81 284h1v1h-1zM84 284h1v1h-1zM87 284h1v1h-1zM90 284h1v1h-1zM93 284h1v1h-1zM96 284h1v1h-1zM99 284h1v1h-1zM102 284h1v1h-1zM105 284h1v1h-1zM108 284h1v1h-1zM111 284h1v1h-1zM114 284h1v1h-1zM117 284h1v1h-1zM120 284h1v1h-1zM123 284h1v1h-1zM126 284h1v1h-1zM129 284h1v1h-1zM132 284h1v1h-1zM135 284h1v1h-1zM138 284h1v1h-1zM141 284h1v1h-1zM144 284h1v1h-1zM147 284h1v1h-1zM150 284h1v1h-1zM153 284h1v1h-1zM156 284h1v1h-1zM159 284h1v1h-1zM162 284h1v1h-1zM165 284h1v1h-1zM168 284h1v1h-1zM171 284h1v1h-1zM174 284h1v1h-1zM177 284h1v1h-1zM180 284h1v1h-1zM183 284h1v1h-1zM186 284h1v1h-1zM189 284h1v1h-1zM192 284h1v1h-1zM195 284h1v1h-1zM198 284h1v1h-1zM201 284h1v1h-1zM204 284h1v1h-1zM207 284h1v1h-1zM210 284h1v1h-1zM213 284h1v1h-1zM216 284h1v1h-1zM219 284h1v1h-1zM222 284h1v1h-1zM225 284h1v1h-1zM228 284h1v1h-1zM231 284h1v1h-1zM234 284h1v1h-1zM237 284h1v1h-1zM240 284h1v1h-1zM243 284h1v1h-1zM246 284h1v1h-1zM249 284h1v1h-1zM252 284h1v1h-1zM255 284h1v1h-1zM258 284h1v1h-1zM261 284h1v1h-1zM264 284h1v1h-1zM267 284h1v1h-1zM270 284h1v1h-1zM273 284h1v1h-1zM276 284h1v1h-1zM279 284h1v1h-1zM282 284h1v1h-1zM285 284h1v1h-1zM288 284h1v1h-1zM291 284h1v1h-1zM294 284h1v1h-1zM297 284h1v1h-1zM300 284h1v1h-1zM303 284h1v1h-1zM306 284h1v1h-1zM309 284h1v1h-1zM312 284h1v1h-1zM315 284h1v1h-1zM318 284h1v1h-1zM321 284h1v1h-1zM324 284h1v1h-1zM327 284h1v1h-1zM330 284h1v1h-1zM333 284h1v1h-1zM336 284h1v1h-1zM339 284h1v1h-1zM342 284h1v1h-1zM345 284h1v1h-1zM348 284h1v1h-1zM351 284h1v1h-1zM354 284h1v1h-1zM357 284h1v1h-1zM360 284h1v1h-1zM363 284h1v1h-1zM366 284h1v1h-1zM369 284h1v1h-1zM372 284h1v1h-1zM375 284h1v1h-1zM378 284h1v1h-1zM381 284h1v1h-1zM384 284h1v1h-1zM387 284h1v1h-1zM390 284h1v1h-1zM393 284h1v1h-1zM396 284h1v1h-1zM399 284h1v1h-1zM402 284h1v1h-1zM405 284h1v1h-1zM408 284h1v1h-1zM411 284h1v1h-1zM414 284h1v1h-1zM417 284h1v1h-1zM420 284h1v1h-1zM423 284h1v1h-1zM426 284h1v1h-1zM429 284h1v1h-1zM432 284h1v1h-1zM435 284h1v1h-1zM438 284h1v1h-1zM441 284h1v1h-1zM444 284h1v1h-1zM447 284h1v1h-1zM450 284h1v1h-1zM453 284h1v1h-1zM456 284h1v1h-1zM459 284h1v1h-1zM462 284h1v1h-1zM465 284h1v1h-1zM468 284h1v1h-1zM471 284h1v1h-1zM474 284h1v1h-1zM477 284h1v1h-1zM480 284h1v1h-1zM483 284h1v1h-1zM486 284h1v1h-1zM489 284h1v1h-1zM492 284h1v1h-1zM495 284h1v1h-1zM498 284h1v1h-1zM501 284h1v1h-1zM504 284h1v1h-1zM507 284h1v1h-1zM510 284h1v1h-1zM513 284h1v1h-1zM516 284h1v1h-1zM519 284h1v1h-1zM522 284h1v1h-1zM525 284h1v1h-1zM528 284h1v1h-1zM531 284h1v1h-1zM534 284h1v1h-1zM537 284h1v1h-1zM540 284h1v1h-1zM543 284h1v1h-1zM546 284h1v1h-1zM549 284h1v1h-1zM552 284h1v1h-1zM555 284h1v1h-1zM558 284h1v1h-1zM561 284h1v1h-1zM564 284h1v1h-1zM567 284h1v1h-1zM570 284h1v1h-1zM573 284h1v1h-1zM576 284h1v1h-1zM579 284h1v1h-1zM582 284h1v1h-1zM585 284h1v1h-1zM588 284h1v1h-1zM591 284h1v1h-1zM594 284h1v1h-1zM597 284h1v1h-1zM600 284h1v1h-1zM603 284h1v1h-1zM606 284h1v1h-1zM609 284h1v1h-1zM612 284h1v1h-1zM615 284h1v1h-1zM618 284h1v1h-1zM621 284h1v1h-1zM624 284h1v1h-1zM627 284h1v1h-1zM630 284h1v1h-1zM633 284h1v1h-1zM636 284h1v1h-1zM639 284h1v1h-1zM642 284h1v1h-1zM645 284h1v1h-1zM648 284h1v1h-1zM651 284h1v1h-1zM654 284h1v1h-1zM657 284h1v1h-1zM660 284h1v1h-1zM663 284h1v1h-1zM666 284h1v1h-1zM669 284h1v1h-1zM672 284h1v1h-1zM675 284h1v1h-1zM678 284h1v1h-1zM681 284h1v1h-1zM684 284h1v1h-1zM687 284h1v1h-1zM690 284h1v1h-1zM693 284h1v1h-1zM696 284h1v1h-1zM699 284h1v1h-1zM702 284h1v1h-1zM705 284h1v1h-1zM708 284h1v1h-1zM711 284h1v1h-1zM714 284h1v1h-1zM717 284h1v1h-1zM720 284h1v1h-1zM723 284h1v1h-1zM726 284h1v1h-1zM729 284h1v1h-1zM732 284h1v1h-1zM735 284h1v1h-1zM738 284h1v1h-1zM741 284h1v1h-1zM744 284h1v1h-1zM747 284h1v1h-1zM750 284h1v1h-1z" fill="#ff0000"/>
<path d="M706 189h1v1h-1zM706 192h1v1h-1zM706 195h1v1h-1zM706 198h1v1h-1zM706 201h1v1h-1zM706 204h1v1h-1zM706 207h1v1h-1zM706 210h1v1h-1zM706 213h1v1h-1zM706 216h1v1h-1zM706 219h1v1h-1zM706 222h1v1h-1zM706 225h1v1h-1zM706 228h1v1h-1zM706 231h1v1h-1zM706 234h1v1h-1zM706 237h1v1h-1zM706 240h1v1h-1zM706 243h1v1h-1zM706 246h1v1h-1zM706 249h1v1h-1zM706 252h1v1h-1zM706 255h1v1h-1zM706 258h1v1h-1zM706 261h1v1h-1zM706 264h1v1h-1zM706 267h1v1h-1zM706 270h1v1h-1zM706 273h1v1h-1zM706 276h1v1h-1zM706 279h1v1h-1zM706 282h1v1h-1zM706 285h1v1h-1zM706 288h1v1h-1zM706 291h1v1h-1zM706 294h1v1h-1zM706 297h1v1h-1zM706 300h1v1h-1zM706 303h1v1h-1zM706 306h1v1h-1zM706 309h1v1h-1zM706 312h1v1h-1zM706 315h1v1h-1zM706 318h1v1h-1z" fill="#000"/>
</g>
<text x="49.3" y="205" font-size="14" text-anchor="start" fill="#000" textLength="27" lengthAdjust="spacingAndGlyphs">LDC</text>
<text x="41.4" y="203" font-size="11" text-anchor="end" fill="#000" textLength="17.55" lengthAdjust="spacingAndGlyphs">500</text>
<text x="41.4" y="219" font-size="11" text-anchor="end" fill="#000" textLength="17.55" lengthAdjust="spacingAndGlyphs">200</text>
<text x="41.4" y="232" font-size="11" text-anchor="end" fill="#000" textLength="17.55" lengthAdjust="spacingAndGlyphs">100</text>
<text x="41.4" y="244" font-size="11" text-anchor="end" fill="#000" textLength="11.7" lengthAdjust="spacingAndGlyphs">50</text>
<text x="41.4" y="260" font-size="11" text-anchor="end" fill="#000" textLength="11.7" lengthAdjust="spacingAndGlyphs">20</text>
<text x="41.4" y="273" font-size="11" text-anchor="end" fill="#000" textLength="11.7" lengthAdjust="spacingAndGlyphs">10</text>
<text x="41.4" y="285" font-size="11" text-anchor="end" fill="#000" textLength="5.85" lengthAdjust="spacingAndGlyphs">5</text>
<text x="41.4" y="301" font-size="11" text-anchor="end" fill="#000" textLength="5.85" lengthAdjust="spacingAndGlyphs">2</text>
<text x="41.4" y="314" font-size="11" text-anchor="end" fill="#000" textLength="5.85" lengthAdjust="spacingAndGlyphs">1</text>
<text x="186" y="334" font-size="11" text-anchor="middle" fill="#000" textLength="27" lengthAdjust="spacingAndGlyphs">10 GB</text>
<text x="328" y="334" font-size="11" text-anchor="middle" fill="#000" textLength="27" lengthAdjust="spacingAndGlyphs">20 GB</text>
<text x="470.5" y="334" font-size="11" text-anchor="middle" fill="#000" textLength="27" lengthAdjust="spacingAndGlyphs">30 GB</text>
<text x="612.5" y="334" font-size="11" text-anchor="middle" fill="#000" textLength="27" lengthAdjust="spacingAndGlyphs">40 GB</text>
<g shape-rendering="crispEdges">
<rect x="44" y="340" width="710" height="133" fill="#a0a0a0"/>
<rect x="45" y="341" width="708" height="131" fill="#fff"/>
<path d="M45 462h3v10h-3zM48 449h5v23h-5zM53 462h2v10h-2zM55 442h1v30h-1zM56 449h2v23h-2zM58 462h2v10h-2zM60 449h3v23h-3zM63 442h1v30h-1zM64 449h7v23h-7zM71 442h1v30h-1zM72 462h1v10h-1zM73 449h2v23h-2zM75 462h2v10h-2zM77 449h5v23h-5zM82 442h1v30h-1zM83 449h6v23h-6zM89 462h2v10h-2zM91 449h2v23h-2zM93 462h1v10h-1zM94 449h2v23h-2zM96 462h2v10h-2zM98 449h5v23h-5zM103 442h1v30h-1zM104 449h1v23h-1zM105 462h1v10h-1zM106 449h1v23h-1zM107 462h3v10h-3zM110 449h5v23h-5zM115 462h2v10h-2zM117 449h3v23h-3zM120 442h1v30h-1zM121 449h1v23h-1zM122 462h2v10h-2zM124 449h2v23h-2zM126 462h1v10h-1zM127 449h1v23h-1zM128 462h2v10h-2zM130 449h4v23h-4zM134 462h2v10h-2zM136 442h1v30h-1zM137 449h1v23h-1zM138 462h1v10h-1zM139 449h2v23h-2zM141 442h1v30h-1zM142 462h2v10h-2zM144 449h1v23h-1zM145 462h2v10h-2zM147 449h1v23h-1zM148 442h1v30h-1zM149 449h4v23h-4zM153 462h1v10h-1zM154 449h7v23h-7zM161 437h1v35h-1zM162 449h8v23h-8zM170 462h2v10h-2zM172 449h2v23h-2zM174 442h1v30h-1zM175 462h1v10h-1zM176 449h1v23h-1zM177 462h1v10h-1zM178 449h5v23h-5zM183 462h1v10h-1zM184 449h1v23h-1zM185 462h4v10h-4zM189 449h2v23h-2zM191 462h2v10h-2zM193 449h3v23h-3zM196 462h1v10h-1zM197 449h1v23h-1zM198 462h2v10h-2zM200 449h1v23h-1zM201 462h1v10h-1zM202 449h1v23h-1zM203 462h3v10h-3zM206 449h9v23h-9zM215 442h1v30h-1zM216 449h1v23h-1zM217 442h1v30h-1zM218 462h1v10h-1zM219 449h4v23h-4zM223 442h1v30h-1zM224 449h2v23h-2zM226 462h2v10h-2zM228 449h4v23h-4zM232 437h1v35h-1zM233 449h1v23h-1zM234 462h1v10h-1zM235 430h2v42h-2zM237 449h12v23h-12zM249 462h1v10h-1zM250 449h3v23h-3zM253 442h1v30h-1zM254 462h1v10h-1zM255 442h1v30h-1zM256 449h3v23h-3zM259 442h1v30h-1zM260 449h1v23h-1zM261 462h1v10h-1zM262 449h7v23h-7zM269 462h1v10h-1zM270 449h3v23h-3zM273 442h1v30h-1zM274 449h1v23h-1zM275 462h1v10h-1zM276 449h4v23h-4zM280 462h1v10h-1zM281 449h3v23h-3zM284 462h1v10h-1zM285 442h1v30h-1zM286 449h4v23h-4zM290 442h2v30h-2zM292 449h3v23h-3zM295 442h1v30h-1zM296 449h1v23h-1zM297 462h1v10h-1zM298 449h4v23h-4zM302 433h1v39h-1zM303 437h1v35h-1zM304 449h1v23h-1zM305 442h1v30h-1zM306 449h3v23h-3zM309 442h2v30h-2zM311 449h3v23h-3zM314 442h1v30h-1zM315 449h1v23h-1zM316 442h2v30h-2zM318 449h1v23h-1zM319 442h2v30h-2zM321 449h2v23h-2zM323 462h3v10h-3zM326 449h2v23h-2zM328 442h1v30h-1zM329 462h2v10h-2zM331 442h1v30h-1zM332 449h1v23h-1zM333 442h2v30h-2zM335 449h1v23h-1zM336 437h4v35h-4zM340 442h1v30h-1zM341 449h2v23h-2zM343 442h1v30h-1zM344 449h3v23h-3zM347 442h1v30h-1zM348 449h2v23h-2zM350 442h1v30h-1zM351 449h1v23h-1zM352 437h1v35h-1zM353 449h3v23h-3zM356 442h1v30h-1zM357 449h2v23h-2zM359 442h1v30h-1zM360 433h1v39h-1zM361 449h4v23h-4zM365 423h1v49h-1zM366 427h1v45h-1zM367 433h1v39h-1zM368 442h1v30h-1zM369 430h1v42h-1zM370 433h1v39h-1zM371 442h2v30h-2zM373 433h2v39h-2zM375 437h1v35h-1zM376 430h1v42h-1zM377 425h1v47h-1zM378 430h2v42h-2zM380 433h1v39h-1zM381 442h3v30h-3zM384 427h1v45h-1zM385 430h1v42h-1zM386 433h1v39h-1zM387 442h3v30h-3zM390 449h1v23h-1zM391 442h5v30h-5zM396 437h1v35h-1zM397 425h1v47h-1zM398 433h1v39h-1zM399 449h1v23h-1zM400 442h2v30h-2zM402 433h1v39h-1zM403 442h2v30h-2zM405 449h1v23h-1zM406 442h3v30h-3zM409 449h1v23h-1zM410 442h2v30h-2zM412 430h1v42h-1zM413 427h1v45h-1zM414 430h1v42h-1zM415 433h1v39h-1zM416 449h1v23h-1zM417 442h1v30h-1zM418 430h1v42h-1zM419 442h4v30h-4zM423 433h1v39h-1zM424 437h2v35h-2zM426 442h1v30h-1zM427 430h1v42h-1zM428 433h1v39h-1zM429 442h3v30h-3zM432 449h1v23h-1zM433 442h2v30h-2zM435 427h1v45h-1zM436 437h3v35h-3zM439 442h3v30h-3zM442 437h3v35h-3zM445 442h3v30h-3zM448 425h1v47h-1zM449 437h3v35h-3zM452 442h3v30h-3zM455 437h2v35h-2zM457 442h1v30h-1zM458 433h2v39h-2zM460 442h2v30h-2zM462 437h2v35h-2zM464 442h4v30h-4zM468 449h1v23h-1zM469 442h6v30h-6zM475 437h2v35h-2zM477 442h2v30h-2zM479 433h1v39h-1zM480 442h2v30h-2zM482 437h1v35h-1zM483 423h1v49h-1zM484 442h3v30h-3zM487 437h1v35h-1zM488 442h2v30h-2zM490 433h1v39h-1zM491 442h3v30h-3zM494 437h2v35h-2zM496 442h6v30h-6zM502 437h2v35h-2zM504 442h2v30h-2zM506 437h1v35h-1zM507 442h5v30h-5zM512 437h2v35h-2zM514 430h1v42h-1zM515 442h4v30h-4zM519 449h1v23h-1zM520 442h1v30h-1zM521 421h1v51h-1zM522 427h1v45h-1zM523 425h2v47h-2zM525 427h1v45h-1zM526 442h2v30h-2zM528 433h1v39h-1zM529 437h1v35h-1zM530 442h1v30h-1zM531 437h1v35h-1zM532 442h4v30h-4zM536 449h1v23h-1zM537 442h1v30h-1zM538 437h2v35h-2zM540 442h5v30h-5zM545 433h1v39h-1zM546 442h3v30h-3zM549 437h2v35h-2zM551 442h3v30h-3zM554 423h1v49h-1zM555 433h1v39h-1zM556 442h4v30h-4zM560 437h1v35h-1zM561 433h1v39h-1zM562 442h3v30h-3zM565 437h1v35h-1zM566 442h5v30h-5zM571 437h3v35h-3zM574 442h1v30h-1zM575 437h3v35h-3zM578 442h2v30h-2zM580 437h3v35h-3zM583 442h3v30h-3zM586 449h1v23h-1zM587 442h5v30h-5zM592 437h1v35h-1zM593 442h1v30h-1zM594 437h1v35h-1zM595 442h1v30h-1zM596 437h1v35h-1zM597 442h2v30h-2zM599 449h1v23h-1zM600 442h3v30h-3zM603 437h2v35h-2zM605 442h1v30h-1zM606 449h1v23h-1zM607 442h4v30h-4zM611 433h1v39h-1zM612 442h5v30h-5zM617 449h1v23h-1zM618 442h3v30h-3zM621 433h1v39h-1zM622 442h2v30h-2zM624 437h2v35h-2zM626 442h1v30h-1zM627 437h1v35h-1zM628 442h1v30h-1zM629 423h1v49h-1zM630 442h4v30h-4zM634 437h1v35h-1zM635 442h2v30h-2zM637 437h1v35h-1zM638 442h1v30h-1zM639 437h1v35h-1zM640 442h1v30h-1zM641 437h1v35h-1zM642 442h3v30h-3zM645 449h1v23h-1zM646 442h6v30h-6zM652 437h1v35h-1zM653 442h2v30h-2zM655 437h3v35h-3zM658 442h5v30h-5zM663 433h1v39h-1zM664 442h4v30h-4zM668 449h1v23h-1zM669 442h4v30h-4zM673 449h1v23h-1zM674 442h1v30h-1zM675 437h2v35h-2zM677 442h1v30h-1zM678 433h1v39h-1zM679 442h3v30h-3zM682 449h1v23h-1zM683 442h1v30h-1zM684 437h2v35h-2zM686 442h4v30h-4zM690 433h1v39h-1zM691 437h2v35h-2zM693 442h2v30h-2zM695 437h1v35h-1zM696 433h1v39h-1zM697 442h2v30h-2zM699 449h1v23h-1zM700 442h2v30h-2zM702 462h2v10h-2zM704 442h1v30h-1zM705 449h1v23h-1z" fill="#0055ff"/><path d="M235 462h2v10h-2zM339 462h1v10h-1zM365 462h1v10h-1zM369 462h1v10h-1zM372 462h1v10h-1zM375 462h1v10h-1zM377 449h2v23h-2zM380 462h1v10h-1zM384 462h2v10h-2zM397 462h1v10h-1zM411 462h3v10h-3zM436 462h1v10h-1zM448 462h1v10h-1zM455 462h1v10h-1zM465 462h1v10h-1zM477 462h1v10h-1zM514 462h1v10h-1zM524 449h1v23h-1zM525 462h1v10h-1zM678 462h1v10h-1z" fill="#001e82"/>
<path d="M45 351h1v1h-1zM48 351h1v1h-1zM51 351h1v1h-1zM54 351h1v1h-1zM57 351h1v1h-1zM60 351h1v1h-1zM63 351h1v1h-1zM66 351h1v1h-1zM69 351h1v1h-1zM72 351h1v1h-1zM75 351h1v1h-1zM78 351h1v1h-1zM81 351h1v1h-1zM84 351h1v1h-1zM87 351h1v1h-1zM90 351h1v1h-1zM93 351h1v1h-1zM96 351h1v1h-1zM99 351h1v1h-1zM102 351h1v1h-1zM105 351h1v1h-1zM108 351h1v1h-1zM111 351h1v1h-1zM114 351h1v1h-1zM117 351h1v1h-1zM120 351h1v1h-1zM123 351h1v1h-1zM126 351h1v1h-1zM129 351h1v1h-1zM132 351h1v1h-1zM135 351h1v1h-1zM138 351h1v1h-1zM141 351h1v1h-1zM144 351h1v1h-1zM147 351h1v1h-1zM150 351h1v1h-1zM153 351h1v1h-1zM156 351h1v1h-1zM159 351h1v1h-1zM162 351h1v1h-1zM165 351h1v1h-1zM168 351h1v1h-1zM171 351h1v1h-1zM174 351h1v1h-1zM177 351h1v1h-1zM180 351h1v1h-1zM183 351h1v1h-1zM186 351h1v1h-1zM189 351h1v1h-1zM192 351h1v1h-1zM195 351h1v1h-1zM198 351h1v1h-1zM201 351h1v1h-1zM204 351h1v1h-1zM207 351h1v1h-1zM210 351h1v1h-1zM213 351h1v1h-1zM216 351h1v1h-1zM219 351h1v1h-1zM222 351h1v1h-1zM225 351h1v1h-1zM228 351h1v1h-1zM231 351h1v1h-1zM234 351h1v1h-1zM237 351h1v1h-1zM240 351h1v1h-1zM243 351h1v1h-1zM246 351h1v1h-1zM249 351h1v1h-1zM252 351h1v1h-1zM255 351h1v1h-1zM258 351h1v1h-1zM261 351h1v1h-1zM264 351h1v1h-1zM267 351h1v1h-1zM270 351h1v1h-1zM273 351h1v1h-1zM276 351h1v1h-1zM279 351h1v1h-1zM282 351h1v1h-1zM285 351h1v1h-1zM288 351h1v1h-1zM291 351h1v1h-1zM294 351h1v1h-1zM297 351h1v1h-1zM300 351h1v1h-1zM303 351h1v1h-1zM306 351h1v1h-1zM309 351h1v1h-1zM312 351h1v1h-1zM315 351h1v1h-1zM318 351h1v1h-1zM321 351h1v1h-1zM324 351h1v1h-1zM327 351h1v1h-1zM330 351h1v1h-1zM333 351h1v1h-1zM336 351h1v1h-1zM339 351h1v1h-1zM342 351h1v1h-1zM345 351h1v1h-1zM348 351h1v1h-1zM351 351h1v1h-1zM354 351h1v1h-1zM357 351h1v1h-1zM360 351h1v1h-1zM363 351h1v1h-1zM366 351h1v1h-1zM369 351h1v1h-1zM372 351h1v1h-1zM375 351h1v1h-1zM378 351h1v1h-1zM381 351h1v1h-1zM384 351h1v1h-1zM387 351h1v1h-1zM390 351h1v1h-1zM393 351h1v1h-1zM396 351h1v1h-1zM399 351h1v1h-1zM402 351h1v1h-1zM405 351h1v1h-1zM408 351h1v1h-1zM411 351h1v1h-1zM414 351h1v1h-1zM417 351h1v1h-1zM420 351h1v1h-1zM423 351h1v1h-1zM426 351h1v1h-1zM429 351h1v1h-1zM432 351h1v1h-1zM435 351h1v1h-1zM438 351h1v1h-1zM441 351h1v1h-1zM444 351h1v1h-1zM447 351h1v1h-1zM450 351h1v1h-1zM453 351h1v1h-1zM456 351h1v1h-1zM459 351h1v1h-1zM462 351h1v1h-1zM465 351h1v1h-1zM468 351h1v1h-1zM471 351h1v1h-1zM474 351h1v1h-1zM477 351h1v1h-1zM480 351h1v1h-1zM483 351h1v1h-1zM486 351h1v1h-1zM489 351h1v1h-1zM492 351h1v1h-1zM495 351h1v1h-1zM498 351h1v1h-1zM501 351h1v1h-1zM504 351h1v1h-1zM507 351h1v1h-1zM510 351h1v1h-1zM513 351h1v1h-1zM516 351h1v1h-1zM519 351h1v1h-1zM522 351h1v1h-1zM525 351h1v1h-1zM528 351h1v1h-1zM531 351h1v1h-1zM534 351h1v1h-1zM537 351h1v1h-1zM540 351h1v1h-1zM543 351h1v1h-1zM546 351h1v1h-1zM549 351h1v1h-1zM552 351h1v1h-1zM555 351h1v1h-1zM558 351h1v1h-1zM561 351h1v1h-1zM564 351h1v1h-1zM567 351h1v1h-1zM570 351h1v1h-1zM573 351h1v1h-1zM576 351h1v1h-1zM579 351h1v1h-1zM582 351h1v1h-1zM585 351h1v1h-1zM588 351h1v1h-1zM591 351h1v1h-1zM594 351h1v1h-1zM597 351h1v1h-1zM600 351h1v1h-1zM603 351h1v1h-1zM606 351h1v1h-1zM609 351h1v1h-1zM612 351h1v1h-1zM615 351h1v1h-1zM618 351h1v1h-1zM621 351h1v1h-1zM624 351h1v1h-1zM627 351h1v1h-1zM630 351h1v1h-1zM633 351h1v1h-1zM636 351h1v1h-1zM639 351h1v1h-1zM642 351h1v1h-1zM645 351h1v1h-1zM648 351h1v1h-1zM651 351h1v1h-1zM654 351h1v1h-1zM657 351h1v1h-1zM660 351h1v1h-1zM663 351h1v1h-1zM666 351h1v1h-1zM669 351h1v1h-1zM672 351h1v1h-1zM675 351h1v1h-1zM678 351h1v1h-1zM681 351h1v1h-1zM684 351h1v1h-1zM687 351h1v1h-1zM690 351h1v1h-1zM693 351h1v1h-1zM696 351h1v1h-1zM699 351h1v1h-1zM702 351h1v1h-1zM705 351h1v1h-1zM708 351h1v1h-1zM711 351h1v1h-1zM714 351h1v1h-1zM717 351h1v1h-1zM720 351h1v1h-1zM723 351h1v1h-1zM726 351h1v1h-1zM729 351h1v1h-1zM732 351h1v1h-1zM735 351h1v1h-1zM738 351h1v1h-1zM741 351h1v1h-1zM744 351h1v1h-1zM747 351h1v1h-1zM750 351h1v1h-1zM45 355h1v1h-1zM48 355h1v1h-1zM51 355h1v1h-1zM54 355h1v1h-1zM57 355h1v1h-1zM60 355h1v1h-1zM63 355h1v1h-1zM66 355h1v1h-1zM69 355h1v1h-1zM72 355h1v1h-1zM75 355h1v1h-1zM78 355h1v1h-1zM81 355h1v1h-1zM84 355h1v1h-1zM87 355h1v1h-1zM90 355h1v1h-1zM93 355h1v1h-1zM96 355h1v1h-1zM99 355h1v1h-1zM102 355h1v1h-1zM105 355h1v1h-1zM108 355h1v1h-1zM111 355h1v1h-1zM114 355h1v1h-1zM117 355h1v1h-1zM120 355h1v1h-1zM123 355h1v1h-1zM126 355h1v1h-1zM129 355h1v1h-1zM132 355h1v1h-1zM135 355h1v1h-1zM138 355h1v1h-1zM141 355h1v1h-1zM144 355h1v1h-1zM147 355h1v1h-1zM150 355h1v1h-1zM153 355h1v1h-1zM156 355h1v1h-1zM159 355h1v1h-1zM162 355h1v1h-1zM165 355h1v1h-1zM168 355h1v1h-1zM171 355h1v1h-1zM174 355h1v1h-1zM177 355h1v1h-1zM180 355h1v1h-1zM183 355h1v1h-1zM186 355h1v1h-1zM189 355h1v1h-1zM192 355h1v1h-1zM195 355h1v1h-1zM198 355h1v1h-1zM201 355h1v1h-1zM204 355h1v1h-1zM207 355h1v1h-1zM210 355h1v1h-1zM213 355h1v1h-1zM216 355h1v1h-1zM219 355h1v1h-1zM222 355h1v1h-1zM225 355h1v1h-1zM228 355h1v1h-1zM231 355h1v1h-1zM234 355h1v1h-1zM237 355h1v1h-1zM240 355h1v1h-1zM243 355h1v1h-1zM246 355h1v1h-1zM249 355h1v1h-1zM252 355h1v1h-1zM255 355h1v1h-1zM258 355h1v1h-1zM261 355h1v1h-1zM264 355h1v1h-1zM267 355h1v1h-1zM270 355h1v1h-1zM273 355h1v1h-1zM276 355h1v1h-1zM279 355h1v1h-1zM282 355h1v1h-1zM285 355h1v1h-1zM288 355h1v1h-1zM291 355h1v1h-1zM294 355h1v1h-1zM297 355h1v1h-1zM300 355h1v1h-1zM303 355h1v1h-1zM306 355h1v1h-1zM309 355h1v1h-1zM312 355h1v1h-1zM315 355h1v1h-1zM318 355h1v1h-1zM321 355h1v1h-1zM324 355h1v1h-1zM327 355h1v1h-1zM330 355h1v1h-1zM333 355h1v1h-1zM336 355h1v1h-1zM339 355h1v1h-1zM342 355h1v1h-1zM345 355h1v1h-1zM348 355h1v1h-1zM351 355h1v1h-1zM354 355h1v1h-1zM357 355h1v1h-1zM360 355h1v1h-1zM363 355h1v1h-1zM366 355h1v1h-1zM369 355h1v1h-1zM372 355h1v1h-1zM375 355h1v1h-1zM378 355h1v1h-1zM381 355h1v1h-1zM384 355h1v1h-1zM387 355h1v1h-1zM390 355h1v1h-1zM393 355h1v1h-1zM396 355h1v1h-1zM399 355h1v1h-1zM402 355h1v1h-1zM405 355h1v1h-1zM408 355h1v1h-1zM411 355h1v1h-1zM414 355h1v1h-1zM417 355h1v1h-1zM420 355h1v1h-1zM423 355h1v1h-1zM426 355h1v1h-1zM429 355h1v1h-1zM432 355h1v1h-1zM435 355h1v1h-1zM438 355h1v1h-1zM441 355h1v1h-1zM444 355h1v1h-1zM447 355h1v1h-1zM450 355h1v1h-1zM453 355h1v1h-1zM456 355h1v1h-1zM459 355h1v1h-1zM462 355h1v1h-1zM465 355h1v1h-1zM468 355h1v1h-1zM471 355h1v1h-1zM474 355h1v1h-1zM477 355h1v1h-1zM480 355h1v1h-1zM483 355h1v1h-1zM486 355h1v1h-1zM489 355h1v1h-1zM492 355h1v1h-1zM495 355h1v1h-1zM498 355h1v1h-1zM501 355h1v1h-1zM504 355h1v1h-1zM507 355h1v1h-1zM510 355h1v1h-1zM513 355h1v1h-1zM516 355h1v1h-1zM519 355h1v1h-1zM522 355h1v1h-1zM525 355h1v1h-1zM528 355h1v1h-1zM531 355h1v1h-1zM534 355h1v1h-1zM537 355h1v1h-1zM540 355h1v1h-1zM543 355h1v1h-1zM546 355h1v1h-1zM549 355h1v1h-1zM552 355h1v1h-1zM555 355h1v1h-1zM558 355h1v1h-1zM561 355h1v1h-1zM564 355h1v1h-1zM567 355h1v1h-1zM570 355h1v1h-1zM573 355h1v1h-1zM576 355h1v1h-1zM579 355h1v1h-1zM582 355h1v1h-1zM585 355h1v1h-1zM588 355h1v1h-1zM591 355h1v1h-1zM594 355h1v1h-1zM597 355h1v1h-1zM600 355h1v1h-1zM603 355h1v1h-1zM606 355h1v1h-1zM609 355h1v1h-1zM612 355h1v1h-1zM615 355h1v1h-1zM618 355h1v1h-1zM621 355h1v1h-1zM624 355h1v1h-1zM627 355h1v1h-1zM630 355h1v1h-1zM633 355h1v1h-1zM636 355h1v1h-1zM639 355h1v1h-1zM642 355h1v1h-1zM645 355h1v1h-1zM648 355h1v1h-1zM651 355h1v1h-1zM654 355h1v1h-1zM657 355h1v1h-1zM660 355h1v1h-1zM663 355h1v1h-1zM666 355h1v1h-1zM669 355h1v1h-1zM672 355h1v1h-1zM675 355h1v1h-1zM678 355h1v1h-1zM681 355h1v1h-1zM684 355h1v1h-1zM687 355h1v1h-1zM690 355h1v1h-1zM693 355h1v1h-1zM696 355h1v1h-1zM699 355h1v1h-1zM702 355h1v1h-1zM705 355h1v1h-1zM708 355h1v1h-1zM711 355h1v1h-1zM714 355h1v1h-1zM717 355h1v1h-1zM720 355h1v1h-1zM723 355h1v1h-1zM726 355h1v1h-1zM729 355h1v1h-1zM732 355h1v1h-1zM735 355h1v1h-1zM738 355h1v1h-1zM741 355h1v1h-1zM744 355h1v1h-1zM747 355h1v1h-1zM750 355h1v1h-1zM45 360h1v1h-1zM48 360h1v1h-1zM51 360h1v1h-1zM54 360h1v1h-1zM57 360h1v1h-1zM60 360h1v1h-1zM63 360h1v1h-1zM66 360h1v1h-1zM69 360h1v1h-1zM72 360h1v1h-1zM75 360h1v1h-1zM78 360h1v1h-1zM81 360h1v1h-1zM84 360h1v1h-1zM87 360h1v1h-1zM90 360h1v1h-1zM93 360h1v1h-1zM96 360h1v1h-1zM99 360h1v1h-1zM102 360h1v1h-1zM105 360h1v1h-1zM108 360h1v1h-1zM111 360h1v1h-1zM114 360h1v1h-1zM117 360h1v1h-1zM120 360h1v1h-1zM123 360h1v1h-1zM126 360h1v1h-1zM129 360h1v1h-1zM132 360h1v1h-1zM135 360h1v1h-1zM138 360h1v1h-1zM141 360h1v1h-1zM144 360h1v1h-1zM147 360h1v1h-1zM150 360h1v1h-1zM153 360h1v1h-1zM156 360h1v1h-1zM159 360h1v1h-1zM162 360h1v1h-1zM165 360h1v1h-1zM168 360h1v1h-1zM171 360h1v1h-1zM174 360h1v1h-1zM177 360h1v1h-1zM180 360h1v1h-1zM183 360h1v1h-1zM186 360h1v1h-1zM189 360h1v1h-1zM192 360h1v1h-1zM195 360h1v1h-1zM198 360h1v1h-1zM201 360h1v1h-1zM204 360h1v1h-1zM207 360h1v1h-1zM210 360h1v1h-1zM213 360h1v1h-1zM216 360h1v1h-1zM219 360h1v1h-1zM222 360h1v1h-1zM225 360h1v1h-1zM228 360h1v1h-1zM231 360h1v1h-1zM234 360h1v1h-1zM237 360h1v1h-1zM240 360h1v1h-1zM243 360h1v1h-1zM246 360h1v1h-1zM249 360h1v1h-1zM252 360h1v1h-1zM255 360h1v1h-1zM258 360h1v1h-1zM261 360h1v1h-1zM264 360h1v1h-1zM267 360h1v1h-1zM270 360h1v1h-1zM273 360h1v1h-1zM276 360h1v1h-1zM279 360h1v1h-1zM282 360h1v1h-1zM285 360h1v1h-1zM288 360h1v1h-1zM291 360h1v1h-1zM294 360h1v1h-1zM297 360h1v1h-1zM300 360h1v1h-1zM303 360h1v1h-1zM306 360h1v1h-1zM309 360h1v1h-1zM312 360h1v1h-1zM315 360h1v1h-1zM318 360h1v1h-1zM321 360h1v1h-1zM324 360h1v1h-1zM327 360h1v1h-1zM330 360h1v1h-1zM333 360h1v1h-1zM336 360h1v1h-1zM339 360h1v1h-1zM342 360h1v1h-1zM345 360h1v1h-1zM348 360h1v1h-1zM351 360h1v1h-1zM354 360h1v1h-1zM357 360h1v1h-1zM360 360h1v1h-1zM363 360h1v1h-1zM366 360h1v1h-1zM369 360h1v1h-1zM372 360h1v1h-1zM375 360h1v1h-1zM378 360h1v1h-1zM381 360h1v1h-1zM384 360h1v1h-1zM387 360h1v1h-1zM390 360h1v1h-1zM393 360h1v1h-1zM396 360h1v1h-1zM399 360h1v1h-1zM402 360h1v1h-1zM405 360h1v1h-1zM408 360h1v1h-1zM411 360h1v1h-1zM414 360h1v1h-1zM417 360h1v1h-1zM420 360h1v1h-1zM423 360h1v1h-1zM426 360h1v1h-1zM429 360h1v1h-1zM432 360h1v1h-1zM435 360h1v1h-1zM438 360h1v1h-1zM441 360h1v1h-1zM444 360h1v1h-1zM447 360h1v1h-1zM450 360h1v1h-1zM453 360h1v1h-1zM456 360h1v1h-1zM459 360h1v1h-1zM462 360h1v1h-1zM465 360h1v1h-1zM468 360h1v1h-1zM471 360h1v1h-1zM474 360h1v1h-1zM477 360h1v1h-1zM480 360h1v1h-1zM483 360h1v1h-1zM486 360h1v1h-1zM489 360h1v1h-1zM492 360h1v1h-1zM495 360h1v1h-1zM498 360h1v1h-1zM501 360h1v1h-1zM504 360h1v1h-1zM507 360h1v1h-1zM510 360h1v1h-1zM513 360h1v1h-1zM516 360h1v1h-1zM519 360h1v1h-1zM522 360h1v1h-1zM525 360h1v1h-1zM528 360h1v1h-1zM531 360h1v1h-1zM534 360h1v1h-1zM537 360h1v1h-1zM540 360h1v1h-1zM543 360h1v1h-1zM546 360h1v1h-1zM549 360h1v1h-1zM552 360h1v1h-1zM555 360h1v1h-1zM558 360h1v1h-1zM561 360h1v1h-1zM564 360h1v1h-1zM567 360h1v1h-1zM570 360h1v1h-1zM573 360h1v1h-1zM576 360h1v1h-1zM579 360h1v1h-1zM582 360h1v1h-1zM585 360h1v1h-1zM588 360h1v1h-1zM591 360h1v1h-1zM594 360h1v1h-1zM597 360h1v1h-1zM600 360h1v1h-1zM603 360h1v1h-1zM606 360h1v1h-1zM609 360h1v1h-1zM612 360h1v1h-1zM615 360h1v1h-1zM618 360h1v1h-1zM621 360h1v1h-1zM624 360h1v1h-1zM627 360h1v1h-1zM630 360h1v1h-1zM633 360h1v1h-1zM636 360h1v1h-1zM639 360h1v1h-1zM642 360h1v1h-1zM645 360h1v1h-1zM648 360h1v1h-1zM651 360h1v1h-1zM654 360h1v1h-1zM657 360h1v1h-1zM660 360h1v1h-1zM663 360h1v1h-1zM666 360h1v1h-1zM669 360h1v1h-1zM672 360h1v1h-1zM675 360h1v1h-1zM678 360h1v1h-1zM681 360h1v1h-1zM684 360h1v1h-1zM687 360h1v1h-1zM690 360h1v1h-1zM693 360h1v1h-1zM696 360h1v1h-1zM699 360h1v1h-1zM702 360h1v1h-1zM705 360h1v1h-1zM708 360h1v1h-1zM711 360h1v1h-1zM714 360h1v1h-1zM717 360h1v1h-1zM720 360h1v1h-1zM723 360h1v1h-1zM726 360h1v1h-1zM729 360h1v1h-1zM732 360h1v1h-1zM735 360h1v1h-1zM738 360h1v1h-1zM741 360h1v1h-1zM744 360h1v1h-1zM747 360h1v1h-1zM750 360h1v1h-1zM45 367h1v1h-1zM48 367h1v1h-1zM51 367h1v1h-1zM54 367h1v1h-1zM57 367h1v1h-1zM60 367h1v1h-1zM63 367h1v1h-1zM66 367h1v1h-1zM69 367h1v1h-1zM72 367h1v1h-1zM75 367h1v1h-1zM78 367h1v1h-1zM81 367h1v1h-1zM84 367h1v1h-1zM87 367h1v1h-1zM90 367h1v1h-1zM93 367h1v1h-1zM96 367h1v1h-1zM99 367h1v1h-1zM102 367h1v1h-1zM105 367h1v1h-1zM108 367h1v1h-1zM111 367h1v1h-1zM114 367h1v1h-1zM117 367h1v1h-1zM120 367h1v1h-1zM123 367h1v1h-1zM126 367h1v1h-1zM129 367h1v1h-1zM132 367h1v1h-1zM135 367h1v1h-1zM138 367h1v1h-1zM141 367h1v1h-1zM144 367h1v1h-1zM147 367h1v1h-1zM150 367h1v1h-1zM153 367h1v1h-1zM156 367h1v1h-1zM159 367h1v1h-1zM162 367h1v1h-1zM165 367h1v1h-1zM168 367h1v1h-1zM171 367h1v1h-1zM174 367h1v1h-1zM177 367h1v1h-1zM180 367h1v1h-1zM183 367h1v1h-1zM186 367h1v1h-1zM189 367h1v1h-1zM192 367h1v1h-1zM195 367h1v1h-1zM198 367h1v1h-1zM201 367h1v1h-1zM204 367h1v1h-1zM207 367h1v1h-1zM210 367h1v1h-1zM213 367h1v1h-1zM216 367h1v1h-1zM219 367h1v1h-1zM222 367h1v1h-1zM225 367h1v1h-1zM228 367h1v1h-1zM231 367h1v1h-1zM234 367h1v1h-1zM237 367h1v1h-1zM240 367h1v1h-1zM243 367h1v1h-1zM246 367h1v1h-1zM249 367h1v1h-1zM252 367h1v1h-1zM255 367h1v1h-1zM258 367h1v1h-1zM261 367h1v1h-1zM264 367h1v1h-1zM267 367h1v1h-1zM270 367h1v1h-1zM273 367h1v1h-1zM276 367h1v1h-1zM279 367h1v1h-1zM282 367h1v1h-1zM285 367h1v1h-1zM288 367h1v1h-1zM291 367h1v1h-1zM294 367h1v1h-1zM297 367h1v1h-1zM300 367h1v1h-1zM303 367h1v1h-1zM306 367h1v1h-1zM309 367h1v1h-1zM312 367h1v1h-1zM315 367h1v1h-1zM318 367h1v1h-1zM321 367h1v1h-1zM324 367h1v1h-1zM327 367h1v1h-1zM330 367h1v1h-1zM333 367h1v1h-1zM336 367h1v1h-1zM339 367h1v1h-1zM342 367h1v1h-1zM345 367h1v1h-1zM348 367h1v1h-1zM351 367h1v1h-1zM354 367h1v1h-1zM357 367h1v1h-1zM360 367h1v1h-1zM363 367h1v1h-1zM366 367h1v1h-1zM369 367h1v1h-1zM372 367h1v1h-1zM375 367h1v1h-1zM378 367h1v1h-1zM381 367h1v1h-1zM384 367h1v1h-1zM387 367h1v1h-1zM390 367h1v1h-1zM393 367h1v1h-1zM396 367h1v1h-1zM399 367h1v1h-1zM402 367h1v1h-1zM405 367h1v1h-1zM408 367h1v1h-1zM411 367h1v1h-1zM414 367h1v1h-1zM417 367h1v1h-1zM420 367h1v1h-1zM423 367h1v1h-1zM426 367h1v1h-1zM429 367h1v1h-1zM432 367h1v1h-1zM435 367h1v1h-1zM438 367h1v1h-1zM441 367h1v1h-1zM444 367h1v1h-1zM447 367h1v1h-1zM450 367h1v1h-1zM453 367h1v1h-1zM456 367h1v1h-1zM459 367h1v1h-1zM462 367h1v1h-1zM465 367h1v1h-1zM468 367h1v1h-1zM471 367h1v1h-1zM474 367h1v1h-1zM477 367h1v1h-1zM480 367h1v1h-1zM483 367h1v1h-1zM486 367h1v1h-1zM489 367h1v1h-1zM492 367h1v1h-1zM495 367h1v1h-1zM498 367h1v1h-1zM501 367h1v1h-1zM504 367h1v1h-1zM507 367h1v1h-1zM510 367h1v1h-1zM513 367h1v1h-1zM516 367h1v1h-1zM519 367h1v1h-1zM522 367h1v1h-1zM525 367h1v1h-1zM528 367h1v1h-1zM531 367h1v1h-1zM534 367h1v1h-1zM537 367h1v1h-1zM540 367h1v1h-1zM543 367h1v1h-1zM546 367h1v1h-1zM549 367h1v1h-1zM552 367h1v1h-1zM555 367h1v1h-1zM558 367h1v1h-1zM561 367h1v1h-1zM564 367h1v1h-1zM567 367h1v1h-1zM570 367h1v1h-1zM573 367h1v1h-1zM576 367h1v1h-1zM579 367h1v1h-1zM582 367h1v1h-1zM585 367h1v1h-1zM588 367h1v1h-1zM591 367h1v1h-1zM594 367h1v1h-1zM597 367h1v1h-1zM600 367h1v1h-1zM603 367h1v1h-1zM606 367h1v1h-1zM609 367h1v1h-1zM612 367h1v1h-1zM615 367h1v1h-1zM618 367h1v1h-1zM621 367h1v1h-1zM624 367h1v1h-1zM627 367h1v1h-1zM630 367h1v1h-1zM633 367h1v1h-1zM636 367h1v1h-1zM639 367h1v1h-1zM642 367h1v1h-1zM645 367h1v1h-1zM648 367h1v1h-1zM651 367h1v1h-1zM654 367h1v1h-1zM657 367h1v1h-1zM660 367h1v1h-1zM663 367h1v1h-1zM666 367h1v1h-1zM669 367h1v1h-1zM672 367h1v1h-1zM675 367h1v1h-1zM678 367h1v1h-1zM681 367h1v1h-1zM684 367h1v1h-1zM687 367h1v1h-1zM690 367h1v1h-1zM693 367h1v1h-1zM696 367h1v1h-1zM699 367h1v1h-1zM702 367h1v1h-1zM705 367h1v1h-1zM708 367h1v1h-1zM711 367h1v1h-1zM714 367h1v1h-1zM717 367h1v1h-1zM720 367h1v1h-1zM723 367h1v1h-1zM726 367h1v1h-1zM729 367h1v1h-1zM732 367h1v1h-1zM735 367h1v1h-1zM738 367h1v1h-1zM741 367h1v1h-1zM744 367h1v1h-1zM747 367h1v1h-1zM750 367h1v1h-1zM45 380h1v1h-1zM48 380h1v1h-1zM51 380h1v1h-1zM54 380h1v1h-1zM57 380h1v1h-1zM60 380h1v1h-1zM63 380h1v1h-1zM66 380h1v1h-1zM69 380h1v1h-1zM72 380h1v1h-1zM75 380h1v1h-1zM78 380h1v1h-1zM81 380h1v1h-1zM84 380h1v1h-1zM87 380h1v1h-1zM90 380h1v1h-1zM93 380h1v1h-1zM96 380h1v1h-1zM99 380h1v1h-1zM102 380h1v1h-1zM105 380h1v1h-1zM108 380h1v1h-1zM111 380h1v1h-1zM114 380h1v1h-1zM117 380h1v1h-1zM120 380h1v1h-1zM123 380h1v1h-1zM126 380h1v1h-1zM129 380h1v1h-1zM132 380h1v1h-1zM135 380h1v1h-1zM138 380h1v1h-1zM141 380h1v1h-1zM144 380h1v1h-1zM147 380h1v1h-1zM150 380h1v1h-1zM153 380h1v1h-1zM156 380h1v1h-1zM159 380h1v1h-1zM162 380h1v1h-1zM165 380h1v1h-1zM168 380h1v1h-1zM171 380h1v1h-1zM174 380h1v1h-1zM177 380h1v1h-1zM180 380h1v1h-1zM183 380h1v1h-1zM186 380h1v1h-1zM189 380h1v1h-1zM192 380h1v1h-1zM195 380h1v1h-1zM198 380h1v1h-1zM201 380h1v1h-1zM204 380h1v1h-1zM207 380h1v1h-1zM210 380h1v1h-1zM213 380h1v1h-1zM216 380h1v1h-1zM219 380h1v1h-1zM222 380h1v1h-1zM225 380h1v1h-1zM228 380h1v1h-1zM231 380h1v1h-1zM234 380h1v1h-1zM237 380h1v1h-1zM240 380h1v1h-1zM243 380h1v1h-1zM246 380h1v1h-1zM249 380h1v1h-1zM252 380h1v1h-1zM255 380h1v1h-1zM258 380h1v1h-1zM261 380h1v1h-1zM264 380h1v1h-1zM267 380h1v1h-1zM270 380h1v1h-1zM273 380h1v1h-1zM276 380h1v1h-1zM279 380h1v1h-1zM282 380h1v1h-1zM285 380h1v1h-1zM288 380h1v1h-1zM291 380h1v1h-1zM294 380h1v1h-1zM297 380h1v1h-1zM300 380h1v1h-1zM303 380h1v1h-1zM306 380h1v1h-1zM309 380h1v1h-1zM312 380h1v1h-1zM315 380h1v1h-1zM318 380h1v1h-1zM321 380h1v1h-1zM324 380h1v1h-1zM327 380h1v1h-1zM330 380h1v1h-1zM333 380h1v1h-1zM336 380h1v1h-1zM339 380h1v1h-1zM342 380h1v1h-1zM345 380h1v1h-1zM348 380h1v1h-1zM351 380h1v1h-1zM354 380h1v1h-1zM357 380h1v1h-1zM360 380h1v1h-1zM363 380h1v1h-1zM366 380h1v1h-1zM369 380h1v1h-1zM372 380h1v1h-1zM375 380h1v1h-1zM378 380h1v1h-1zM381 380h1v1h-1zM384 380h1v1h-1zM387 380h1v1h-1zM390 380h1v1h-1zM393 380h1v1h-1zM396 380h1v1h-1zM399 380h1v1h-1zM402 380h1v1h-1zM405 380h1v1h-1zM408 380h1v1h-1zM411 380h1v1h-1zM414 380h1v1h-1zM417 380h1v1h-1zM420 380h1v1h-1zM423 380h1v1h-1zM426 380h1v1h-1zM429 380h1v1h-1zM432 380h1v1h-1zM435 380h1v1h-1zM438 380h1v1h-1zM441 380h1v1h-1zM444 380h1v1h-1zM447 380h1v1h-1zM450 380h1v1h-1zM453 380h1v1h-1zM456 380h1v1h-1zM459 380h1v1h-1zM462 380h1v1h-1zM465 380h1v1h-1zM468 380h1v1h-1zM471 380h1v1h-1zM474 380h1v1h-1zM477 380h1v1h-1zM480 380h1v1h-1zM483 380h1v1h-1zM486 380h1v1h-1zM489 380h1v1h-1zM492 380h1v1h-1zM495 380h1v1h-1zM498 380h1v1h-1zM501 380h1v1h-1zM504 380h1v1h-1zM507 380h1v1h-1zM510 380h1v1h-1zM513 380h1v1h-1zM516 380h1v1h-1zM519 380h1v1h-1zM522 380h1v1h-1zM525 380h1v1h-1zM528 380h1v1h-1zM531 380h1v1h-1zM534 380h1v1h-1zM537 380h1v1h-1zM540 380h1v1h-1zM543 380h1v1h-1zM546 380h1v1h-1zM549 380h1v1h-1zM552 380h1v1h-1zM555 380h1v1h-1zM558 380h1v1h-1zM561 380h1v1h-1zM564 380h1v1h-1zM567 380h1v1h-1zM570 380h1v1h-1zM573 380h1v1h-1zM576 380h1v1h-1zM579 380h1v1h-1zM582 380h1v1h-1zM585 380h1v1h-1zM588 380h1v1h-1zM591 380h1v1h-1zM594 380h1v1h-1zM597 380h1v1h-1zM600 380h1v1h-1zM603 380h1v1h-1zM606 380h1v1h-1zM609 380h1v1h-1zM612 380h1v1h-1zM615 380h1v1h-1zM618 380h1v1h-1zM621 380h1v1h-1zM624 380h1v1h-1zM627 380h1v1h-1zM630 380h1v1h-1zM633 380h1v1h-1zM636 380h1v1h-1zM639 380h1v1h-1zM642 380h1v1h-1zM645 380h1v1h-1zM648 380h1v1h-1zM651 380h1v1h-1zM654 380h1v1h-1zM657 380h1v1h-1zM660 380h1v1h-1zM663 380h1v1h-1zM666 380h1v1h-1zM669 380h1v1h-1zM672 380h1v1h-1zM675 380h1v1h-1zM678 380h1v1h-1zM681 380h1v1h-1zM684 380h1v1h-1zM687 380h1v1h-1zM690 380h1v1h-1zM693 380h1v1h-1zM696 380h1v1h-1zM699 380h1v1h-1zM702 380h1v1h-1zM705 380h1v1h-1zM708 380h1v1h-1zM711 380h1v1h-1zM714 380h1v1h-1zM717 380h1v1h-1zM720 380h1v1h-1zM723 380h1v1h-1zM726 380h1v1h-1zM729 380h1v1h-1zM732 380h1v1h-1zM735 380h1v1h-1zM738 380h1v1h-1zM741 380h1v1h-1zM744 380h1v1h-1zM747 380h1v1h-1zM750 380h1v1h-1zM45 392h1v1h-1zM48 392h1v1h-1zM51 392h1v1h-1zM54 392h1v1h-1zM57 392h1v1h-1zM60 392h1v1h-1zM63 392h1v1h-1zM66 392h1v1h-1zM69 392h1v1h-1zM72 392h1v1h-1zM75 392h1v1h-1zM78 392h1v1h-1zM81 392h1v1h-1zM84 392h1v1h-1zM87 392h1v1h-1zM90 392h1v1h-1zM93 392h1v1h-1zM96 392h1v1h-1zM99 392h1v1h-1zM102 392h1v1h-1zM105 392h1v1h-1zM108 392h1v1h-1zM111 392h1v1h-1zM114 392h1v1h-1zM117 392h1v1h-1zM120 392h1v1h-1zM123 392h1v1h-1zM126 392h1v1h-1zM129 392h1v1h-1zM132 392h1v1h-1zM135 392h1v1h-1zM138 392h1v1h-1zM141 392h1v1h-1zM144 392h1v1h-1zM147 392h1v1h-1zM150 392h1v1h-1zM153 392h1v1h-1zM156 392h1v1h-1zM159 392h1v1h-1zM162 392h1v1h-1zM165 392h1v1h-1zM168 392h1v1h-1zM171 392h1v1h-1zM174 392h1v1h-1zM177 392h1v1h-1zM180 392h1v1h-1zM183 392h1v1h-1zM186 392h1v1h-1zM189 392h1v1h-1zM192 392h1v1h-1zM195 392h1v1h-1zM198 392h1v1h-1zM201 392h1v1h-1zM204 392h1v1h-1zM207 392h1v1h-1zM210 392h1v1h-1zM213 392h1v1h-1zM216 392h1v1h-1zM219 392h1v1h-1zM222 392h1v1h-1zM225 392h1v1h-1zM228 392h1v1h-1zM231 392h1v1h-1zM234 392h1v1h-1zM237 392h1v1h-1zM240 392h1v1h-1zM243 392h1v1h-1zM246 392h1v1h-1zM249 392h1v1h-1zM252 392h1v1h-1zM255 392h1v1h-1zM258 392h1v1h-1zM261 392h1v1h-1zM264 392h1v1h-1zM267 392h1v1h-1zM270 392h1v1h-1zM273 392h1v1h-1zM276 392h1v1h-1zM279 392h1v1h-1zM282 392h1v1h-1zM285 392h1v1h-1zM288 392h1v1h-1zM291 392h1v1h-1zM294 392h1v1h-1zM297 392h1v1h-1zM300 392h1v1h-1zM303 392h1v1h-1zM306 392h1v1h-1zM309 392h1v1h-1zM312 392h1v1h-1zM315 392h1v1h-1zM318 392h1v1h-1zM321 392h1v1h-1zM324 392h1v1h-1zM327 392h1v1h-1zM330 392h1v1h-1zM333 392h1v1h-1zM336 392h1v1h-1zM339 392h1v1h-1zM342 392h1v1h-1zM345 392h1v1h-1zM348 392h1v1h-1zM351 392h1v1h-1zM354 392h1v1h-1zM357 392h1v1h-1zM360 392h1v1h-1zM363 392h1v1h-1zM366 392h1v1h-1zM369 392h1v1h-1zM372 392h1v1h-1zM375 392h1v1h-1zM378 392h1v1h-1zM381 392h1v1h-1zM384 392h1v1h-1zM387 392h1v1h-1zM390 392h1v1h-1zM393 392h1v1h-1zM396 392h1v1h-1zM399 392h1v1h-1zM402 392h1v1h-1zM405 392h1v1h-1zM408 392h1v1h-1zM411 392h1v1h-1zM414 392h1v1h-1zM417 392h1v1h-1zM420 392h1v1h-1zM423 392h1v1h-1zM426 392h1v1h-1zM429 392h1v1h-1zM432 392h1v1h-1zM435 392h1v1h-1zM438 392h1v1h-1zM441 392h1v1h-1zM444 392h1v1h-1zM447 392h1v1h-1zM450 392h1v1h-1zM453 392h1v1h-1zM456 392h1v1h-1zM459 392h1v1h-1zM462 392h1v1h-1zM465 392h1v1h-1zM468 392h1v1h-1zM471 392h1v1h-1zM474 392h1v1h-1zM477 392h1v1h-1zM480 392h1v1h-1zM483 392h1v1h-1zM486 392h1v1h-1zM489 392h1v1h-1zM492 392h1v1h-1zM495 392h1v1h-1zM498 392h1v1h-1zM501 392h1v1h-1zM504 392h1v1h-1zM507 392h1v1h-1zM510 392h1v1h-1zM513 392h1v1h-1zM516 392h1v1h-1zM519 392h1v1h-1zM522 392h1v1h-1zM525 392h1v1h-1zM528 392h1v1h-1zM531 392h1v1h-1zM534 392h1v1h-1zM537 392h1v1h-1zM540 392h1v1h-1zM543 392h1v1h-1zM546 392h1v1h-1zM549 392h1v1h-1zM552 392h1v1h-1zM555 392h1v1h-1zM558 392h1v1h-1zM561 392h1v1h-1zM564 392h1v1h-1zM567 392h1v1h-1zM570 392h1v1h-1zM573 392h1v1h-1zM576 392h1v1h-1zM579 392h1v1h-1zM582 392h1v1h-1zM585 392h1v1h-1zM588 392h1v1h-1zM591 392h1v1h-1zM594 392h1v1h-1zM597 392h1v1h-1zM600 392h1v1h-1zM603 392h1v1h-1zM606 392h1v1h-1zM609 392h1v1h-1zM612 392h1v1h-1zM615 392h1v1h-1zM618 392h1v1h-1zM621 392h1v1h-1zM624 392h1v1h-1zM627 392h1v1h-1zM630 392h1v1h-1zM633 392h1v1h-1zM636 392h1v1h-1zM639 392h1v1h-1zM642 392h1v1h-1zM645 392h1v1h-1zM648 392h1v1h-1zM651 392h1v1h-1zM654 392h1v1h-1zM657 392h1v1h-1zM660 392h1v1h-1zM663 392h1v1h-1zM666 392h1v1h-1zM669 392h1v1h-1zM672 392h1v1h-1zM675 392h1v1h-1zM678 392h1v1h-1zM681 392h1v1h-1zM684 392h1v1h-1zM687 392h1v1h-1zM690 392h1v1h-1zM693 392h1v1h-1zM696 392h1v1h-1zM699 392h1v1h-1zM702 392h1v1h-1zM705 392h1v1h-1zM708 392h1v1h-1zM711 392h1v1h-1zM714 392h1v1h-1zM717 392h1v1h-1zM720 392h1v1h-1zM723 392h1v1h-1zM726 392h1v1h-1zM729 392h1v1h-1zM732 392h1v1h-1zM735 392h1v1h-1zM738 392h1v1h-1zM741 392h1v1h-1zM744 392h1v1h-1zM747 392h1v1h-1zM750 392h1v1h-1zM45 396h1v1h-1zM48 396h1v1h-1zM51 396h1v1h-1zM54 396h1v1h-1zM57 396h1v1h-1zM60 396h1v1h-1zM63 396h1v1h-1zM66 396h1v1h-1zM69 396h1v1h-1zM72 396h1v1h-1zM75 396h1v1h-1zM78 396h1v1h-1zM81 396h1v1h-1zM84 396h1v1h-1zM87 396h1v1h-1zM90 396h1v1h-1zM93 396h1v1h-1zM96 396h1v1h-1zM99 396h1v1h-1zM102 396h1v1h-1zM105 396h1v1h-1zM108 396h1v1h-1zM111 396h1v1h-1zM114 396h1v1h-1zM117 396h1v1h-1zM120 396h1v1h-1zM123 396h1v1h-1zM126 396h1v1h-1zM129 396h1v1h-1zM132 396h1v1h-1zM135 396h1v1h-1zM138 396h1v1h-1zM141 396h1v1h-1zM144 396h1v1h-1zM147 396h1v1h-1zM150 396h1v1h-1zM153 396h1v1h-1zM156 396h1v1h-1zM159 396h1v1h-1zM162 396h1v1h-1zM165 396h1v1h-1zM168 396h1v1h-1zM171 396h1v1h-1zM174 396h1v1h-1zM177 396h1v1h-1zM180 396h1v1h-1zM183 396h1v1h-1zM186 396h1v1h-1zM189 396h1v1h-1zM192 396h1v1h-1zM195 396h1v1h-1zM198 396h1v1h-1zM201 396h1v1h-1zM204 396h1v1h-1zM207 396h1v1h-1zM210 396h1v1h-1zM213 396h1v1h-1zM216 396h1v1h-1zM219 396h1v1h-1zM222 396h1v1h-1zM225 396h1v1h-1zM228 396h1v1h-1zM231 396h1v1h-1zM234 396h1v1h-1zM237 396h1v1h-1zM240 396h1v1h-1zM243 396h1v1h-1zM246 396h1v1h-1zM249 396h1v1h-1zM252 396h1v1h-1zM255 396h1v1h-1zM258 396h1v1h-1zM261 396h1v1h-1zM264 396h1v1h-1zM267 396h1v1h-1zM270 396h1v1h-1zM273 396h1v1h-1zM276 396h1v1h-1zM279 396h1v1h-1zM282 396h1v1h-1zM285 396h1v1h-1zM288 396h1v1h-1zM291 396h1v1h-1zM294 396h1v1h-1zM297 396h1v1h-1zM300 396h1v1h-1zM303 396h1v1h-1zM306 396h1v1h-1zM309 396h1v1h-1zM312 396h1v1h-1zM315 396h1v1h-1zM318 396h1v1h-1zM321 396h1v1h-1zM324 396h1v1h-1zM327 396h1v1h-1zM330 396h1v1h-1zM333 396h1v1h-1zM336 396h1v1h-1zM339 396h1v1h-1zM342 396h1v1h-1zM345 396h1v1h-1zM348 396h1v1h-1zM351 396h1v1h-1zM354 396h1v1h-1zM357 396h1v1h-1zM360 396h1v1h-1zM363 396h1v1h-1zM366 396h1v1h-1zM369 396h1v1h-1zM372 396h1v1h-1zM375 396h1v1h-1zM378 396h1v1h-1zM381 396h1v1h-1zM384 396h1v1h-1zM387 396h1v1h-1zM390 396h1v1h-1zM393 396h1v1h-1zM396 396h1v1h-1zM399 396h1v1h-1zM402 396h1v1h-1zM405 396h1v1h-1zM408 396h1v1h-1zM411 396h1v1h-1zM414 396h1v1h-1zM417 396h1v1h-1zM420 396h1v1h-1zM423 396h1v1h-1zM426 396h1v1h-1zM429 396h1v1h-1zM432 396h1v1h-1zM435 396h1v1h-1zM438 396h1v1h-1zM441 396h1v1h-1zM444 396h1v1h-1zM447 396h1v1h-1zM450 396h1v1h-1zM453 396h1v1h-1zM456 396h1v1h-1zM459 396h1v1h-1zM462 396h1v1h-1zM465 396h1v1h-1zM468 396h1v1h-1zM471 396h1v1h-1zM474 396h1v1h-1zM477 396h1v1h-1zM480 396h1v1h-1zM483 396h1v1h-1zM486 396h1v1h-1zM489 396h1v1h-1zM492 396h1v1h-1zM495 396h1v1h-1zM498 396h1v1h-1zM501 396h1v1h-1zM504 396h1v1h-1zM507 396h1v1h-1zM510 396h1v1h-1zM513 396h1v1h-1zM516 396h1v1h-1zM519 396h1v1h-1zM522 396h1v1h-1zM525 396h1v1h-1zM528 396h1v1h-1zM531 396h1v1h-1zM534 396h1v1h-1zM537 396h1v1h-1zM540 396h1v1h-1zM543 396h1v1h-1zM546 396h1v1h-1zM549 396h1v1h-1zM552 396h1v1h-1zM555 396h1v1h-1zM558 396h1v1h-1zM561 396h1v1h-1zM564 396h1v1h-1zM567 396h1v1h-1zM570 396h1v1h-1zM573 396h1v1h-1zM576 396h1v1h-1zM579 396h1v1h-1zM582 396h1v1h-1zM585 396h1v1h-1zM588 396h1v1h-1zM591 396h1v1h-1zM594 396h1v1h-1zM597 396h1v1h-1zM600 396h1v1h-1zM603 396h1v1h-1zM606 396h1v1h-1zM609 396h1v1h-1zM612 396h1v1h-1zM615 396h1v1h-1zM618 396h1v1h-1zM621 396h1v1h-1zM624 396h1v1h-1zM627 396h1v1h-1zM630 396h1v1h-1zM633 396h1v1h-1zM636 396h1v1h-1zM639 396h1v1h-1zM642 396h1v1h-1zM645 396h1v1h-1zM648 396h1v1h-1zM651 396h1v1h-1zM654 396h1v1h-1zM657 396h1v1h-1zM660 396h1v1h-1zM663 396h1v1h-1zM666 396h1v1h-1zM669 396h1v1h-1zM672 396h1v1h-1zM675 396h1v1h-1zM678 396h1v1h-1zM681 396h1v1h-1zM684 396h1v1h-1zM687 396h1v1h-1zM690 396h1v1h-1zM693 396h1v1h-1zM696 396h1v1h-1zM699 396h1v1h-1zM702 396h1v1h-1zM705 396h1v1h-1zM708 396h1v1h-1zM711 396h1v1h-1zM714 396h1v1h-1zM717 396h1v1h-1zM720 396h1v1h-1zM723 396h1v1h-1zM726 396h1v1h-1zM729 396h1v1h-1zM732 396h1v1h-1zM735 396h1v1h-1zM738 396h1v1h-1zM741 396h1v1h-1zM744 396h1v1h-1zM747 396h1v1h-1zM750 396h1v1h-1zM45 401h1v1h-1zM48 401h1v1h-1zM51 401h1v1h-1zM54 401h1v1h-1zM57 401h1v1h-1zM60 401h1v1h-1zM63 401h1v1h-1zM66 401h1v1h-1zM69 401h1v1h-1zM72 401h1v1h-1zM75 401h1v1h-1zM78 401h1v1h-1zM81 401h1v1h-1zM84 401h1v1h-1zM87 401h1v1h-1zM90 401h1v1h-1zM93 401h1v1h-1zM96 401h1v1h-1zM99 401h1v1h-1zM102 401h1v1h-1zM105 401h1v1h-1zM108 401h1v1h-1zM111 401h1v1h-1zM114 401h1v1h-1zM117 401h1v1h-1zM120 401h1v1h-1zM123 401h1v1h-1zM126 401h1v1h-1zM129 401h1v1h-1zM132 401h1v1h-1zM135 401h1v1h-1zM138 401h1v1h-1zM141 401h1v1h-1zM144 401h1v1h-1zM147 401h1v1h-1zM150 401h1v1h-1zM153 401h1v1h-1zM156 401h1v1h-1zM159 401h1v1h-1zM162 401h1v1h-1zM165 401h1v1h-1zM168 401h1v1h-1zM171 401h1v1h-1zM174 401h1v1h-1zM177 401h1v1h-1zM180 401h1v1h-1zM183 401h1v1h-1zM186 401h1v1h-1zM189 401h1v1h-1zM192 401h1v1h-1zM195 401h1v1h-1zM198 401h1v1h-1zM201 401h1v1h-1zM204 401h1v1h-1zM207 401h1v1h-1zM210 401h1v1h-1zM213 401h1v1h-1zM216 401h1v1h-1zM219 401h1v1h-1zM222 401h1v1h-1zM225 401h1v1h-1zM228 401h1v1h-1zM231 401h1v1h-1zM234 401h1v1h-1zM237 401h1v1h-1zM240 401h1v1h-1zM243 401h1v1h-1zM246 401h1v1h-1zM249 401h1v1h-1zM252 401h1v1h-1zM255 401h1v1h-1zM258 401h1v1h-1zM261 401h1v1h-1zM264 401h1v1h-1zM267 401h1v1h-1zM270 401h1v1h-1zM273 401h1v1h-1zM276 401h1v1h-1zM279 401h1v1h-1zM282 401h1v1h-1zM285 401h1v1h-1zM288 401h1v1h-1zM291 401h1v1h-1zM294 401h1v1h-1zM297 401h1v1h-1zM300 401h1v1h-1zM303 401h1v1h-1zM306 401h1v1h-1zM309 401h1v1h-1zM312 401h1v1h-1zM315 401h1v1h-1zM318 401h1v1h-1zM321 401h1v1h-1zM324 401h1v1h-1zM327 401h1v1h-1zM330 401h1v1h-1zM333 401h1v1h-1zM336 401h1v1h-1zM339 401h1v1h-1zM342 401h1v1h-1zM345 401h1v1h-1zM348 401h1v1h-1zM351 401h1v1h-1zM354 401h1v1h-1zM357 401h1v1h-1zM360 401h1v1h-1zM363 401h1v1h-1zM366 401h1v1h-1zM369 401h1v1h-1zM372 401h1v1h-1zM375 401h1v1h-1zM378 401h1v1h-1zM381 401h1v1h-1zM384 401h1v1h-1zM387 401h1v1h-1zM390 401h1v1h-1zM393 401h1v1h-1zM396 401h1v1h-1zM399 401h1v1h-1zM402 401h1v1h-1zM405 401h1v1h-1zM408 401h1v1h-1zM411 401h1v1h-1zM414 401h1v1h-1zM417 401h1v1h-1zM420 401h1v1h-1zM423 401h1v1h-1zM426 401h1v1h-1zM429 401h1v1h-1zM432 401h1v1h-1zM435 401h1v1h-1zM438 401h1v1h-1zM441 401h1v1h-1zM444 401h1v1h-1zM447 401h1v1h-1zM450 401h1v1h-1zM453 401h1v1h-1zM456 401h1v1h-1zM459 401h1v1h-1zM462 401h1v1h-1zM465 401h1v1h-1zM468 401h1v1h-1zM471 401h1v1h-1zM474 401h1v1h-1zM477 401h1v1h-1zM480 401h1v1h-1zM483 401h1v1h-1zM486 401h1v1h-1zM489 401h1v1h-1zM492 401h1v1h-1zM495 401h1v1h-1zM498 401h1v1h-1zM501 401h1v1h-1zM504 401h1v1h-1zM507 401h1v1h-1zM510 401h1v1h-1zM513 401h1v1h-1zM516 401h1v1h-1zM519 401h1v1h-1zM522 401h1v1h-1zM525 401h1v1h-1zM528 401h1v1h-1zM531 401h1v1h-1zM534 401h1v1h-1zM537 401h1v1h-1zM540 401h1v1h-1zM543 401h1v1h-1zM546 401h1v1h-1zM549 401h1v1h-1zM552 401h1v1h-1zM555 401h1v1h-1zM558 401h1v1h-1zM561 401h1v1h-1zM564 401h1v1h-1zM567 401h1v1h-1zM570 401h1v1h-1zM573 401h1v1h-1zM576 401h1v1h-1zM579 401h1v1h-1zM582 401h1v1h-1zM585 401h1v1h-1zM588 401h1v1h-1zM591 401h1v1h-1zM594 401h1v1h-1zM597 401h1v1h-1zM600 401h1v1h-1zM603 401h1v1h-1zM606 401h1v1h-1zM609 401h1v1h-1zM612 401h1v1h-1zM615 401h1v1h-1zM618 401h1v1h-1zM621 401h1v1h-1zM624 401h1v1h-1zM627 401h1v1h-1zM630 401h1v1h-1zM633 401h1v1h-1zM636 401h1v1h-1zM639 401h1v1h-1zM642 401h1v1h-1zM645 401h1v1h-1zM648 401h1v1h-1zM651 401h1v1h-1zM654 401h1v1h-1zM657 401h1v1h-1zM660 401h1v1h-1zM663 401h1v1h-1zM666 401h1v1h-1zM669 401h1v1h-1zM672 401h1v1h-1zM675 401h1v1h-1zM678 401h1v1h-1zM681 401h1v1h-1zM684 401h1v1h-1zM687 401h1v1h-1zM690 401h1v1h-1zM693 401h1v1h-1zM696 401h1v1h-1zM699 401h1v1h-1zM702 401h1v1h-1zM705 401h1v1h-1zM708 401h1v1h-1zM711 401h1v1h-1zM714 401h1v1h-1zM717 401h1v1h-1zM720 401h1v1h-1zM723 401h1v1h-1zM726 401h1v1h-1zM729 401h1v1h-1zM732 401h1v1h-1zM735 401h1v1h-1zM738 401h1v1h-1zM741 401h1v1h-1zM744 401h1v1h-1zM747 401h1v1h-1zM750 401h1v1h-1zM45 408h1v1h-1zM48 408h1v1h-1zM51 408h1v1h-1zM54 408h1v1h-1zM57 408h1v1h-1zM60 408h1v1h-1zM63 408h1v1h-1zM66 408h1v1h-1zM69 408h1v1h-1zM72 408h1v1h-1zM75 408h1v1h-1zM78 408h1v1h-1zM81 408h1v1h-1zM84 408h1v1h-1zM87 408h1v1h-1zM90 408h1v1h-1zM93 408h1v1h-1zM96 408h1v1h-1zM99 408h1v1h-1zM102 408h1v1h-1zM105 408h1v1h-1zM108 408h1v1h-1zM111 408h1v1h-1zM114 408h1v1h-1zM117 408h1v1h-1zM120 408h1v1h-1zM123 408h1v1h-1zM126 408h1v1h-1zM129 408h1v1h-1zM132 408h1v1h-1zM135 408h1v1h-1zM138 408h1v1h-1zM141 408h1v1h-1zM144 408h1v1h-1zM147 408h1v1h-1zM150 408h1v1h-1zM153 408h1v1h-1zM156 408h1v1h-1zM159 408h1v1h-1zM162 408h1v1h-1zM165 408h1v1h-1zM168 408h1v1h-1zM171 408h1v1h-1zM174 408h1v1h-1zM177 408h1v1h-1zM180 408h1v1h-1zM183 408h1v1h-1zM186 408h1v1h-1zM189 408h1v1h-1zM192 408h1v1h-1zM195 408h1v1h-1zM198 408h1v1h-1zM201 408h1v1h-1zM204 408h1v1h-1zM207 408h1v1h-1zM210 408h1v1h-1zM213 408h1v1h-1zM216 408h1v1h-1zM219 408h1v1h-1zM222 408h1v1h-1zM225 408h1v1h-1zM228 408h1v1h-1zM231 408h1v1h-1zM234 408h1v1h-1zM237 408h1v1h-1zM240 408h1v1h-1zM243 408h1v1h-1zM246 408h1v1h-1zM249 408h1v1h-1zM252 408h1v1h-1zM255 408h1v1h-1zM258 408h1v1h-1zM261 408h1v1h-1zM264 408h1v1h-1zM267 408h1v1h-1zM270 408h1v1h-1zM273 408h1v1h-1zM276 408h1v1h-1zM279 408h1v1h-1zM282 408h1v1h-1zM285 408h1v1h-1zM288 408h1v1h-1zM291 408h1v1h-1zM294 408h1v1h-1zM297 408h1v1h-1zM300 408h1v1h-1zM303 408h1v1h-1zM306 408h1v1h-1zM309 408h1v1h-1zM312 408h1v1h-1zM315 408h1v1h-1zM318 408h1v1h-1zM321 408h1v1h-1zM324 408h1v1h-1zM327 408h1v1h-1zM330 408h1v1h-1zM333 408h1v1h-1zM336 408h1v1h-1zM339 408h1v1h-1zM342 408h1v1h-1zM345 408h1v1h-1zM348 408h1v1h-1zM351 408h1v1h-1zM354 408h1v1h-1zM357 408h1v1h-1zM360 408h1v1h-1zM363 408h1v1h-1zM366 408h1v1h-1zM369 408h1v1h-1zM372 408h1v1h-1zM375 408h1v1h-1zM378 408h1v1h-1zM381 408h1v1h-1zM384 408h1v1h-1zM387 408h1v1h-1zM390 408h1v1h-1zM393 408h1v1h-1zM396 408h1v1h-1zM399 408h1v1h-1zM402 408h1v1h-1zM405 408h1v1h-1zM408 408h1v1h-1zM411 408h1v1h-1zM414 408h1v1h-1zM417 408h1v1h-1zM420 408h1v1h-1zM423 408h1v1h-1zM426 408h1v1h-1zM429 408h1v1h-1zM432 408h1v1h-1zM435 408h1v1h-1zM438 408h1v1h-1zM441 408h1v1h-1zM444 408h1v1h-1zM447 408h1v1h-1zM450 408h1v1h-1zM453 408h1v1h-1zM456 408h1v1h-1zM459 408h1v1h-1zM462 408h1v1h-1zM465 408h1v1h-1zM468 408h1v1h-1zM471 408h1v1h-1zM474 408h1v1h-1zM477 408h1v1h-1zM480 408h1v1h-1zM483 408h1v1h-1zM486 408h1v1h-1zM489 408h1v1h-1zM492 408h1v1h-1zM495 408h1v1h-1zM498 408h1v1h-1zM501 408h1v1h-1zM504 408h1v1h-1zM507 408h1v1h-1zM510 408h1v1h-1zM513 408h1v1h-1zM516 408h1v1h-1zM519 408h1v1h-1zM522 408h1v1h-1zM525 408h1v1h-1zM528 408h1v1h-1zM531 408h1v1h-1zM534 408h1v1h-1zM537 408h1v1h-1zM540 408h1v1h-1zM543 408h1v1h-1zM546 408h1v1h-1zM549 408h1v1h-1zM552 408h1v1h-1zM555 408h1v1h-1zM558 408h1v1h-1zM561 408h1v1h-1zM564 408h1v1h-1zM567 408h1v1h-1zM570 408h1v1h-1zM573 408h1v1h-1zM576 408h1v1h-1zM579 408h1v1h-1zM582 408h1v1h-1zM585 408h1v1h-1zM588 408h1v1h-1zM591 408h1v1h-1zM594 408h1v1h-1zM597 408h1v1h-1zM600 408h1v1h-1zM603 408h1v1h-1zM606 408h1v1h-1zM609 408h1v1h-1zM612 408h1v1h-1zM615 408h1v1h-1zM618 408h1v1h-1zM621 408h1v1h-1zM624 408h1v1h-1zM627 408h1v1h-1zM630 408h1v1h-1zM633 408h1v1h-1zM636 408h1v1h-1zM639 408h1v1h-1zM642 408h1v1h-1zM645 408h1v1h-1zM648 408h1v1h-1zM651 408h1v1h-1zM654 408h1v1h-1zM657 408h1v1h-1zM660 408h1v1h-1zM663 408h1v1h-1zM666 408h1v1h-1zM669 408h1v1h-1zM672 408h1v1h-1zM675 408h1v1h-1zM678 408h1v1h-1zM681 408h1v1h-1zM684 408h1v1h-1zM687 408h1v1h-1zM690 408h1v1h-1zM693 408h1v1h-1zM696 408h1v1h-1zM699 408h1v1h-1zM702 408h1v1h-1zM705 408h1v1h-1zM708 408h1v1h-1zM711 408h1v1h-1zM714 408h1v1h-1zM717 408h1v1h-1zM720 408h1v1h-1zM723 408h1v1h-1zM726 408h1v1h-1zM729 408h1v1h-1zM732 408h1v1h-1zM735 408h1v1h-1zM738 408h1v1h-1zM741 408h1v1h-1zM744 408h1v1h-1zM747 408h1v1h-1zM750 408h1v1h-1zM45 421h1v1h-1zM48 421h1v1h-1zM51 421h1v1h-1zM54 421h1v1h-1zM57 421h1v1h-1zM60 421h1v1h-1zM63 421h1v1h-1zM66 421h1v1h-1zM69 421h1v1h-1zM72 421h1v1h-1zM75 421h1v1h-1zM78 421h1v1h-1zM81 421h1v1h-1zM84 421h1v1h-1zM87 421h1v1h-1zM90 421h1v1h-1zM93 421h1v1h-1zM96 421h1v1h-1zM99 421h1v1h-1zM102 421h1v1h-1zM105 421h1v1h-1zM108 421h1v1h-1zM111 421h1v1h-1zM114 421h1v1h-1zM117 421h1v1h-1zM120 421h1v1h-1zM123 421h1v1h-1zM126 421h1v1h-1zM129 421h1v1h-1zM132 421h1v1h-1zM135 421h1v1h-1zM138 421h1v1h-1zM141 421h1v1h-1zM144 421h1v1h-1zM147 421h1v1h-1zM150 421h1v1h-1zM153 421h1v1h-1zM156 421h1v1h-1zM159 421h1v1h-1zM162 421h1v1h-1zM165 421h1v1h-1zM168 421h1v1h-1zM171 421h1v1h-1zM174 421h1v1h-1zM177 421h1v1h-1zM180 421h1v1h-1zM183 421h1v1h-1zM186 421h1v1h-1zM189 421h1v1h-1zM192 421h1v1h-1zM195 421h1v1h-1zM198 421h1v1h-1zM201 421h1v1h-1zM204 421h1v1h-1zM207 421h1v1h-1zM210 421h1v1h-1zM213 421h1v1h-1zM216 421h1v1h-1zM219 421h1v1h-1zM222 421h1v1h-1zM225 421h1v1h-1zM228 421h1v1h-1zM231 421h1v1h-1zM234 421h1v1h-1zM237 421h1v1h-1zM240 421h1v1h-1zM243 421h1v1h-1zM246 421h1v1h-1zM249 421h1v1h-1zM252 421h1v1h-1zM255 421h1v1h-1zM258 421h1v1h-1zM261 421h1v1h-1zM264 421h1v1h-1zM267 421h1v1h-1zM270 421h1v1h-1zM273 421h1v1h-1zM276 421h1v1h-1zM279 421h1v1h-1zM282 421h1v1h-1zM285 421h1v1h-1zM288 421h1v1h-1zM291 421h1v1h-1zM294 421h1v1h-1zM297 421h1v1h-1zM300 421h1v1h-1zM303 421h1v1h-1zM306 421h1v1h-1zM309 421h1v1h-1zM312 421h1v1h-1zM315 421h1v1h-1zM318 421h1v1h-1zM321 421h1v1h-1zM324 421h1v1h-1zM327 421h1v1h-1zM330 421h1v1h-1zM333 421h1v1h-1zM336 421h1v1h-1zM339 421h1v1h-1zM342 421h1v1h-1zM345 421h1v1h-1zM348 421h1v1h-1zM351 421h1v1h-1zM354 421h1v1h-1zM357 421h1v1h-1zM360 421h1v1h-1zM363 421h1v1h-1zM366 421h1v1h-1zM369 421h1v1h-1zM372 421h1v1h-1zM375 421h1v1h-1zM378 421h1v1h-1zM381 421h1v1h-1zM384 421h1v1h-1zM387 421h1v1h-1zM390 421h1v1h-1zM393 421h1v1h-1zM396 421h1v1h-1zM399 421h1v1h-1zM402 421h1v1h-1zM405 421h1v1h-1zM408 421h1v1h-1zM411 421h1v1h-1zM414 421h1v1h-1zM417 421h1v1h-1zM420 421h1v1h-1zM423 421h1v1h-1zM426 421h1v1h-1zM429 421h1v1h-1zM432 421h1v1h-1zM435 421h1v1h-1zM438 421h1v1h-1zM441 421h1v1h-1zM444 421h1v1h-1zM447 421h1v1h-1zM450 421h1v1h-1zM453 421h1v1h-1zM456 421h1v1h-1zM459 421h1v1h-1zM462 421h1v1h-1zM465 421h1v1h-1zM468 421h1v1h-1zM471 421h1v1h-1zM474 421h1v1h-1zM477 421h1v1h-1zM480 421h1v1h-1zM483 421h1v1h-1zM486 421h1v1h-1zM489 421h1v1h-1zM492 421h1v1h-1zM495 421h1v1h-1zM498 421h1v1h-1zM501 421h1v1h-1zM504 421h1v1h-1zM507 421h1v1h-1zM510 421h1v1h-1zM513 421h1v1h-1zM516 421h1v1h-1zM519 421h1v1h-1zM522 421h1v1h-1zM525 421h1v1h-1zM528 421h1v1h-1zM531 421h1v1h-1zM534 421h1v1h-1zM537 421h1v1h-1zM540 421h1v1h-1zM543 421h1v1h-1zM546 421h1v1h-1zM549 421h1v1h-1zM552 421h1v1h-1zM555 421h1v1h-1zM558 421h1v1h-1zM561 421h1v1h-1zM564 421h1v1h-1zM567 421h1v1h-1zM570 421h1v1h-1zM573 421h1v1h-1zM576 421h1v1h-1zM579 421h1v1h-1zM582 421h1v1h-1zM585 421h1v1h-1zM588 421h1v1h-1zM591 421h1v1h-1zM594 421h1v1h-1zM597 421h1v1h-1zM600 421h1v1h-1zM603 421h1v1h-1zM606 421h1v1h-1zM609 421h1v1h-1zM612 421h1v1h-1zM615 421h1v1h-1zM618 421h1v1h-1zM621 421h1v1h-1zM624 421h1v1h-1zM627 421h1v1h-1zM630 421h1v1h-1zM633 421h1v1h-1zM636 421h1v1h-1zM639 421h1v1h-1zM642 421h1v1h-1zM645 421h1v1h-1zM648 421h1v1h-1zM651 421h1v1h-1zM654 421h1v1h-1zM657 421h1v1h-1zM660 421h1v1h-1zM663 421h1v1h-1zM666 421h1v1h-1zM669 421h1v1h-1zM672 421h1v1h-1zM675 421h1v1h-1zM678 421h1v1h-1zM681 421h1v1h-1zM684 421h1v1h-1zM687 421h1v1h-1zM690 421h1v1h-1zM693 421h1v1h-1zM696 421h1v1h-1zM699 421h1v1h-1zM702 421h1v1h-1zM705 421h1v1h-1zM708 421h1v1h-1zM711 421h1v1h-1zM714 421h1v1h-1zM717 421h1v1h-1zM720 421h1v1h-1zM723 421h1v1h-1zM726 421h1v1h-1zM729 421h1v1h-1zM732 421h1v1h-1zM735 421h1v1h-1zM738 421h1v1h-1zM741 421h1v1h-1zM744 421h1v1h-1zM747 421h1v1h-1zM750 421h1v1h-1zM45 433h1v1h-1zM48 433h1v1h-1zM51 433h1v1h-1zM54 433h1v1h-1zM57 433h1v1h-1zM60 433h1v1h-1zM63 433h1v1h-1zM66 433h1v1h-1zM69 433h1v1h-1zM72 433h1v1h-1zM75 433h1v1h-1zM78 433h1v1h-1zM81 433h1v1h-1zM84 433h1v1h-1zM87 433h1v1h-1zM90 433h1v1h-1zM93 433h1v1h-1zM96 433h1v1h-1zM99 433h1v1h-1zM102 433h1v1h-1zM105 433h1v1h-1zM108 433h1v1h-1zM111 433h1v1h-1zM114 433h1v1h-1zM117 433h1v1h-1zM120 433h1v1h-1zM123 433h1v1h-1zM126 433h1v1h-1zM129 433h1v1h-1zM132 433h1v1h-1zM135 433h1v1h-1zM138 433h1v1h-1zM141 433h1v1h-1zM144 433h1v1h-1zM147 433h1v1h-1zM150 433h1v1h-1zM153 433h1v1h-1zM156 433h1v1h-1zM159 433h1v1h-1zM162 433h1v1h-1zM165 433h1v1h-1zM168 433h1v1h-1zM171 433h1v1h-1zM174 433h1v1h-1zM177 433h1v1h-1zM180 433h1v1h-1zM183 433h1v1h-1zM186 433h1v1h-1zM189 433h1v1h-1zM192 433h1v1h-1zM195 433h1v1h-1zM198 433h1v1h-1zM201 433h1v1h-1zM204 433h1v1h-1zM207 433h1v1h-1zM210 433h1v1h-1zM213 433h1v1h-1zM216 433h1v1h-1zM219 433h1v1h-1zM222 433h1v1h-1zM225 433h1v1h-1zM228 433h1v1h-1zM231 433h1v1h-1zM234 433h1v1h-1zM237 433h1v1h-1zM240 433h1v1h-1zM243 433h1v1h-1zM246 433h1v1h-1zM249 433h1v1h-1zM252 433h1v1h-1zM255 433h1v1h-1zM258 433h1v1h-1zM261 433h1v1h-1zM264 433h1v1h-1zM267 433h1v1h-1zM270 433h1v1h-1zM273 433h1v1h-1zM276 433h1v1h-1zM279 433h1v1h-1zM282 433h1v1h-1zM285 433h1v1h-1zM288 433h1v1h-1zM291 433h1v1h-1zM294 433h1v1h-1zM297 433h1v1h-1zM300 433h1v1h-1zM303 433h1v1h-1zM306 433h1v1h-1zM309 433h1v1h-1zM312 433h1v1h-1zM315 433h1v1h-1zM318 433h1v1h-1zM321 433h1v1h-1zM324 433h1v1h-1zM327 433h1v1h-1zM330 433h1v1h-1zM333 433h1v1h-1zM336 433h1v1h-1zM339 433h1v1h-1zM342 433h1v1h-1zM345 433h1v1h-1zM348 433h1v1h-1zM351 433h1v1h-1zM354 433h1v1h-1zM357 433h1v1h-1zM360 433h1v1h-1zM363 433h1v1h-1zM366 433h1v1h-1zM369 433h1v1h-1zM372 433h1v1h-1zM375 433h1v1h-1zM378 433h1v1h-1zM381 433h1v1h-1zM384 433h1v1h-1zM387 433h1v1h-1zM390 433h1v1h-1zM393 433h1v1h-1zM396 433h1v1h-1zM399 433h1v1h-1zM402 433h1v1h-1zM405 433h1v1h-1zM408 433h1v1h-1zM411 433h1v1h-1zM414 433h1v1h-1zM417 433h1v1h-1zM420 433h1v1h-1zM423 433h1v1h-1zM426 433h1v1h-1zM429 433h1v1h-1zM432 433h1v1h-1zM435 433h1v1h-1zM438 433h1v1h-1zM441 433h1v1h-1zM444 433h1v1h-1zM447 433h1v1h-1zM450 433h1v1h-1zM453 433h1v1h-1zM456 433h1v1h-1zM459 433h1v1h-1zM462 433h1v1h-1zM465 433h1v1h-1zM468 433h1v1h-1zM471 433h1v1h-1zM474 433h1v1h-1zM477 433h1v1h-1zM480 433h1v1h-1zM483 433h1v1h-1zM486 433h1v1h-1zM489 433h1v1h-1zM492 433h1v1h-1zM495 433h1v1h-1zM498 433h1v1h-1zM501 433h1v1h-1zM504 433h1v1h-1zM507 433h1v1h-1zM510 433h1v1h-1zM513 433h1v1h-1zM516 433h1v1h-1zM519 433h1v1h-1zM522 433h1v1h-1zM525 433h1v1h-1zM528 433h1v1h-1zM531 433h1v1h-1zM534 433h1v1h-1zM537 433h1v1h-1zM540 433h1v1h-1zM543 433h1v1h-1zM546 433h1v1h-1zM549 433h1v1h-1zM552 433h1v1h-1zM555 433h1v1h-1zM558 433h1v1h-1zM561 433h1v1h-1zM564 433h1v1h-1zM567 433h1v1h-1zM570 433h1v1h-1zM573 433h1v1h-1zM576 433h1v1h-1zM579 433h1v1h-1zM582 433h1v1h-1zM585 433h1v1h-1zM588 433h1v1h-1zM591 433h1v1h-1zM594 433h1v1h-1zM597 433h1v1h-1zM600 433h1v1h-1zM603 433h1v1h-1zM606 433h1v1h-1zM609 433h1v1h-1zM612 433h1v1h-1zM615 433h1v1h-1zM618 433h1v1h-1zM621 433h1v1h-1zM624 433h1v1h-1zM627 433h1v1h-1zM630 433h1v1h-1zM633 433h1v1h-1zM636 433h1v1h-1zM639 433h1v1h-1zM642 433h1v1h-1zM645 433h1v1h-1zM648 433h1v1h-1zM651 433h1v1h-1zM654 433h1v1h-1zM657 433h1v1h-1zM660 433h1v1h-1zM663 433h1v1h-1zM666 433h1v1h-1zM669 433h1v1h-1zM672 433h1v1h-1zM675 433h1v1h-1zM678 433h1v1h-1zM681 433h1v1h-1zM684 433h1v1h-1zM687 433h1v1h-1zM690 433h1v1h-1zM693 433h1v1h-1zM696 433h1v1h-1zM699 433h1v1h-1zM702 433h1v1h-1zM705 433h1v1h-1zM708 433h1v1h-1zM711 433h1v1h-1zM714 433h1v1h-1zM717 433h1v1h-1zM720 433h1v1h-1zM723 433h1v1h-1zM726 433h1v1h-1zM729 433h1v1h-1zM732 433h1v1h-1zM735 433h1v1h-1zM738 433h1v1h-1zM741 433h1v1h-1zM744 433h1v1h-1zM747 433h1v1h-1zM750 433h1v1h-1zM45 442h1v1h-1zM48 442h1v1h-1zM51 442h1v1h-1zM54 442h1v1h-1zM57 442h1v1h-1zM60 442h1v1h-1zM63 442h1v1h-1zM66 442h1v1h-1zM69 442h1v1h-1zM72 442h1v1h-1zM75 442h1v1h-1zM78 442h1v1h-1zM81 442h1v1h-1zM84 442h1v1h-1zM87 442h1v1h-1zM90 442h1v1h-1zM93 442h1v1h-1zM96 442h1v1h-1zM99 442h1v1h-1zM102 442h1v1h-1zM105 442h1v1h-1zM108 442h1v1h-1zM111 442h1v1h-1zM114 442h1v1h-1zM117 442h1v1h-1zM120 442h1v1h-1zM123 442h1v1h-1zM126 442h1v1h-1zM129 442h1v1h-1zM132 442h1v1h-1zM135 442h1v1h-1zM138 442h1v1h-1zM141 442h1v1h-1zM144 442h1v1h-1zM147 442h1v1h-1zM150 442h1v1h-1zM153 442h1v1h-1zM156 442h1v1h-1zM159 442h1v1h-1zM162 442h1v1h-1zM165 442h1v1h-1zM168 442h1v1h-1zM171 442h1v1h-1zM174 442h1v1h-1zM177 442h1v1h-1zM180 442h1v1h-1zM183 442h1v1h-1zM186 442h1v1h-1zM189 442h1v1h-1zM192 442h1v1h-1zM195 442h1v1h-1zM198 442h1v1h-1zM201 442h1v1h-1zM204 442h1v1h-1zM207 442h1v1h-1zM210 442h1v1h-1zM213 442h1v1h-1zM216 442h1v1h-1zM219 442h1v1h-1zM222 442h1v1h-1zM225 442h1v1h-1zM228 442h1v1h-1zM231 442h1v1h-1zM234 442h1v1h-1zM237 442h1v1h-1zM240 442h1v1h-1zM243 442h1v1h-1zM246 442h1v1h-1zM249 442h1v1h-1zM252 442h1v1h-1zM255 442h1v1h-1zM258 442h1v1h-1zM261 442h1v1h-1zM264 442h1v1h-1zM267 442h1v1h-1zM270 442h1v1h-1zM273 442h1v1h-1zM276 442h1v1h-1zM279 442h1v1h-1zM282 442h1v1h-1zM285 442h1v1h-1zM288 442h1v1h-1zM291 442h1v1h-1zM294 442h1v1h-1zM297 442h1v1h-1zM300 442h1v1h-1zM303 442h1v1h-1zM306 442h1v1h-1zM309 442h1v1h-1zM312 442h1v1h-1zM315 442h1v1h-1zM318 442h1v1h-1zM321 442h1v1h-1zM324 442h1v1h-1zM327 442h1v1h-1zM330 442h1v1h-1zM333 442h1v1h-1zM336 442h1v1h-1zM339 442h1v1h-1zM342 442h1v1h-1zM345 442h1v1h-1zM348 442h1v1h-1zM351 442h1v1h-1zM354 442h1v1h-1zM357 442h1v1h-1zM360 442h1v1h-1zM363 442h1v1h-1zM366 442h1v1h-1zM369 442h1v1h-1zM372 442h1v1h-1zM375 442h1v1h-1zM378 442h1v1h-1zM381 442h1v1h-1zM384 442h1v1h-1zM387 442h1v1h-1zM390 442h1v1h-1zM393 442h1v1h-1zM396 442h1v1h-1zM399 442h1v1h-1zM402 442h1v1h-1zM405 442h1v1h-1zM408 442h1v1h-1zM411 442h1v1h-1zM414 442h1v1h-1zM417 442h1v1h-1zM420 442h1v1h-1zM423 442h1v1h-1zM426 442h1v1h-1zM429 442h1v1h-1zM432 442h1v1h-1zM435 442h1v1h-1zM438 442h1v1h-1zM441 442h1v1h-1zM444 442h1v1h-1zM447 442h1v1h-1zM450 442h1v1h-1zM453 442h1v1h-1zM456 442h1v1h-1zM459 442h1v1h-1zM462 442h1v1h-1zM465 442h1v1h-1zM468 442h1v1h-1zM471 442h1v1h-1zM474 442h1v1h-1zM477 442h1v1h-1zM480 442h1v1h-1zM483 442h1v1h-1zM486 442h1v1h-1zM489 442h1v1h-1zM492 442h1v1h-1zM495 442h1v1h-1zM498 442h1v1h-1zM501 442h1v1h-1zM504 442h1v1h-1zM507 442h1v1h-1zM510 442h1v1h-1zM513 442h1v1h-1zM516 442h1v1h-1zM519 442h1v1h-1zM522 442h1v1h-1zM525 442h1v1h-1zM528 442h1v1h-1zM531 442h1v1h-1zM534 442h1v1h-1zM537 442h1v1h-1zM540 442h1v1h-1zM543 442h1v1h-1zM546 442h1v1h-1zM549 442h1v1h-1zM552 442h1v1h-1zM555 442h1v1h-1zM558 442h1v1h-1zM561 442h1v1h-1zM564 442h1v1h-1zM567 442h1v1h-1zM570 442h1v1h-1zM573 442h1v1h-1zM576 442h1v1h-1zM579 442h1v1h-1zM582 442h1v1h-1zM585 442h1v1h-1zM588 442h1v1h-1zM591 442h1v1h-1zM594 442h1v1h-1zM597 442h1v1h-1zM600 442h1v1h-1zM603 442h1v1h-1zM606 442h1v1h-1zM609 442h1v1h-1zM612 442h1v1h-1zM615 442h1v1h-1zM618 442h1v1h-1zM621 442h1v1h-1zM624 442h1v1h-1zM627 442h1v1h-1zM630 442h1v1h-1zM633 442h1v1h-1zM636 442h1v1h-1zM639 442h1v1h-1zM642 442h1v1h-1zM645 442h1v1h-1zM648 442h1v1h-1zM651 442h1v1h-1zM654 442h1v1h-1zM657 442h1v1h-1zM660 442h1v1h-1zM663 442h1v1h-1zM666 442h1v1h-1zM669 442h1v1h-1zM672 442h1v1h-1zM675 442h1v1h-1zM678 442h1v1h-1zM681 442h1v1h-1zM684 442h1v1h-1zM687 442h1v1h-1zM690 442h1v1h-1zM693 442h1v1h-1zM696 442h1v1h-1zM699 442h1v1h-1zM702 442h1v1h-1zM705 442h1v1h-1zM708 442h1v1h-1zM711 442h1v1h-1zM714 442h1v1h-1zM717 442h1v1h-1zM720 442h1v1h-1zM723 442h1v1h-1zM726 442h1v1h-1zM729 442h1v1h-1zM732 442h1v1h-1zM735 442h1v1h-1zM738 442h1v1h-1zM741 442h1v1h-1zM744 442h1v1h-1zM747 442h1v1h-1zM750 442h1v1h-1zM45 449h1v1h-1zM48 449h1v1h-1zM51 449h1v1h-1zM54 449h1v1h-1zM57 449h1v1h-1zM60 449h1v1h-1zM63 449h1v1h-1zM66 449h1v1h-1zM69 449h1v1h-1zM72 449h1v1h-1zM75 449h1v1h-1zM78 449h1v1h-1zM81 449h1v1h-1zM84 449h1v1h-1zM87 449h1v1h-1zM90 449h1v1h-1zM93 449h1v1h-1zM96 449h1v1h-1zM99 449h1v1h-1zM102 449h1v1h-1zM105 449h1v1h-1zM108 449h1v1h-1zM111 449h1v1h-1zM114 449h1v1h-1zM117 449h1v1h-1zM120 449h1v1h-1zM123 449h1v1h-1zM126 449h1v1h-1zM129 449h1v1h-1zM132 449h1v1h-1zM135 449h1v1h-1zM138 449h1v1h-1zM141 449h1v1h-1zM144 449h1v1h-1zM147 449h1v1h-1zM150 449h1v1h-1zM153 449h1v1h-1zM156 449h1v1h-1zM159 449h1v1h-1zM162 449h1v1h-1zM165 449h1v1h-1zM168 449h1v1h-1zM171 449h1v1h-1zM174 449h1v1h-1zM177 449h1v1h-1zM180 449h1v1h-1zM183 449h1v1h-1zM186 449h1v1h-1zM189 449h1v1h-1zM192 449h1v1h-1zM195 449h1v1h-1zM198 449h1v1h-1zM201 449h1v1h-1zM204 449h1v1h-1zM207 449h1v1h-1zM210 449h1v1h-1zM213 449h1v1h-1zM216 449h1v1h-1zM219 449h1v1h-1zM222 449h1v1h-1zM225 449h1v1h-1zM228 449h1v1h-1zM231 449h1v1h-1zM234 449h1v1h-1zM237 449h1v1h-1zM240 449h1v1h-1zM243 449h1v1h-1zM246 449h1v1h-1zM249 449h1v1h-1zM252 449h1v1h-1zM255 449h1v1h-1zM258 449h1v1h-1zM261 449h1v1h-1zM264 449h1v1h-1zM267 449h1v1h-1zM270 449h1v1h-1zM273 449h1v1h-1zM276 449h1v1h-1zM279 449h1v1h-1zM282 449h1v1h-1zM285 449h1v1h-1zM288 449h1v1h-1zM291 449h1v1h-1zM294 449h1v1h-1zM297 449h1v1h-1zM300 449h1v1h-1zM303 449h1v1h-1zM306 449h1v1h-1zM309 449h1v1h-1zM312 449h1v1h-1zM315 449h1v1h-1zM318 449h1v1h-1zM321 449h1v1h-1zM324 449h1v1h-1zM327 449h1v1h-1zM330 449h1v1h-1zM333 449h1v1h-1zM336 449h1v1h-1zM339 449h1v1h-1zM342 449h1v1h-1zM345 449h1v1h-1zM348 449h1v1h-1zM351 449h1v1h-1zM354 449h1v1h-1zM357 449h1v1h-1zM360 449h1v1h-1zM363 449h1v1h-1zM366 449h1v1h-1zM369 449h1v1h-1zM372 449h1v1h-1zM375 449h1v1h-1zM378 449h1v1h-1zM381 449h1v1h-1zM384 449h1v1h-1zM387 449h1v1h-1zM390 449h1v1h-1zM393 449h1v1h-1zM396 449h1v1h-1zM399 449h1v1h-1zM402 449h1v1h-1zM405 449h1v1h-1zM408 449h1v1h-1zM411 449h1v1h-1zM414 449h1v1h-1zM417 449h1v1h-1zM420 449h1v1h-1zM423 449h1v1h-1zM426 449h1v1h-1zM429 449h1v1h-1zM432 449h1v1h-1zM435 449h1v1h-1zM438 449h1v1h-1zM441 449h1v1h-1zM444 449h1v1h-1zM447 449h1v1h-1zM450 449h1v1h-1zM453 449h1v1h-1zM456 449h1v1h-1zM459 449h1v1h-1zM462 449h1v1h-1zM465 449h1v1h-1zM468 449h1v1h-1zM471 449h1v1h-1zM474 449h1v1h-1zM477 449h1v1h-1zM480 449h1v1h-1zM483 449h1v1h-1zM486 449h1v1h-1zM489 449h1v1h-1zM492 449h1v1h-1zM495 449h1v1h-1zM498 449h1v1h-1zM501 449h1v1h-1zM504 449h1v1h-1zM507 449h1v1h-1zM510 449h1v1h-1zM513 449h1v1h-1zM516 449h1v1h-1zM519 449h1v1h-1zM522 449h1v1h-1zM525 449h1v1h-1zM528 449h1v1h-1zM531 449h1v1h-1zM534 449h1v1h-1zM537 449h1v1h-1zM540 449h1v1h-1zM543 449h1v1h-1zM546 449h1v1h-1zM549 449h1v1h-1zM552 449h1v1h-1zM555 449h1v1h-1zM558 449h1v1h-1zM561 449h1v1h-1zM564 449h1v1h-1zM567 449h1v1h-1zM570 449h1v1h-1zM573 449h1v1h-1zM576 449h1v1h-1zM579 449h1v1h-1zM582 449h1v1h-1zM585 449h1v1h-1zM588 449h1v1h-1zM591 449h1v1h-1zM594 449h1v1h-1zM597 449h1v1h-1zM600 449h1v1h-1zM603 449h1v1h-1zM606 449h1v1h-1zM609 449h1v1h-1zM612 449h1v1h-1zM615 449h1v1h-1zM618 449h1v1h-1zM621 449h1v1h-1zM624 449h1v1h-1zM627 449h1v1h-1zM630 449h1v1h-1zM633 449h1v1h-1zM636 449h1v1h-1zM639 449h1v1h-1zM642 449h1v1h-1zM645 449h1v1h-1zM648 449h1v1h-1zM651 449h1v1h-1zM654 449h1v1h-1zM657 449h1v1h-1zM660 449h1v1h-1zM663 449h1v1h-1zM666 449h1v1h-1zM669 449h1v1h-1zM672 449h1v1h-1zM675 449h1v1h-1zM678 449h1v1h-1zM681 449h1v1h-1zM684 449h1v1h-1zM687 449h1v1h-1zM690 449h1v1h-1zM693 449h1v1h-1zM696 449h1v1h-1zM699 449h1v1h-1zM702 449h1v1h-1zM705 449h1v1h-1zM708 449h1v1h-1zM711 449h1v1h-1zM714 449h1v1h-1zM717 449h1v1h-1zM720 449h1v1h-1zM723 449h1v1h-1zM726 449h1v1h-1zM729 449h1v1h-1zM732 449h1v1h-1zM735 449h1v1h-1zM738 449h1v1h-1zM741 449h1v1h-1zM744 449h1v1h-1zM747 449h1v1h-1zM750 449h1v1h-1zM45 462h1v1h-1zM48 462h1v1h-1zM51 462h1v1h-1zM54 462h1v1h-1zM57 462h1v1h-1zM60 462h1v1h-1zM63 462h1v1h-1zM66 462h1v1h-1zM69 462h1v1h-1zM72 462h1v1h-1zM75 462h1v1h-1zM78 462h1v1h-1zM81 462h1v1h-1zM84 462h1v1h-1zM87 462h1v1h-1zM90 462h1v1h-1zM93 462h1v1h-1zM96 462h1v1h-1zM99 462h1v1h-1zM102 462h1v1h-1zM105 462h1v1h-1zM108 462h1v1h-1zM111 462h1v1h-1zM114 462h1v1h-1zM117 462h1v1h-1zM120 462h1v1h-1zM123 462h1v1h-1zM126 462h1v1h-1zM129 462h1v1h-1zM132 462h1v1h-1zM135 462h1v1h-1zM138 462h1v1h-1zM141 462h1v1h-1zM144 462h1v1h-1zM147 462h1v1h-1zM150 462h1v1h-1zM153 462h1v1h-1zM156 462h1v1h-1zM159 462h1v1h-1zM162 462h1v1h-1zM165 462h1v1h-1zM168 462h1v1h-1zM171 462h1v1h-1zM174 462h1v1h-1zM177 462h1v1h-1zM180 462h1v1h-1zM183 462h1v1h-1zM186 462h1v1h-1zM189 462h1v1h-1zM192 462h1v1h-1zM195 462h1v1h-1zM198 462h1v1h-1zM201 462h1v1h-1zM204 462h1v1h-1zM207 462h1v1h-1zM210 462h1v1h-1zM213 462h1v1h-1zM216 462h1v1h-1zM219 462h1v1h-1zM222 462h1v1h-1zM225 462h1v1h-1zM228 462h1v1h-1zM231 462h1v1h-1zM234 462h1v1h-1zM237 462h1v1h-1zM240 462h1v1h-1zM243 462h1v1h-1zM246 462h1v1h-1zM249 462h1v1h-1zM252 462h1v1h-1zM255 462h1v1h-1zM258 462h1v1h-1zM261 462h1v1h-1zM264 462h1v1h-1zM267 462h1v1h-1zM270 462h1v1h-1zM273 462h1v1h-1zM276 462h1v1h-1zM279 462h1v1h-1zM282 462h1v1h-1zM285 462h1v1h-1zM288 462h1v1h-1zM291 462h1v1h-1zM294 462h1v1h-1zM297 462h1v1h-1zM300 462h1v1h-1zM303 462h1v1h-1zM306 462h1v1h-1zM309 462h1v1h-1zM312 462h1v1h-1zM315 462h1v1h-1zM318 462h1v1h-1zM321 462h1v1h-1zM324 462h1v1h-1zM327 462h1v1h-1zM330 462h1v1h-1zM333 462h1v1h-1zM336 462h1v1h-1zM339 462h1v1h-1zM342 462h1v1h-1zM345 462h1v1h-1zM348 462h1v1h-1zM351 462h1v1h-1zM354 462h1v1h-1zM357 462h1v1h-1zM360 462h1v1h-1zM363 462h1v1h-1zM366 462h1v1h-1zM369 462h1v1h-1zM372 462h1v1h-1zM375 462h1v1h-1zM378 462h1v1h-1zM381 462h1v1h-1zM384 462h1v1h-1zM387 462h1v1h-1zM390 462h1v1h-1zM393 462h1v1h-1zM396 462h1v1h-1zM399 462h1v1h-1zM402 462h1v1h-1zM405 462h1v1h-1zM408 462h1v1h-1zM411 462h1v1h-1zM414 462h1v1h-1zM417 462h1v1h-1zM420 462h1v1h-1zM423 462h1v1h-1zM426 462h1v1h-1zM429 462h1v1h-1zM432 462h1v1h-1zM435 462h1v1h-1zM438 462h1v1h-1zM441 462h1v1h-1zM444 462h1v1h-1zM447 462h1v1h-1zM450 462h1v1h-1zM453 462h1v1h-1zM456 462h1v1h-1zM459 462h1v1h-1zM462 462h1v1h-1zM465 462h1v1h-1zM468 462h1v1h-1zM471 462h1v1h-1zM474 462h1v1h-1zM477 462h1v1h-1zM480 462h1v1h-1zM483 462h1v1h-1zM486 462h1v1h-1zM489 462h1v1h-1zM492 462h1v1h-1zM495 462h1v1h-1zM498 462h1v1h-1zM501 462h1v1h-1zM504 462h1v1h-1zM507 462h1v1h-1zM510 462h1v1h-1zM513 462h1v1h-1zM516 462h1v1h-1zM519 462h1v1h-1zM522 462h1v1h-1zM525 462h1v1h-1zM528 462h1v1h-1zM531 462h1v1h-1zM534 462h1v1h-1zM537 462h1v1h-1zM540 462h1v1h-1zM543 462h1v1h-1zM546 462h1v1h-1zM549 462h1v1h-1zM552 462h1v1h-1zM555 462h1v1h-1zM558 462h1v1h-1zM561 462h1v1h-1zM564 462h1v1h-1zM567 462h1v1h-1zM570 462h1v1h-1zM573 462h1v1h-1zM576 462h1v1h-1zM579 462h1v1h-1zM582 462h1v1h-1zM585 462h1v1h-1zM588 462h1v1h-1zM591 462h1v1h-1zM594 462h1v1h-1zM597 462h1v1h-1zM600 462h1v1h-1zM603 462h1v1h-1zM606 462h1v1h-1zM609 462h1v1h-1zM612 462h1v1h-1zM615 462h1v1h-1zM618 462h1v1h-1zM621 462h1v1h-1zM624 462h1v1h-1zM627 462h1v1h-1zM630 462h1v1h-1zM633 462h1v1h-1zM636 462h1v1h-1zM639 462h1v1h-1zM642 462h1v1h-1zM645 462h1v1h-1zM648 462h1v1h-1zM651 462h1v1h-1zM654 462h1v1h-1zM657 462h1v1h-1zM660 462h1v1h-1zM663 462h1v1h-1zM666 462h1v1h-1zM669 462h1v1h-1zM672 462h1v1h-1zM675 462h1v1h-1zM678 462h1v1h-1zM681 462h1v1h-1zM684 462h1v1h-1zM687 462h1v1h-1zM690 462h1v1h-1zM693 462h1v1h-1zM696 462h1v1h-1zM699 462h1v1h-1zM702 462h1v1h-1zM705 462h1v1h-1zM708 462h1v1h-1zM711 462h1v1h-1zM714 462h1v1h-1zM717 462h1v1h-1zM720 462h1v1h-1zM723 462h1v1h-1zM726 462h1v1h-1zM729 462h1v1h-1zM732 462h1v1h-1zM735 462h1v1h-1zM738 462h1v1h-1zM741 462h1v1h-1zM744 462h1v1h-1zM747 462h1v1h-1zM750 462h1v1h-1zM115 342h1v1h-1zM115 345h1v1h-1zM115 348h1v1h-1zM115 351h1v1h-1zM115 354h1v1h-1zM115 357h1v1h-1zM115 360h1v1h-1zM115 363h1v1h-1zM115 366h1v1h-1zM115 369h1v1h-1zM115 372h1v1h-1zM115 375h1v1h-1zM115 378h1v1h-1zM115 381h1v1h-1zM115 384h1v1h-1zM115 387h1v1h-1zM115 390h1v1h-1zM115 393h1v1h-1zM115 396h1v1h-1zM115 399h1v1h-1zM115 402h1v1h-1zM115 405h1v1h-1zM115 408h1v1h-1zM115 411h1v1h-1zM115 414h1v1h-1zM115 417h1v1h-1zM115 420h1v1h-1zM115 423h1v1h-1zM115 426h1v1h-1zM115 429h1v1h-1zM115 432h1v1h-1zM115 435h1v1h-1zM115 438h1v1h-1zM115 441h1v1h-1zM115 444h1v1h-1zM115 447h1v1h-1zM115 450h1v1h-1zM115 453h1v1h-1zM115 456h1v1h-1zM115 459h1v1h-1zM115 462h1v1h-1zM115 465h1v1h-1zM115 468h1v1h-1zM115 471h1v1h-1zM186 342h1v1h-1zM186 345h1v1h-1zM186 348h1v1h-1zM186 351h1v1h-1zM186 354h1v1h-1zM186 357h1v1h-1zM186 360h1v1h-1zM186 363h1v1h-1zM186 366h1v1h-1zM186 369h1v1h-1zM186 372h1v1h-1zM186 375h1v1h-1zM186 378h1v1h-1zM186 381h1v1h-1zM186 384h1v1h-1zM186 387h1v1h-1zM186 390h1v1h-1zM186 393h1v1h-1zM186 396h1v1h-1zM186 399h1v1h-1zM186 402h1v1h-1zM186 405h1v1h-1zM186 408h1v1h-1zM186 411h1v1h-1zM186 414h1v1h-1zM186 417h1v1h-1zM186 420h1v1h-1zM186 423h1v1h-1zM186 426h1v1h-1zM186 429h1v1h-1zM186 432h1v1h-1zM186 435h1v1h-1zM186 438h1v1h-1zM186 441h1v1h-1zM186 444h1v1h-1zM186 447h1v1h-1zM186 450h1v1h-1zM186 453h1v1h-1zM186 456h1v1h-1zM186 459h1v1h-1zM186 462h1v1h-1zM186 465h1v1h-1zM186 468h1v1h-1zM186 471h1v1h-1zM257 342h1v1h-1zM257 345h1v1h-1zM257 348h1v1h-1zM257 351h1v1h-1zM257 354h1v1h-1zM257 357h1v1h-1zM257 360h1v1h-1zM257 363h1v1h-1zM257 366h1v1h-1zM257 369h1v1h-1zM257 372h1v1h-1zM257 375h1v1h-1zM257 378h1v1h-1zM257 381h1v1h-1zM257 384h1v1h-1zM257 387h1v1h-1zM257 390h1v1h-1zM257 393h1v1h-1zM257 396h1v1h-1zM257 399h1v1h-1zM257 402h1v1h-1zM257 405h1v1h-1zM257 408h1v1h-1zM257 411h1v1h-1zM257 414h1v1h-1zM257 417h1v1h-1zM257 420h1v1h-1zM257 423h1v1h-1zM257 426h1v1h-1zM257 429h1v1h-1zM257 432h1v1h-1zM257 435h1v1h-1zM257 438h1v1h-1zM257 441h1v1h-1zM257 444h1v1h-1zM257 447h1v1h-1zM257 450h1v1h-1zM257 453h1v1h-1zM257 456h1v1h-1zM257 459h1v1h-1zM257 462h1v1h-1zM257 465h1v1h-1zM257 468h1v1h-1zM257 471h1v1h-1zM328 342h1v1h-1zM328 345h1v1h-1zM328 348h1v1h-1zM328 351h1v1h-1zM328 354h1v1h-1zM328 357h1v1h-1zM328 360h1v1h-1zM328 363h1v1h-1zM328 366h1v1h-1zM328 369h1v1h-1zM328 372h1v1h-1zM328 375h1v1h-1zM328 378h1v1h-1zM328 381h1v1h-1zM328 384h1v1h-1zM328 387h1v1h-1zM328 390h1v1h-1zM328 393h1v1h-1zM328 396h1v1h-1zM328 399h1v1h-1zM328 402h1v1h-1zM328 405h1v1h-1zM328 408h1v1h-1zM328 411h1v1h-1zM328 414h1v1h-1zM328 417h1v1h-1zM328 420h1v1h-1zM328 423h1v1h-1zM328 426h1v1h-1zM328 429h1v1h-1zM328 432h1v1h-1zM328 435h1v1h-1zM328 438h1v1h-1zM328 441h1v1h-1zM328 444h1v1h-1zM328 447h1v1h-1zM328 450h1v1h-1zM328 453h1v1h-1zM328 456h1v1h-1zM328 459h1v1h-1zM328 462h1v1h-1zM328 465h1v1h-1zM328 468h1v1h-1zM328 471h1v1h-1zM399 342h1v1h-1zM399 345h1v1h-1zM399 348h1v1h-1zM399 351h1v1h-1zM399 354h1v1h-1zM399 357h1v1h-1zM399 360h1v1h-1zM399 363h1v1h-1zM399 366h1v1h-1zM399 369h1v1h-1zM399 372h1v1h-1zM399 375h1v1h-1zM399 378h1v1h-1zM399 381h1v1h-1zM399 384h1v1h-1zM399 387h1v1h-1zM399 390h1v1h-1zM399 393h1v1h-1zM399 396h1v1h-1zM399 399h1v1h-1zM399 402h1v1h-1zM399 405h1v1h-1zM399 408h1v1h-1zM399 411h1v1h-1zM399 414h1v1h-1zM399 417h1v1h-1zM399 420h1v1h-1zM399 423h1v1h-1zM399 426h1v1h-1zM399 429h1v1h-1zM399 432h1v1h-1zM399 435h1v1h-1zM399 438h1v1h-1zM399 441h1v1h-1zM399 444h1v1h-1zM399 447h1v1h-1zM399 450h1v1h-1zM399 453h1v1h-1zM399 456h1v1h-1zM399 459h1v1h-1zM399 462h1v1h-1zM399 465h1v1h-1zM399 468h1v1h-1zM399 471h1v1h-1zM470 342h1v1h-1zM470 345h1v1h-1zM470 348h1v1h-1zM470 351h1v1h-1zM470 354h1v1h-1zM470 357h1v1h-1zM470 360h1v1h-1zM470 363h1v1h-1zM470 366h1v1h-1zM470 369h1v1h-1zM470 372h1v1h-1zM470 375h1v1h-1zM470 378h1v1h-1zM470 381h1v1h-1zM470 384h1v1h-1zM470 387h1v1h-1zM470 390h1v1h-1zM470 393h1v1h-1zM470 396h1v1h-1zM470 399h1v1h-1zM470 402h1v1h-1zM470 405h1v1h-1zM470 408h1v1h-1zM470 411h1v1h-1zM470 414h1v1h-1zM470 417h1v1h-1zM470 420h1v1h-1zM470 423h1v1h-1zM470 426h1v1h-1zM470 429h1v1h-1zM470 432h1v1h-1zM470 435h1v1h-1zM470 438h1v1h-1zM470 441h1v1h-1zM470 444h1v1h-1zM470 447h1v1h-1zM470 450h1v1h-1zM470 453h1v1h-1zM470 456h1v1h-1zM470 459h1v1h-1zM470 462h1v1h-1zM470 465h1v1h-1zM470 468h1v1h-1zM470 471h1v1h-1zM541 342h1v1h-1zM541 345h1v1h-1zM541 348h1v1h-1zM541 351h1v1h-1zM541 354h1v1h-1zM541 357h1v1h-1zM541 360h1v1h-1zM541 363h1v1h-1zM541 366h1v1h-1zM541 369h1v1h-1zM541 372h1v1h-1zM541 375h1v1h-1zM541 378h1v1h-1zM541 381h1v1h-1zM541 384h1v1h-1zM541 387h1v1h-1zM541 390h1v1h-1zM541 393h1v1h-1zM541 396h1v1h-1zM541 399h1v1h-1zM541 402h1v1h-1zM541 405h1v1h-1zM541 408h1v1h-1zM541 411h1v1h-1zM541 414h1v1h-1zM541 417h1v1h-1zM541 420h1v1h-1zM541 423h1v1h-1zM541 426h1v1h-1zM541 429h1v1h-1zM541 432h1v1h-1zM541 435h1v1h-1zM541 438h1v1h-1zM541 441h1v1h-1zM541 444h1v1h-1zM541 447h1v1h-1zM541 450h1v1h-1zM541 453h1v1h-1zM541 456h1v1h-1zM541 459h1v1h-1zM541 462h1v1h-1zM541 465h1v1h-1zM541 468h1v1h-1zM541 471h1v1h-1zM612 342h1v1h-1zM612 345h1v1h-1zM612 348h1v1h-1zM612 351h1v1h-1zM612 354h1v1h-1zM612 357h1v1h-1zM612 360h1v1h-1zM612 363h1v1h-1zM612 366h1v1h-1zM612 369h1v1h-1zM612 372h1v1h-1zM612 375h1v1h-1zM612 378h1v1h-1zM612 381h1v1h-1zM612 384h1v1h-1zM612 387h1v1h-1zM612 390h1v1h-1zM612 393h1v1h-1zM612 396h1v1h-1zM612 399h1v1h-1zM612 402h1v1h-1zM612 405h1v1h-1zM612 408h1v1h-1zM612 411h1v1h-1zM612 414h1v1h-1zM612 417h1v1h-1zM612 420h1v1h-1zM612 423h1v1h-1zM612 426h1v1h-1zM612 429h1v1h-1zM612 432h1v1h-1zM612 435h1v1h-1zM612 438h1v1h-1zM612 441h1v1h-1zM612 444h1v1h-1zM612 447h1v1h-1zM612 450h1v1h-1zM612 453h1v1h-1zM612 456h1v1h-1zM612 459h1v1h-1zM612 462h1v1h-1zM612 465h1v1h-1zM612 468h1v1h-1zM612 471h1v1h-1zM683 342h1v1h-1zM683 345h1v1h-1zM683 348h1v1h-1zM683 351h1v1h-1zM683 354h1v1h-1zM683 357h1v1h-1zM683 360h1v1h-1zM683 363h1v1h-1zM683 366h1v1h-1zM683 369h1v1h-1zM683 372h1v1h-1zM683 375h1v1h-1zM683 378h1v1h-1zM683 381h1v1h-1zM683 384h1v1h-1zM683 387h1v1h-1zM683 390h1v1h-1zM683 393h1v1h-1zM683 396h1v1h-1zM683 399h1v1h-1zM683 402h1v1h-1zM683 405h1v1h-1zM683 408h1v1h-1zM683 411h1v1h-1zM683 414h1v1h-1zM683 417h1v1h-1zM683 420h1v1h-1zM683 423h1v1h-1zM683 426h1v1h-1zM683 429h1v1h-1zM683 432h1v1h-1zM683 435h1v1h-1zM683 438h1v1h-1zM683 441h1v1h-1zM683 444h1v1h-1zM683 447h1v1h-1zM683 450h1v1h-1zM683 453h1v1h-1zM683 456h1v1h-1zM683 459h1v1h-1zM683 462h1v1h-1zM683 465h1v1h-1zM683 468h1v1h-1zM683 471h1v1h-1z" fill="#808080"/>
<path d="M45 361h1v1h-1zM48 361h1v1h-1zM51 361h1v1h-1zM54 361h1v1h-1zM57 361h1v1h-1zM60 361h1v1h-1zM63 361h1v1h-1zM66 361h1v1h-1zM69 361h1v1h-1zM72 361h1v1h-1zM75 361h1v1h-1zM78 361h1v1h-1zM81 361h1v1h-1zM84 361h1v1h-1zM87 361h1v1h-1zM90 361h1v1h-1zM93 361h1v1h-1zM96 361h1v1h-1zM99 361h1v1h-1zM102 361h1v1h-1zM105 361h1v1h-1zM108 361h1v1h-1zM111 361h1v1h-1zM114 361h1v1h-1zM117 361h1v1h-1zM120 361h1v1h-1zM123 361h1v1h-1zM126 361h1v1h-1zM129 361h1v1h-1zM132 361h1v1h-1zM135 361h1v1h-1zM138 361h1v1h-1zM141 361h1v1h-1zM144 361h1v1h-1zM147 361h1v1h-1zM150 361h1v1h-1zM153 361h1v1h-1zM156 361h1v1h-1zM159 361h1v1h-1zM162 361h1v1h-1zM165 361h1v1h-1zM168 361h1v1h-1zM171 361h1v1h-1zM174 361h1v1h-1zM177 361h1v1h-1zM180 361h1v1h-1zM183 361h1v1h-1zM186 361h1v1h-1zM189 361h1v1h-1zM192 361h1v1h-1zM195 361h1v1h-1zM198 361h1v1h-1zM201 361h1v1h-1zM204 361h1v1h-1zM207 361h1v1h-1zM210 361h1v1h-1zM213 361h1v1h-1zM216 361h1v1h-1zM219 361h1v1h-1zM222 361h1v1h-1zM225 361h1v1h-1zM228 361h1v1h-1zM231 361h1v1h-1zM234 361h1v1h-1zM237 361h1v1h-1zM240 361h1v1h-1zM243 361h1v1h-1zM246 361h1v1h-1zM249 361h1v1h-1zM252 361h1v1h-1zM255 361h1v1h-1zM258 361h1v1h-1zM261 361h1v1h-1zM264 361h1v1h-1zM267 361h1v1h-1zM270 361h1v1h-1zM273 361h1v1h-1zM276 361h1v1h-1zM279 361h1v1h-1zM282 361h1v1h-1zM285 361h1v1h-1zM288 361h1v1h-1zM291 361h1v1h-1zM294 361h1v1h-1zM297 361h1v1h-1zM300 361h1v1h-1zM303 361h1v1h-1zM306 361h1v1h-1zM309 361h1v1h-1zM312 361h1v1h-1zM315 361h1v1h-1zM318 361h1v1h-1zM321 361h1v1h-1zM324 361h1v1h-1zM327 361h1v1h-1zM330 361h1v1h-1zM333 361h1v1h-1zM336 361h1v1h-1zM339 361h1v1h-1zM342 361h1v1h-1zM345 361h1v1h-1zM348 361h1v1h-1zM351 361h1v1h-1zM354 361h1v1h-1zM357 361h1v1h-1zM360 361h1v1h-1zM363 361h1v1h-1zM366 361h1v1h-1zM369 361h1v1h-1zM372 361h1v1h-1zM375 361h1v1h-1zM378 361h1v1h-1zM381 361h1v1h-1zM384 361h1v1h-1zM387 361h1v1h-1zM390 361h1v1h-1zM393 361h1v1h-1zM396 361h1v1h-1zM399 361h1v1h-1zM402 361h1v1h-1zM405 361h1v1h-1zM408 361h1v1h-1zM411 361h1v1h-1zM414 361h1v1h-1zM417 361h1v1h-1zM420 361h1v1h-1zM423 361h1v1h-1zM426 361h1v1h-1zM429 361h1v1h-1zM432 361h1v1h-1zM435 361h1v1h-1zM438 361h1v1h-1zM441 361h1v1h-1zM444 361h1v1h-1zM447 361h1v1h-1zM450 361h1v1h-1zM453 361h1v1h-1zM456 361h1v1h-1zM459 361h1v1h-1zM462 361h1v1h-1zM465 361h1v1h-1zM468 361h1v1h-1zM471 361h1v1h-1zM474 361h1v1h-1zM477 361h1v1h-1zM480 361h1v1h-1zM483 361h1v1h-1zM486 361h1v1h-1zM489 361h1v1h-1zM492 361h1v1h-1zM495 361h1v1h-1zM498 361h1v1h-1zM501 361h1v1h-1zM504 361h1v1h-1zM507 361h1v1h-1zM510 361h1v1h-1zM513 361h1v1h-1zM516 361h1v1h-1zM519 361h1v1h-1zM522 361h1v1h-1zM525 361h1v1h-1zM528 361h1v1h-1zM531 361h1v1h-1zM534 361h1v1h-1zM537 361h1v1h-1zM540 361h1v1h-1zM543 361h1v1h-1zM546 361h1v1h-1zM549 361h1v1h-1zM552 361h1v1h-1zM555 361h1v1h-1zM558 361h1v1h-1zM561 361h1v1h-1zM564 361h1v1h-1zM567 361h1v1h-1zM570 361h1v1h-1zM573 361h1v1h-1zM576 361h1v1h-1zM579 361h1v1h-1zM582 361h1v1h-1zM585 361h1v1h-1zM588 361h1v1h-1zM591 361h1v1h-1zM594 361h1v1h-1zM597 361h1v1h-1zM600 361h1v1h-1zM603 361h1v1h-1zM606 361h1v1h-1zM609 361h1v1h-1zM612 361h1v1h-1zM615 361h1v1h-1zM618 361h1v1h-1zM621 361h1v1h-1zM624 361h1v1h-1zM627 361h1v1h-1zM630 361h1v1h-1zM633 361h1v1h-1zM636 361h1v1h-1zM639 361h1v1h-1zM642 361h1v1h-1zM645 361h1v1h-1zM648 361h1v1h-1zM651 361h1v1h-1zM654 361h1v1h-1zM657 361h1v1h-1zM660 361h1v1h-1zM663 361h1v1h-1zM666 361h1v1h-1zM669 361h1v1h-1zM672 361h1v1h-1zM675 361h1v1h-1zM678 361h1v1h-1zM681 361h1v1h-1zM684 361h1v1h-1zM687 361h1v1h-1zM690 361h1v1h-1zM693 361h1v1h-1zM696 361h1v1h-1zM699 361h1v1h-1zM702 361h1v1h-1zM705 361h1v1h-1zM708 361h1v1h-1zM711 361h1v1h-1zM714 361h1v1h-1zM717 361h1v1h-1zM720 361h1v1h-1zM723 361h1v1h-1zM726 361h1v1h-1zM729 361h1v1h-1zM732 361h1v1h-1zM735 361h1v1h-1zM738 361h1v1h-1zM741 361h1v1h-1zM744 361h1v1h-1zM747 361h1v1h-1zM750 361h1v1h-1zM45 437h1v1h-1zM48 437h1v1h-1zM51 437h1v1h-1zM54 437h1v1h-1zM57 437h1v1h-1zM60 437h1v1h-1zM63 437h1v1h-1zM66 437h1v1h-1zM69 437h1v1h-1zM72 437h1v1h-1zM75 437h1v1h-1zM78 437h1v1h-1zM81 437h1v1h-1zM84 437h1v1h-1zM87 437h1v1h-1zM90 437h1v1h-1zM93 437h1v1h-1zM96 437h1v1h-1zM99 437h1v1h-1zM102 437h1v1h-1zM105 437h1v1h-1zM108 437h1v1h-1zM111 437h1v1h-1zM114 437h1v1h-1zM117 437h1v1h-1zM120 437h1v1h-1zM123 437h1v1h-1zM126 437h1v1h-1zM129 437h1v1h-1zM132 437h1v1h-1zM135 437h1v1h-1zM138 437h1v1h-1zM141 437h1v1h-1zM144 437h1v1h-1zM147 437h1v1h-1zM150 437h1v1h-1zM153 437h1v1h-1zM156 437h1v1h-1zM159 437h1v1h-1zM162 437h1v1h-1zM165 437h1v1h-1zM168 437h1v1h-1zM171 437h1v1h-1zM174 437h1v1h-1zM177 437h1v1h-1zM180 437h1v1h-1zM183 437h1v1h-1zM186 437h1v1h-1zM189 437h1v1h-1zM192 437h1v1h-1zM195 437h1v1h-1zM198 437h1v1h-1zM201 437h1v1h-1zM204 437h1v1h-1zM207 437h1v1h-1zM210 437h1v1h-1zM213 437h1v1h-1zM216 437h1v1h-1zM219 437h1v1h-1zM222 437h1v1h-1zM225 437h1v1h-1zM228 437h1v1h-1zM231 437h1v1h-1zM234 437h1v1h-1zM237 437h1v1h-1zM240 437h1v1h-1zM243 437h1v1h-1zM246 437h1v1h-1zM249 437h1v1h-1zM252 437h1v1h-1zM255 437h1v1h-1zM258 437h1v1h-1zM261 437h1v1h-1zM264 437h1v1h-1zM267 437h1v1h-1zM270 437h1v1h-1zM273 437h1v1h-1zM276 437h1v1h-1zM279 437h1v1h-1zM282 437h1v1h-1zM285 437h1v1h-1zM288 437h1v1h-1zM291 437h1v1h-1zM294 437h1v1h-1zM297 437h1v1h-1zM300 437h1v1h-1zM303 437h1v1h-1zM306 437h1v1h-1zM309 437h1v1h-1zM312 437h1v1h-1zM315 437h1v1h-1zM318 437h1v1h-1zM321 437h1v1h-1zM324 437h1v1h-1zM327 437h1v1h-1zM330 437h1v1h-1zM333 437h1v1h-1zM336 437h1v1h-1zM339 437h1v1h-1zM342 437h1v1h-1zM345 437h1v1h-1zM348 437h1v1h-1zM351 437h1v1h-1zM354 437h1v1h-1zM357 437h1v1h-1zM360 437h1v1h-1zM363 437h1v1h-1zM366 437h1v1h-1zM369 437h1v1h-1zM372 437h1v1h-1zM375 437h1v1h-1zM378 437h1v1h-1zM381 437h1v1h-1zM384 437h1v1h-1zM387 437h1v1h-1zM390 437h1v1h-1zM393 437h1v1h-1zM396 437h1v1h-1zM399 437h1v1h-1zM402 437h1v1h-1zM405 437h1v1h-1zM408 437h1v1h-1zM411 437h1v1h-1zM414 437h1v1h-1zM417 437h1v1h-1zM420 437h1v1h-1zM423 437h1v1h-1zM426 437h1v1h-1zM429 437h1v1h-1zM432 437h1v1h-1zM435 437h1v1h-1zM438 437h1v1h-1zM441 437h1v1h-1zM444 437h1v1h-1zM447 437h1v1h-1zM450 437h1v1h-1zM453 437h1v1h-1zM456 437h1v1h-1zM459 437h1v1h-1zM462 437h1v1h-1zM465 437h1v1h-1zM468 437h1v1h-1zM471 437h1v1h-1zM474 437h1v1h-1zM477 437h1v1h-1zM480 437h1v1h-1zM483 437h1v1h-1zM486 437h1v1h-1zM489 437h1v1h-1zM492 437h1v1h-1zM495 437h1v1h-1zM498 437h1v1h-1zM501 437h1v1h-1zM504 437h1v1h-1zM507 437h1v1h-1zM510 437h1v1h-1zM513 437h1v1h-1zM516 437h1v1h-1zM519 437h1v1h-1zM522 437h1v1h-1zM525 437h1v1h-1zM528 437h1v1h-1zM531 437h1v1h-1zM534 437h1v1h-1zM537 437h1v1h-1zM540 437h1v1h-1zM543 437h1v1h-1zM546 437h1v1h-1zM549 437h1v1h-1zM552 437h1v1h-1zM555 437h1v1h-1zM558 437h1v1h-1zM561 437h1v1h-1zM564 437h1v1h-1zM567 437h1v1h-1zM570 437h1v1h-1zM573 437h1v1h-1zM576 437h1v1h-1zM579 437h1v1h-1zM582 437h1v1h-1zM585 437h1v1h-1zM588 437h1v1h-1zM591 437h1v1h-1zM594 437h1v1h-1zM597 437h1v1h-1zM600 437h1v1h-1zM603 437h1v1h-1zM606 437h1v1h-1zM609 437h1v1h-1zM612 437h1v1h-1zM615 437h1v1h-1zM618 437h1v1h-1zM621 437h1v1h-1zM624 437h1v1h-1zM627 437h1v1h-1zM630 437h1v1h-1zM633 437h1v1h-1zM636 437h1v1h-1zM639 437h1v1h-1zM642 437h1v1h-1zM645 437h1v1h-1zM648 437h1v1h-1zM651 437h1v1h-1zM654 437h1v1h-1zM657 437h1v1h-1zM660 437h1v1h-1zM663 437h1v1h-1zM666 437h1v1h-1zM669 437h1v1h-1zM672 437h1v1h-1zM675 437h1v1h-1zM678 437h1v1h-1zM681 437h1v1h-1zM684 437h1v1h-1zM687 437h1v1h-1zM690 437h1v1h-1zM693 437h1v1h-1zM696 437h1v1h-1zM699 437h1v1h-1zM702 437h1v1h-1zM705 437h1v1h-1zM708 437h1v1h-1zM711 437h1v1h-1zM714 437h1v1h-1zM717 437h1v1h-1zM720 437h1v1h-1zM723 437h1v1h-1zM726 437h1v1h-1zM729 437h1v1h-1zM732 437h1v1h-1zM735 437h1v1h-1zM738 437h1v1h-1zM741 437h1v1h-1zM744 437h1v1h-1zM747 437h1v1h-1zM750 437h1v1h-1z" fill="#ff0000"/>
<path d="M706 342h1v1h-1zM706 345h1v1h-1zM706 348h1v1h-1zM706 351h1v1h-1zM706 354h1v1h-1zM706 357h1v1h-1zM706 360h1v1h-1zM706 363h1v1h-1zM706 366h1v1h-1zM706 369h1v1h-1zM706 372h1v1h-1zM706 375h1v1h-1zM706 378h1v1h-1zM706 381h1v1h-1zM706 384h1v1h-1zM706 387h1v1h-1zM706 390h1v1h-1zM706 393h1v1h-1zM706 396h1v1h-1zM706 399h1v1h-1zM706 402h1v1h-1zM706 405h1v1h-1zM706 408h1v1h-1zM706 411h1v1h-1zM706 414h1v1h-1zM706 417h1v1h-1zM706 420h1v1h-1zM706 423h1v1h-1zM706 426h1v1h-1zM706 429h1v1h-1zM706 432h1v1h-1zM706 435h1v1h-1zM706 438h1v1h-1zM706 441h1v1h-1zM706 444h1v1h-1zM706 447h1v1h-1zM706 450h1v1h-1zM706 453h1v1h-1zM706 456h1v1h-1zM706 459h1v1h-1zM706 462h1v1h-1zM706 465h1v1h-1zM706 468h1v1h-1zM706 471h1v1h-1z" fill="#000"/>
</g>
<text x="49.3" y="358" font-size="14" text-anchor="start" fill="#000" textLength="20.5" lengthAdjust="spacingAndGlyphs">BIS</text>
<text x="41.4" y="356" font-size="11" text-anchor="end" fill="#000" textLength="17.55" lengthAdjust="spacingAndGlyphs">500</text>
<text x="41.4" y="372" font-size="11" text-anchor="end" fill="#000" textLength="17.55" lengthAdjust="spacingAndGlyphs">200</text>
<text x="41.4" y="385" font-size="11" text-anchor="end" fill="#000" textLength="17.55" lengthAdjust="spacingAndGlyphs">100</text>
<text x="41.4" y="397" font-size="11" text-anchor="end" fill="#000" textLength="11.7" lengthAdjust="spacingAndGlyphs">50</text>
<text x="41.4" y="413" font-size="11" text-anchor="end" fill="#000" textLength="11.7" lengthAdjust="spacingAndGlyphs">20</text>
<text x="41.4" y="426" font-size="11" text-anchor="end" fill="#000" textLength="11.7" lengthAdjust="spacingAndGlyphs">10</text>
<text x="41.4" y="438" font-size="11" text-anchor="end" fill="#000" textLength="5.85" lengthAdjust="spacingAndGlyphs">5</text>
<text x="41.4" y="454" font-size="11" text-anchor="end" fill="#000" textLength="5.85" lengthAdjust="spacingAndGlyphs">2</text>
<text x="41.4" y="467" font-size="11" text-anchor="end" fill="#000" textLength="5.85" lengthAdjust="spacingAndGlyphs">1</text>
<text x="186" y="487" font-size="11" text-anchor="middle" fill="#000" textLength="27" lengthAdjust="spacingAndGlyphs">10 GB</text>
<text x="328" y="487" font-size="11" text-anchor="middle" fill="#000" textLength="27" lengthAdjust="spacingAndGlyphs">20 GB</text>
<text x="470.5" y="487" font-size="11" text-anchor="middle" fill="#000" textLength="27" lengthAdjust="spacingAndGlyphs">30 GB</text>
<text x="612.5" y="487" font-size="11" text-anchor="middle" fill="#000" textLength="27" lengthAdjust="spacingAndGlyphs">40 GB</text>
</svg></body></html>
